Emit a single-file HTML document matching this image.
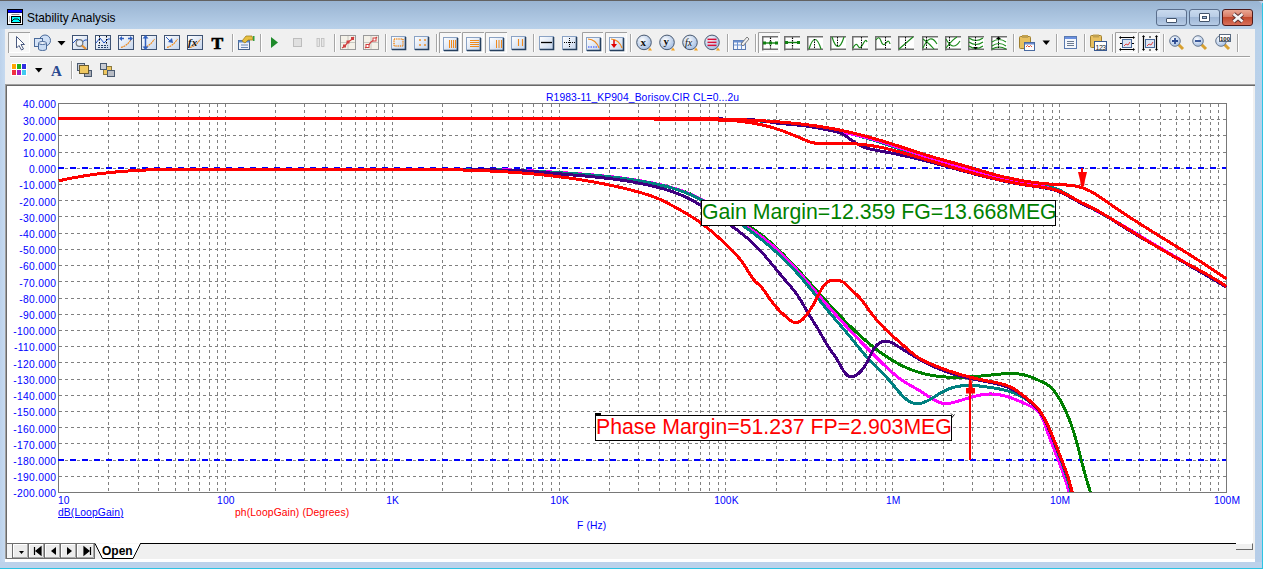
<!DOCTYPE html>
<html><head><meta charset="utf-8"><style>
*{margin:0;padding:0;box-sizing:border-box}
html,body{width:1263px;height:569px;overflow:hidden;background:#bcd2eb;font-family:"Liberation Sans", sans-serif}
.abs{position:absolute}
.g{stroke:#808080;stroke-width:1;stroke-dasharray:3 3}
.yl{position:absolute;right:1206.7px;font-size:10.3px;letter-spacing:0.3px;color:#0000ff;line-height:12px;white-space:nowrap}
.xl{position:absolute;font-size:10.3px;letter-spacing:0.12px;color:#0000ff;line-height:12px;white-space:nowrap}
.xc{width:60px;text-align:center}
.ann{position:absolute;background:#fff;border:1px solid #000;font-size:21.27px;line-height:22px;white-space:nowrap;padding-left:0px}
.wb{position:absolute;top:9px;height:17px;border-radius:3px;border:1px solid #5a6e8c}
</style></head><body>
<div class="abs" style="left:0;top:0;width:1263px;height:1px;background:#626262"></div>
<div class="abs" style="left:0;top:1px;width:1262px;height:28px;background:linear-gradient(#99b4d2,#b9d1ea);border-top-right-radius:5px"></div>
<div class="abs" style="left:0;top:29px;width:5px;height:533px;background:linear-gradient(90deg,#bcd2eb,#c6daf0)"></div>
<div class="abs" style="left:1255px;top:29px;width:7px;height:539px;background:linear-gradient(#b9d1ea,#b6cde8)"></div>
<div class="abs" style="left:1262px;top:3px;width:1px;height:566px;background:#2ec4e4"></div>
<div class="abs" style="left:0;top:562px;width:1262px;height:6px;background:#bcd2eb"></div>
<div class="abs" style="left:0;top:568px;width:1263px;height:1px;background:#2ec4e4"></div>
<!-- title icon -->
<svg class="abs" style="left:7px;top:9px" width="16" height="16"><rect x="0" y="0" width="16" height="16" fill="#000"/><rect x="1" y="1" width="14" height="2.5" fill="#0000ff"/><rect x="1" y="4" width="14" height="11" fill="#fff"/><rect x="4.5" y="5" width="8" height="1" fill="#909090"/><rect x="2" y="7.5" width="1" height="1" fill="#888"/><rect x="2" y="9.5" width="1" height="1" fill="#888"/><rect x="2" y="11.5" width="1" height="1" fill="#888"/><rect x="4" y="7" width="10" height="7" fill="#000"/><rect x="5" y="8" width="8" height="5" fill="#00ffff"/><path d="M5,12 L7,10 H11 L13,12" stroke="#000" stroke-width="0.9" fill="none"/></svg>
<div class="abs" style="left:27px;top:11px;font-size:11.9px;color:#000;line-height:15px">Stability Analysis</div>
<!-- window buttons -->
<div class="wb" style="left:1156px;width:31px;background:linear-gradient(#c9daee 0%,#b9cde6 45%,#9fb7d6 50%,#b6cbe5 100%)"><div class="abs" style="left:9px;top:8px;width:11px;height:5px;background:#fff;border:1px solid #42536b;border-radius:1px"></div></div>
<div class="wb" style="left:1189px;width:31px;background:linear-gradient(#c9daee 0%,#b9cde6 45%,#9fb7d6 50%,#b6cbe5 100%)"><div class="abs" style="left:9px;top:3px;width:11px;height:9px;background:#fff;border:1px solid #42536b;border-radius:1px"><div class="abs" style="left:2px;top:2px;width:5px;height:3px;background:#a8c0dc;border:1px solid #42536b"></div></div></div>
<div class="wb" style="left:1222px;width:31px;border-color:#4e1a1a;background:linear-gradient(#eaa894 0%,#d97a64 45%,#c24a2e 50%,#d8705a 100%)"><svg class="abs" style="left:0;top:0" width="31" height="17"><path d="M10.5,4 L19.5,11.5 M19.5,4 L10.5,11.5" stroke="#5a3030" stroke-width="4.4"/><path d="M10.5,4 L19.5,11.5 M19.5,4 L10.5,11.5" stroke="#f4f4f4" stroke-width="2.6"/></svg></div>
<!-- toolbar -->
<div class="abs" style="left:5px;top:29px;width:1250px;height:55px;background:#f0f0f0"></div>
<div class="abs" style="left:10px;top:56px;width:1240px;height:1px;background:#a0a0a0"></div>
<div class="abs" style="left:10px;top:57px;width:1240px;height:1px;background:#ffffff"></div>
<!-- chart panel -->
<div class="abs" style="left:5px;top:84px;width:1250px;height:475px;background:#fff;border-top:1px solid #a0a0a0;border-left:1px solid #a0a0a0"></div>
<div class="abs" style="left:6px;top:85px;width:1249px;height:474px;border-top:1px solid #696969;border-left:1px solid #696969;background:#fff"></div>
<div class="abs" style="left:1253px;top:86px;width:2px;height:473px;background:#f0f0f0"></div>
<!-- tab bar -->
<div class="abs" style="left:7px;top:543px;width:1246px;height:16px;background:#f0f0f0"></div>
<div class="abs" style="left:140px;top:543px;width:1096px;height:1px;background:#000"></div>
<div class="abs" style="left:1236px;top:543px;width:17px;height:7px;background:#f0f0f0;border-right:1px solid #696969;border-bottom:1px solid #696969;border-top:1px solid #fff"></div>
<div class="abs" style="left:5px;top:559px;width:1250px;height:3px;background:#fff"></div>
<svg class="abs" style="left:0;top:0" width="1263" height="569">
<defs><linearGradient id="gb" x1="0" y1="0" x2="1" y2="1"><stop offset="0" stop-color="#ffffff"/><stop offset="1" stop-color="#c4d4ec"/></linearGradient><radialGradient id="cb" cx="0.4" cy="0.35" r="0.7"><stop offset="0" stop-color="#ffffff"/><stop offset="1" stop-color="#9cb8e0"/></radialGradient><clipPath id="pc"><rect x="58" y="103" width="1169" height="390"/></clipPath></defs>
<line x1="108.5" y1="104" x2="108.5" y2="492" class="g"/>
<line x1="138.5" y1="104" x2="138.5" y2="492" class="g"/>
<line x1="158.5" y1="104" x2="158.5" y2="492" class="g"/>
<line x1="175.5" y1="104" x2="175.5" y2="492" class="g"/>
<line x1="188.5" y1="104" x2="188.5" y2="492" class="g"/>
<line x1="199.5" y1="104" x2="199.5" y2="492" class="g"/>
<line x1="209.5" y1="104" x2="209.5" y2="492" class="g"/>
<line x1="217.5" y1="104" x2="217.5" y2="492" class="g"/>
<line x1="225.5" y1="104" x2="225.5" y2="492" class="g"/>
<line x1="275.5" y1="104" x2="275.5" y2="492" class="g"/>
<line x1="304.5" y1="104" x2="304.5" y2="492" class="g"/>
<line x1="325.5" y1="104" x2="325.5" y2="492" class="g"/>
<line x1="341.5" y1="104" x2="341.5" y2="492" class="g"/>
<line x1="355.5" y1="104" x2="355.5" y2="492" class="g"/>
<line x1="366.5" y1="104" x2="366.5" y2="492" class="g"/>
<line x1="376.5" y1="104" x2="376.5" y2="492" class="g"/>
<line x1="384.5" y1="104" x2="384.5" y2="492" class="g"/>
<line x1="392.5" y1="104" x2="392.5" y2="492" class="g"/>
<line x1="442.5" y1="104" x2="442.5" y2="492" class="g"/>
<line x1="471.5" y1="104" x2="471.5" y2="492" class="g"/>
<line x1="492.5" y1="104" x2="492.5" y2="492" class="g"/>
<line x1="508.5" y1="104" x2="508.5" y2="492" class="g"/>
<line x1="522.5" y1="104" x2="522.5" y2="492" class="g"/>
<line x1="533.5" y1="104" x2="533.5" y2="492" class="g"/>
<line x1="542.5" y1="104" x2="542.5" y2="492" class="g"/>
<line x1="551.5" y1="104" x2="551.5" y2="492" class="g"/>
<line x1="559.5" y1="104" x2="559.5" y2="492" class="g"/>
<line x1="609.5" y1="104" x2="609.5" y2="492" class="g"/>
<line x1="638.5" y1="104" x2="638.5" y2="492" class="g"/>
<line x1="659.5" y1="104" x2="659.5" y2="492" class="g"/>
<line x1="675.5" y1="104" x2="675.5" y2="492" class="g"/>
<line x1="688.5" y1="104" x2="688.5" y2="492" class="g"/>
<line x1="700.5" y1="104" x2="700.5" y2="492" class="g"/>
<line x1="709.5" y1="104" x2="709.5" y2="492" class="g"/>
<line x1="718.5" y1="104" x2="718.5" y2="492" class="g"/>
<line x1="725.5" y1="104" x2="725.5" y2="492" class="g"/>
<line x1="776.5" y1="104" x2="776.5" y2="492" class="g"/>
<line x1="805.5" y1="104" x2="805.5" y2="492" class="g"/>
<line x1="826.5" y1="104" x2="826.5" y2="492" class="g"/>
<line x1="842.5" y1="104" x2="842.5" y2="492" class="g"/>
<line x1="855.5" y1="104" x2="855.5" y2="492" class="g"/>
<line x1="866.5" y1="104" x2="866.5" y2="492" class="g"/>
<line x1="876.5" y1="104" x2="876.5" y2="492" class="g"/>
<line x1="885.5" y1="104" x2="885.5" y2="492" class="g"/>
<line x1="892.5" y1="104" x2="892.5" y2="492" class="g"/>
<line x1="943.5" y1="104" x2="943.5" y2="492" class="g"/>
<line x1="972.5" y1="104" x2="972.5" y2="492" class="g"/>
<line x1="993.5" y1="104" x2="993.5" y2="492" class="g"/>
<line x1="1009.5" y1="104" x2="1009.5" y2="492" class="g"/>
<line x1="1022.5" y1="104" x2="1022.5" y2="492" class="g"/>
<line x1="1033.5" y1="104" x2="1033.5" y2="492" class="g"/>
<line x1="1043.5" y1="104" x2="1043.5" y2="492" class="g"/>
<line x1="1052.5" y1="104" x2="1052.5" y2="492" class="g"/>
<line x1="1059.5" y1="104" x2="1059.5" y2="492" class="g"/>
<line x1="1109.5" y1="104" x2="1109.5" y2="492" class="g"/>
<line x1="1139.5" y1="104" x2="1139.5" y2="492" class="g"/>
<line x1="1160.5" y1="104" x2="1160.5" y2="492" class="g"/>
<line x1="1176.5" y1="104" x2="1176.5" y2="492" class="g"/>
<line x1="1189.5" y1="104" x2="1189.5" y2="492" class="g"/>
<line x1="1200.5" y1="104" x2="1200.5" y2="492" class="g"/>
<line x1="1210.5" y1="104" x2="1210.5" y2="492" class="g"/>
<line x1="1218.5" y1="104" x2="1218.5" y2="492" class="g"/>
<line x1="59" y1="119.5" x2="1226" y2="119.5" class="g"/>
<line x1="59" y1="135.5" x2="1226" y2="135.5" class="g"/>
<line x1="59" y1="152.5" x2="1226" y2="152.5" class="g"/>
<line x1="59" y1="168.5" x2="1226" y2="168.5" class="g"/>
<line x1="59" y1="184.5" x2="1226" y2="184.5" class="g"/>
<line x1="59" y1="200.5" x2="1226" y2="200.5" class="g"/>
<line x1="59" y1="216.5" x2="1226" y2="216.5" class="g"/>
<line x1="59" y1="233.5" x2="1226" y2="233.5" class="g"/>
<line x1="59" y1="249.5" x2="1226" y2="249.5" class="g"/>
<line x1="59" y1="265.5" x2="1226" y2="265.5" class="g"/>
<line x1="59" y1="281.5" x2="1226" y2="281.5" class="g"/>
<line x1="59" y1="298.5" x2="1226" y2="298.5" class="g"/>
<line x1="59" y1="314.5" x2="1226" y2="314.5" class="g"/>
<line x1="59" y1="330.5" x2="1226" y2="330.5" class="g"/>
<line x1="59" y1="346.5" x2="1226" y2="346.5" class="g"/>
<line x1="59" y1="362.5" x2="1226" y2="362.5" class="g"/>
<line x1="59" y1="379.5" x2="1226" y2="379.5" class="g"/>
<line x1="59" y1="395.5" x2="1226" y2="395.5" class="g"/>
<line x1="59" y1="411.5" x2="1226" y2="411.5" class="g"/>
<line x1="59" y1="427.5" x2="1226" y2="427.5" class="g"/>
<line x1="59" y1="443.5" x2="1226" y2="443.5" class="g"/>
<line x1="59" y1="460.5" x2="1226" y2="460.5" class="g"/>
<line x1="59" y1="476.5" x2="1226" y2="476.5" class="g"/>
<rect x="58.5" y="103.5" width="1168" height="389" fill="none" stroke="#787878" stroke-width="1"/>
<line x1="58" y1="168" x2="1226" y2="168" stroke="#0000ff" stroke-width="2" stroke-dasharray="6 6"/>
<line x1="58" y1="460" x2="1226" y2="460" stroke="#0000ff" stroke-width="2" stroke-dasharray="6 6"/>
<path d="M58.5,118.23 L59.5,118.23 L60.5,118.23 L61.5,118.24 L62.5,118.24 L63.5,118.24 L64.5,118.25 L65.5,118.25 L66.5,118.25 L67.5,118.25 L68.5,118.26 L69.5,118.26 L70.5,118.26 L71.5,118.27 L72.5,118.27 L73.5,118.27 L74.5,118.27 L75.5,118.28 L76.5,118.28 L77.5,118.28 L78.5,118.28 L79.5,118.29 L80.5,118.29 L81.5,118.29 L82.5,118.29 L83.5,118.30 L84.5,118.30 L85.5,118.30 L86.5,118.30 L87.5,118.30 L88.5,118.31 L89.5,118.31 L90.5,118.31 L91.5,118.31 L92.5,118.32 L93.5,118.32 L94.5,118.32 L95.5,118.32 L96.5,118.32 L97.5,118.33 L98.5,118.33 L99.5,118.33 L100.5,118.33 L101.5,118.33 L102.5,118.33 L103.5,118.34 L104.5,118.34 L105.5,118.34 L106.5,118.34 L107.5,118.34 L108.5,118.34 L109.5,118.34 L110.5,118.35 L111.5,118.35 L112.5,118.35 L113.5,118.35 L114.5,118.35 L115.5,118.35 L116.5,118.35 L117.5,118.36 L118.5,118.36 L119.5,118.36 L120.5,118.36 L121.5,118.36 L122.5,118.36 L123.5,118.36 L124.5,118.36 L125.5,118.36 L126.5,118.37 L127.5,118.37 L128.5,118.37 L129.5,118.37 L130.5,118.37 L131.5,118.37 L132.5,118.37 L133.5,118.37 L134.5,118.37 L135.5,118.37 L136.5,118.37 L137.5,118.37 L138.5,118.38 L139.5,118.38 L140.5,118.38 L141.5,118.38 L142.5,118.38 L143.5,118.38 L144.5,118.38 L145.5,118.38 L146.5,118.38 L147.5,118.38 L148.5,118.38 L149.5,118.38 L150.5,118.38 L151.5,118.38 L152.5,118.38 L153.5,118.38 L154.5,118.38 L155.5,118.38 L156.5,118.38 L157.5,118.38 L158.5,118.38 L159.5,118.38 L160.5,118.38 L161.5,118.38 L162.5,118.38 L163.5,118.38 L164.5,118.39 L165.5,118.39 L166.5,118.39 L167.5,118.39 L168.5,118.39 L169.5,118.39 L170.5,118.39 L171.5,118.39 L172.5,118.39 L173.5,118.39 L174.5,118.39 L175.5,118.39 L176.5,118.39 L177.5,118.39 L178.5,118.38 L179.5,118.38 L180.5,118.38 L181.5,118.38 L182.5,118.38 L183.5,118.38 L184.5,118.38 L185.5,118.38 L186.5,118.38 L187.5,118.38 L188.5,118.38 L189.5,118.38 L190.5,118.38 L191.5,118.38 L192.5,118.38 L193.5,118.38 L194.5,118.38 L195.5,118.38 L196.5,118.38 L197.5,118.38 L198.5,118.38 L199.5,118.38 L200.5,118.38 L201.5,118.38 L202.5,118.38 L203.5,118.38 L204.5,118.38 L205.5,118.38 L206.5,118.38 L207.5,118.38 L208.5,118.38 L209.5,118.37 L210.5,118.37 L211.5,118.37 L212.5,118.37 L213.5,118.37 L214.5,118.37 L215.5,118.37 L216.5,118.37 L217.5,118.37 L218.5,118.37 L219.5,118.37 L220.5,118.37 L221.5,118.37 L222.5,118.37 L223.5,118.37 L224.5,118.37 L225.5,118.37 L226.5,118.36 L227.5,118.36 L228.5,118.36 L229.5,118.36 L230.5,118.36 L231.5,118.36 L232.5,118.36 L233.5,118.36 L234.5,118.36 L235.5,118.36 L236.5,118.36 L237.5,118.36 L238.5,118.36 L239.5,118.36 L240.5,118.36 L241.5,118.36 L242.5,118.35 L243.5,118.35 L244.5,118.35 L245.5,118.35 L246.5,118.35 L247.5,118.35 L248.5,118.35 L249.5,118.35 L250.5,118.35 L251.5,118.35 L252.5,118.35 L253.5,118.35 L254.5,118.35 L255.5,118.35 L256.5,118.34 L257.5,118.34 L258.5,118.34 L259.5,118.34 L260.5,118.34 L261.5,118.34 L262.5,118.34 L263.5,118.34 L264.5,118.34 L265.5,118.34 L266.5,118.34 L267.5,118.34 L268.5,118.34 L269.5,118.34 L270.5,118.34 L271.5,118.33 L272.5,118.33 L273.5,118.33 L274.5,118.33 L275.5,118.33 L276.5,118.33 L277.5,118.33 L278.5,118.33 L279.5,118.33 L280.5,118.33 L281.5,118.33 L282.5,118.33 L283.5,118.33 L284.5,118.33 L285.5,118.33 L286.5,118.33 L287.5,118.32 L288.5,118.32 L289.5,118.32 L290.5,118.32 L291.5,118.32 L292.5,118.32 L293.5,118.32 L294.5,118.32 L295.5,118.32 L296.5,118.32 L297.5,118.32 L298.5,118.32 L299.5,118.32 L300.5,118.32 L301.5,118.32 L302.5,118.32 L303.5,118.32 L304.5,118.32 L305.5,118.32 L306.5,118.32 L307.5,118.32 L308.5,118.31 L309.5,118.31 L310.5,118.31 L311.5,118.31 L312.5,118.31 L313.5,118.31 L314.5,118.31 L315.5,118.31 L316.5,118.31 L317.5,118.31 L318.5,118.31 L319.5,118.31 L320.5,118.31 L321.5,118.31 L322.5,118.31 L323.5,118.31 L324.5,118.31 L325.5,118.31 L326.5,118.31 L327.5,118.31 L328.5,118.31 L329.5,118.31 L330.5,118.31 L331.5,118.31 L332.5,118.31 L333.5,118.31 L334.5,118.31 L335.5,118.31 L336.5,118.31 L337.5,118.31 L338.5,118.31 L339.5,118.31 L340.5,118.31 L341.5,118.31 L342.5,118.31 L343.5,118.31 L344.5,118.31 L345.5,118.31 L346.5,118.31 L347.5,118.31 L348.5,118.31 L349.5,118.31 L350.5,118.31 L351.5,118.31 L352.5,118.31 L353.5,118.31 L354.5,118.31 L355.5,118.32 L356.5,118.32 L357.5,118.32 L358.5,118.32 L359.5,118.32 L360.5,118.32 L361.5,118.32 L362.5,118.32 L363.5,118.32 L364.5,118.32 L365.5,118.32 L366.5,118.32 L367.5,118.32 L368.5,118.32 L369.5,118.32 L370.5,118.32 L371.5,118.33 L372.5,118.33 L373.5,118.33 L374.5,118.33 L375.5,118.33 L376.5,118.33 L377.5,118.33 L378.5,118.33 L379.5,118.33 L380.5,118.33 L381.5,118.34 L382.5,118.34 L383.5,118.34 L384.5,118.34 L385.5,118.34 L386.5,118.34 L387.5,118.34 L388.5,118.34 L389.5,118.34 L390.5,118.35 L391.5,118.35 L392.5,118.35 L393.5,118.35 L394.5,118.35 L395.5,118.35 L396.5,118.35 L397.5,118.36 L398.5,118.36 L399.5,118.36 L400.5,118.36 L401.5,118.36 L402.5,118.36 L403.5,118.37 L404.5,118.37 L405.5,118.37 L406.5,118.37 L407.5,118.37 L408.5,118.38 L409.5,118.38 L410.5,118.38 L411.5,118.38 L412.5,118.38 L413.5,118.39 L414.5,118.39 L415.5,118.39 L416.5,118.39 L417.5,118.39 L418.5,118.40 L419.5,118.40 L420.5,118.40 L421.5,118.40 L422.5,118.41 L423.5,118.41 L424.5,118.41 L425.5,118.41 L426.5,118.41 L427.5,118.42 L428.5,118.42 L429.5,118.42 L430.5,118.42 L431.5,118.43 L432.5,118.43 L433.5,118.43 L434.5,118.43 L435.5,118.44 L436.5,118.44 L437.5,118.44 L438.5,118.44 L439.5,118.45 L440.5,118.45 L441.5,118.45 L442.5,118.45 L443.5,118.46 L444.5,118.46 L445.5,118.46 L446.5,118.46 L447.5,118.47 L448.5,118.47 L449.5,118.47 L450.5,118.48 L451.5,118.48 L452.5,118.48 L453.5,118.48 L454.5,118.49 L455.5,118.49 L456.5,118.49 L457.5,118.49 L458.5,118.50 L459.5,118.50 L460.5,118.50 L461.5,118.50 L462.5,118.51 L463.5,118.51 L464.5,118.51 L465.5,118.51 L466.5,118.52 L467.5,118.52 L468.5,118.52 L469.5,118.52 L470.5,118.53 L471.5,118.53 L472.5,118.53 L473.5,118.53 L474.5,118.53 L475.5,118.54 L476.5,118.54 L477.5,118.54 L478.5,118.54 L479.5,118.55 L480.5,118.55 L481.5,118.55 L482.5,118.55 L483.5,118.55 L484.5,118.56 L485.5,118.56 L486.5,118.56 L487.5,118.56 L488.5,118.56 L489.5,118.57 L490.5,118.57 L491.5,118.57 L492.5,118.57 L493.5,118.57 L494.5,118.57 L495.5,118.58 L496.5,118.58 L497.5,118.58 L498.5,118.58 L499.5,118.58 L500.5,118.58 L501.5,118.59 L502.5,118.59 L503.5,118.59 L504.5,118.59 L505.5,118.59 L506.5,118.59 L507.5,118.59 L508.5,118.59 L509.5,118.60 L510.5,118.60 L511.5,118.60 L512.5,118.60 L513.5,118.60 L514.5,118.60 L515.5,118.60 L516.5,118.60 L517.5,118.60 L518.5,118.60 L519.5,118.60 L520.5,118.60 L521.5,118.60 L522.5,118.60 L523.5,118.60 L524.5,118.60 L525.5,118.60 L526.5,118.60 L527.5,118.60 L528.5,118.60 L529.5,118.60 L530.5,118.60 L531.5,118.60 L532.5,118.60 L533.5,118.60 L534.5,118.60 L535.5,118.60 L536.5,118.60 L537.5,118.60 L538.5,118.60 L539.5,118.60 L540.5,118.60 L541.5,118.60 L542.5,118.59 L543.5,118.59 L544.5,118.59 L545.5,118.59 L546.5,118.59 L547.5,118.59 L548.5,118.59 L549.5,118.58 L550.5,118.58 L551.5,118.58 L552.5,118.58 L553.5,118.58 L554.5,118.57 L555.5,118.57 L556.5,118.57 L557.5,118.57 L558.5,118.57 L559.5,118.56 L560.5,118.56 L561.5,118.56 L562.5,118.55 L563.5,118.55 L564.5,118.55 L565.5,118.54 L566.5,118.54 L567.5,118.54 L568.5,118.53 L569.5,118.53 L570.5,118.53 L571.5,118.52 L572.5,118.52 L573.5,118.52 L574.5,118.51 L575.5,118.51 L576.5,118.50 L577.5,118.50 L578.5,118.49 L579.5,118.49 L580.5,118.48 L581.5,118.48 L582.5,118.48 L583.5,118.47 L584.5,118.46 L585.5,118.46 L586.5,118.45 L587.5,118.45 L588.5,118.44 L589.5,118.44 L590.5,118.43 L591.5,118.43 L592.5,118.42 L593.5,118.41 L594.5,118.41 L595.5,118.40 L596.5,118.40 L597.5,118.39 L598.5,118.38 L599.5,118.38 L600.5,118.37 L601.5,118.36 L602.5,118.36 L603.5,118.35 L604.5,118.35 L605.5,118.34 L606.5,118.33 L607.5,118.33 L608.5,118.32 L609.5,118.31 L610.5,118.31 L611.5,118.30 L612.5,118.30 L613.5,118.29 L614.5,118.28 L615.5,118.28 L616.5,118.27 L617.5,118.27 L618.5,118.26 L619.5,118.26 L620.5,118.25 L621.5,118.24 L622.5,118.24 L623.5,118.23 L624.5,118.23 L625.5,118.22 L626.5,118.22 L627.5,118.21 L628.5,118.21 L629.5,118.20 L630.5,118.20 L631.5,118.20 L632.5,118.19 L633.5,118.19 L634.5,118.18 L635.5,118.18 L636.5,118.18 L637.5,118.17 L638.5,118.17 L639.5,118.17 L640.5,118.17 L641.5,118.16 L642.5,118.16 L643.5,118.16 L644.5,118.16 L645.5,118.16 L646.5,118.16 L647.5,118.15 L648.5,118.15 L649.5,118.15 L650.5,118.15 L651.5,118.15 L652.5,118.15 L653.5,118.15 L654.5,118.15 L655.5,118.16 L656.5,118.16 L657.5,118.16 L658.5,118.16 L659.5,118.16 L660.5,118.17 L661.5,118.17 L662.5,118.17 L663.5,118.18 L664.5,118.18 L665.5,118.18 L666.5,118.19 L667.5,118.19 L668.5,118.20 L669.5,118.20 L670.5,118.21 L671.5,118.22 L672.5,118.22 L673.5,118.23 L674.5,118.24 L675.5,118.25 L676.5,118.26 L677.5,118.26 L678.5,118.27 L679.5,118.28 L680.5,118.29 L681.5,118.30 L682.5,118.31 L683.5,118.33 L684.5,118.34 L685.5,118.35 L686.5,118.36 L687.5,118.38 L688.5,118.39 L689.5,118.40 L690.5,118.42 L691.5,118.43 L692.5,118.45 L693.5,118.47 L694.5,118.48 L695.5,118.50 L696.5,118.52 L697.5,118.53 L698.5,118.55 L699.5,118.57 L700.5,118.59 L701.5,118.61 L702.5,118.63 L703.5,118.66 L704.5,118.68 L705.5,118.70 L706.5,118.72 L707.5,118.75 L708.5,118.77 L709.5,118.80 L710.5,118.82 L711.5,118.85 L712.5,118.87 L713.5,118.90 L714.5,118.93 L715.5,118.96 L716.5,118.99 L717.5,119.02 L718.5,119.05 L719.5,119.08 L720.5,119.11 L721.5,119.14 L722.5,119.18 L723.5,119.21 L724.5,119.24 L725.5,119.28 L726.5,119.31 L727.5,119.35 L728.5,119.39 L729.5,119.43 L730.5,119.46 L731.5,119.50 L732.5,119.54 L733.5,119.58 L734.5,119.63 L735.5,119.67 L736.5,119.71 L737.5,119.75 L738.5,119.80 L739.5,119.84 L740.5,119.89 L741.5,119.94 L742.5,119.99 L743.5,120.04 L744.5,120.09 L745.5,120.14 L746.5,120.19 L747.5,120.24 L748.5,120.29 L749.5,120.35 L750.5,120.41 L751.5,120.46 L752.5,120.52 L753.5,120.58 L754.5,120.64 L755.5,120.70 L756.5,120.76 L757.5,120.83 L758.5,120.89 L759.5,120.96 L760.5,121.02 L761.5,121.09 L762.5,121.16 L763.5,121.23 L764.5,121.30 L765.5,121.37 L766.5,121.45 L767.5,121.52 L768.5,121.60 L769.5,121.68 L770.5,121.76 L771.5,121.84 L772.5,121.92 L773.5,122.00 L774.5,122.09 L775.5,122.17 L776.5,122.26 L777.5,122.35 L778.5,122.44 L779.5,122.53 L780.5,122.63 L781.5,122.72 L782.5,122.82 L783.5,122.91 L784.5,123.01 L785.5,123.11 L786.5,123.22 L787.5,123.32 L788.5,123.43 L789.5,123.53 L790.5,123.64 L791.5,123.75 L792.5,123.86 L793.5,123.98 L794.5,124.09 L795.5,124.21 L796.5,124.33 L797.5,124.45 L798.5,124.57 L799.5,124.70 L800.5,124.82 L801.5,124.95 L802.5,125.08 L803.5,125.21 L804.5,125.35 L805.5,125.48 L806.5,125.62 L807.5,125.76 L808.5,125.90 L809.5,126.04 L810.5,126.18 L811.5,126.33 L812.5,126.48 L813.5,126.63 L814.5,126.78 L815.5,126.94 L816.5,127.09 L817.5,127.25 L818.5,127.41 L819.5,127.58 L820.5,127.74 L821.5,127.91 L822.5,128.08 L823.5,128.25 L824.5,128.43 L825.5,128.60 L826.5,128.78 L827.5,128.96 L828.5,129.15 L829.5,129.33 L830.5,129.52 L831.5,129.71 L832.5,129.91 L833.5,130.10 L834.5,130.30 L835.5,130.50 L836.5,130.70 L837.5,130.91 L838.5,131.12 L839.5,131.33 L840.5,131.54 L841.5,131.76 L842.5,131.98 L843.5,132.20 L844.5,132.42 L845.5,132.65 L846.5,132.88 L847.5,133.11 L848.5,133.35 L849.5,133.59 L850.5,133.83 L851.5,134.07 L852.5,134.32 L853.5,134.57 L854.5,134.82 L855.5,135.08 L856.5,135.33 L857.5,135.59 L858.5,135.86 L859.5,136.13 L860.5,136.40 L861.5,136.67 L862.5,136.95 L863.5,137.23 L864.5,137.51 L865.5,137.80 L866.5,138.08 L867.5,138.38 L868.5,138.67 L869.5,138.97 L870.5,139.27 L871.5,139.58 L872.5,139.88 L873.5,140.19 L874.5,140.50 L875.5,140.82 L876.5,141.13 L877.5,141.45 L878.5,141.77 L879.5,142.10 L880.5,142.42 L881.5,142.75 L882.5,143.08 L883.5,143.41 L884.5,143.74 L885.5,144.07 L886.5,144.41 L887.5,144.74 L888.5,145.08 L889.5,145.42 L890.5,145.76 L891.5,146.10 L892.5,146.44 L893.5,146.78 L894.5,147.12 L895.5,147.47 L896.5,147.81 L897.5,148.15 L898.5,148.50 L899.5,148.84 L900.5,149.19 L901.5,149.53 L902.5,149.87 L903.5,150.22 L904.5,150.56 L905.5,150.90 L906.5,151.25 L907.5,151.59 L908.5,151.93 L909.5,152.27 L910.5,152.61 L911.5,152.95 L912.5,153.29 L913.5,153.63 L914.5,153.96 L915.5,154.29 L916.5,154.63 L917.5,154.96 L918.5,155.29 L919.5,155.62 L920.5,155.94 L921.5,156.27 L922.5,156.59 L923.5,156.91 L924.5,157.23 L925.5,157.55 L926.5,157.86 L927.5,158.18 L928.5,158.49 L929.5,158.80 L930.5,159.11 L931.5,159.42 L932.5,159.73 L933.5,160.03 L934.5,160.34 L935.5,160.64 L936.5,160.94 L937.5,161.24 L938.5,161.54 L939.5,161.84 L940.5,162.13 L941.5,162.43 L942.5,162.72 L943.5,163.01 L944.5,163.31 L945.5,163.60 L946.5,163.88 L947.5,164.17 L948.5,164.46 L949.5,164.75 L950.5,165.03 L951.5,165.31 L952.5,165.60 L953.5,165.88 L954.5,166.16 L955.5,166.44 L956.5,166.72 L957.5,166.99 L958.5,167.27 L959.5,167.55 L960.5,167.82 L961.5,168.10 L962.5,168.37 L963.5,168.64 L964.5,168.92 L965.5,169.19 L966.5,169.46 L967.5,169.73 L968.5,170.00 L969.5,170.27 L970.5,170.53 L971.5,170.80 L972.5,171.07 L973.5,171.34 L974.5,171.60 L975.5,171.87 L976.5,172.13 L977.5,172.40 L978.5,172.66 L979.5,172.92 L980.5,173.19 L981.5,173.45 L982.5,173.71 L983.5,173.97 L984.5,174.22 L985.5,174.48 L986.5,174.74 L987.5,174.99 L988.5,175.24 L989.5,175.49 L990.5,175.74 L991.5,175.99 L992.5,176.24 L993.5,176.48 L994.5,176.73 L995.5,176.97 L996.5,177.21 L997.5,177.45 L998.5,177.68 L999.5,177.92 L1000.5,178.15 L1001.5,178.38 L1002.5,178.61 L1003.5,178.83 L1004.5,179.06 L1005.5,179.28 L1006.5,179.49 L1007.5,179.71 L1008.5,179.92 L1009.5,180.14 L1010.5,180.34 L1011.5,180.55 L1012.5,180.75 L1013.5,180.95 L1014.5,181.15 L1015.5,181.34 L1016.5,181.53 L1017.5,181.72 L1018.5,181.91 L1019.5,182.09 L1020.5,182.27 L1021.5,182.44 L1022.5,182.61 L1023.5,182.78 L1024.5,182.95 L1025.5,183.11 L1026.5,183.27 L1027.5,183.42 L1028.5,183.57 L1029.5,183.72 L1030.5,183.86 L1031.5,184.00 L1032.5,184.13 L1033.5,184.27 L1034.5,184.39 L1035.5,184.52 L1036.5,184.64 L1037.5,184.77 L1038.5,184.90 L1039.5,185.03 L1040.5,185.16 L1041.5,185.30 L1042.5,185.45 L1043.5,185.60 L1044.5,185.76 L1045.5,185.94 L1046.5,186.12 L1047.5,186.32 L1048.5,186.54 L1049.5,186.76 L1050.5,187.01 L1051.5,187.27 L1052.5,187.56 L1053.5,187.86 L1054.5,188.19 L1055.5,188.53 L1056.5,188.91 L1057.5,189.31 L1058.5,189.73 L1059.5,190.18 L1060.5,190.67 L1061.5,191.17 L1062.5,191.70 L1063.5,192.25 L1064.5,192.82 L1065.5,193.39 L1066.5,193.98 L1067.5,194.58 L1068.5,195.17 L1069.5,195.77 L1070.5,196.37 L1071.5,196.96 L1072.5,197.55 L1073.5,198.14 L1074.5,198.72 L1075.5,199.30 L1076.5,199.87 L1077.5,200.45 L1078.5,201.02 L1079.5,201.58 L1080.5,202.15 L1081.5,202.71 L1082.5,203.27 L1083.5,203.83 L1084.5,204.38 L1085.5,204.94 L1086.5,205.49 L1087.5,206.04 L1088.5,206.59 L1089.5,207.13 L1090.5,207.68 L1091.5,208.22 L1092.5,208.77 L1093.5,209.31 L1094.5,209.85 L1095.5,210.39 L1096.5,210.94 L1097.5,211.48 L1098.5,212.02 L1099.5,212.56 L1100.5,213.10 L1101.5,213.64 L1102.5,214.18 L1103.5,214.73 L1104.5,215.27 L1105.5,215.81 L1106.5,216.36 L1107.5,216.90 L1108.5,217.45 L1109.5,218.00 L1110.5,218.55 L1111.5,219.11 L1112.5,219.66 L1113.5,220.22 L1114.5,220.77 L1115.5,221.34 L1116.5,221.90 L1117.5,222.47 L1118.5,223.03 L1119.5,223.61 L1120.5,224.18 L1121.5,224.76 L1122.5,225.34 L1123.5,225.92 L1124.5,226.50 L1125.5,227.09 L1126.5,227.67 L1127.5,228.26 L1128.5,228.86 L1129.5,229.45 L1130.5,230.04 L1131.5,230.64 L1132.5,231.24 L1133.5,231.84 L1134.5,232.44 L1135.5,233.04 L1136.5,233.64 L1137.5,234.24 L1138.5,234.85 L1139.5,235.45 L1140.5,236.06 L1141.5,236.66 L1142.5,237.27 L1143.5,237.87 L1144.5,238.48 L1145.5,239.08 L1146.5,239.69 L1147.5,240.29 L1148.5,240.90 L1149.5,241.50 L1150.5,242.11 L1151.5,242.71 L1152.5,243.31 L1153.5,243.91 L1154.5,244.52 L1155.5,245.11 L1156.5,245.71 L1157.5,246.31 L1158.5,246.91 L1159.5,247.50 L1160.5,248.10 L1161.5,248.69 L1162.5,249.28 L1163.5,249.88 L1164.5,250.47 L1165.5,251.06 L1166.5,251.65 L1167.5,252.24 L1168.5,252.83 L1169.5,253.42 L1170.5,254.00 L1171.5,254.59 L1172.5,255.18 L1173.5,255.76 L1174.5,256.35 L1175.5,256.93 L1176.5,257.52 L1177.5,258.10 L1178.5,258.69 L1179.5,259.27 L1180.5,259.85 L1181.5,260.44 L1182.5,261.02 L1183.5,261.60 L1184.5,262.19 L1185.5,262.77 L1186.5,263.35 L1187.5,263.93 L1188.5,264.52 L1189.5,265.10 L1190.5,265.68 L1191.5,266.26 L1192.5,266.85 L1193.5,267.43 L1194.5,268.01 L1195.5,268.60 L1196.5,269.18 L1197.5,269.76 L1198.5,270.35 L1199.5,270.93 L1200.5,271.52 L1201.5,272.10 L1202.5,272.69 L1203.5,273.27 L1204.5,273.86 L1205.5,274.45 L1206.5,275.04 L1207.5,275.62 L1208.5,276.21 L1209.5,276.80 L1210.5,277.39 L1211.5,277.98 L1212.5,278.58 L1213.5,279.17 L1214.5,279.76 L1215.5,280.36 L1216.5,280.95 L1217.5,281.55 L1218.5,282.14 L1219.5,282.74 L1220.5,283.34 L1221.5,283.94 L1222.5,284.54 L1223.5,285.14 L1224.5,285.75 L1225.5,286.35 L1226.3,286.84" fill="none" stroke="#008080" stroke-width="3" stroke-linejoin="round" shape-rendering="crispEdges" clip-path="url(#pc)"/>
<path d="M58.5,118.27 L59.5,118.28 L60.5,118.28 L61.5,118.28 L62.5,118.28 L63.5,118.28 L64.5,118.28 L65.5,118.28 L66.5,118.28 L67.5,118.29 L68.5,118.29 L69.5,118.29 L70.5,118.29 L71.5,118.29 L72.5,118.29 L73.5,118.29 L74.5,118.29 L75.5,118.30 L76.5,118.30 L77.5,118.30 L78.5,118.30 L79.5,118.30 L80.5,118.30 L81.5,118.30 L82.5,118.30 L83.5,118.30 L84.5,118.31 L85.5,118.31 L86.5,118.31 L87.5,118.31 L88.5,118.31 L89.5,118.31 L90.5,118.31 L91.5,118.31 L92.5,118.31 L93.5,118.31 L94.5,118.32 L95.5,118.32 L96.5,118.32 L97.5,118.32 L98.5,118.32 L99.5,118.32 L100.5,118.32 L101.5,118.32 L102.5,118.32 L103.5,118.32 L104.5,118.32 L105.5,118.32 L106.5,118.33 L107.5,118.33 L108.5,118.33 L109.5,118.33 L110.5,118.33 L111.5,118.33 L112.5,118.33 L113.5,118.33 L114.5,118.33 L115.5,118.33 L116.5,118.33 L117.5,118.33 L118.5,118.33 L119.5,118.33 L120.5,118.33 L121.5,118.34 L122.5,118.34 L123.5,118.34 L124.5,118.34 L125.5,118.34 L126.5,118.34 L127.5,118.34 L128.5,118.34 L129.5,118.34 L130.5,118.34 L131.5,118.34 L132.5,118.34 L133.5,118.34 L134.5,118.34 L135.5,118.34 L136.5,118.34 L137.5,118.34 L138.5,118.34 L139.5,118.34 L140.5,118.34 L141.5,118.34 L142.5,118.35 L143.5,118.35 L144.5,118.35 L145.5,118.35 L146.5,118.35 L147.5,118.35 L148.5,118.35 L149.5,118.35 L150.5,118.35 L151.5,118.35 L152.5,118.35 L153.5,118.35 L154.5,118.35 L155.5,118.35 L156.5,118.35 L157.5,118.35 L158.5,118.35 L159.5,118.35 L160.5,118.35 L161.5,118.35 L162.5,118.35 L163.5,118.35 L164.5,118.35 L165.5,118.35 L166.5,118.35 L167.5,118.35 L168.5,118.35 L169.5,118.35 L170.5,118.35 L171.5,118.35 L172.5,118.35 L173.5,118.35 L174.5,118.35 L175.5,118.35 L176.5,118.35 L177.5,118.35 L178.5,118.35 L179.5,118.35 L180.5,118.35 L181.5,118.35 L182.5,118.35 L183.5,118.35 L184.5,118.35 L185.5,118.35 L186.5,118.35 L187.5,118.35 L188.5,118.35 L189.5,118.35 L190.5,118.35 L191.5,118.35 L192.5,118.35 L193.5,118.35 L194.5,118.35 L195.5,118.35 L196.5,118.35 L197.5,118.35 L198.5,118.35 L199.5,118.35 L200.5,118.35 L201.5,118.35 L202.5,118.35 L203.5,118.35 L204.5,118.35 L205.5,118.35 L206.5,118.35 L207.5,118.35 L208.5,118.35 L209.5,118.35 L210.5,118.35 L211.5,118.35 L212.5,118.35 L213.5,118.35 L214.5,118.35 L215.5,118.35 L216.5,118.35 L217.5,118.35 L218.5,118.35 L219.5,118.35 L220.5,118.35 L221.5,118.35 L222.5,118.35 L223.5,118.35 L224.5,118.35 L225.5,118.35 L226.5,118.35 L227.5,118.35 L228.5,118.35 L229.5,118.35 L230.5,118.35 L231.5,118.35 L232.5,118.35 L233.5,118.35 L234.5,118.35 L235.5,118.35 L236.5,118.35 L237.5,118.35 L238.5,118.35 L239.5,118.35 L240.5,118.35 L241.5,118.35 L242.5,118.35 L243.5,118.35 L244.5,118.35 L245.5,118.35 L246.5,118.35 L247.5,118.35 L248.5,118.35 L249.5,118.35 L250.5,118.35 L251.5,118.35 L252.5,118.35 L253.5,118.35 L254.5,118.35 L255.5,118.35 L256.5,118.35 L257.5,118.35 L258.5,118.35 L259.5,118.35 L260.5,118.35 L261.5,118.35 L262.5,118.35 L263.5,118.35 L264.5,118.35 L265.5,118.35 L266.5,118.35 L267.5,118.35 L268.5,118.35 L269.5,118.35 L270.5,118.35 L271.5,118.35 L272.5,118.35 L273.5,118.35 L274.5,118.35 L275.5,118.35 L276.5,118.35 L277.5,118.35 L278.5,118.35 L279.5,118.35 L280.5,118.35 L281.5,118.35 L282.5,118.35 L283.5,118.35 L284.5,118.35 L285.5,118.35 L286.5,118.35 L287.5,118.35 L288.5,118.35 L289.5,118.35 L290.5,118.35 L291.5,118.35 L292.5,118.35 L293.5,118.35 L294.5,118.35 L295.5,118.35 L296.5,118.35 L297.5,118.35 L298.5,118.35 L299.5,118.35 L300.5,118.35 L301.5,118.35 L302.5,118.35 L303.5,118.35 L304.5,118.35 L305.5,118.35 L306.5,118.35 L307.5,118.35 L308.5,118.35 L309.5,118.35 L310.5,118.35 L311.5,118.35 L312.5,118.35 L313.5,118.35 L314.5,118.35 L315.5,118.35 L316.5,118.35 L317.5,118.35 L318.5,118.35 L319.5,118.35 L320.5,118.35 L321.5,118.35 L322.5,118.35 L323.5,118.35 L324.5,118.36 L325.5,118.36 L326.5,118.36 L327.5,118.36 L328.5,118.36 L329.5,118.36 L330.5,118.36 L331.5,118.36 L332.5,118.36 L333.5,118.36 L334.5,118.36 L335.5,118.36 L336.5,118.36 L337.5,118.36 L338.5,118.36 L339.5,118.36 L340.5,118.36 L341.5,118.36 L342.5,118.36 L343.5,118.36 L344.5,118.36 L345.5,118.36 L346.5,118.36 L347.5,118.36 L348.5,118.36 L349.5,118.36 L350.5,118.36 L351.5,118.36 L352.5,118.36 L353.5,118.36 L354.5,118.37 L355.5,118.37 L356.5,118.37 L357.5,118.37 L358.5,118.37 L359.5,118.37 L360.5,118.37 L361.5,118.37 L362.5,118.37 L363.5,118.37 L364.5,118.37 L365.5,118.37 L366.5,118.37 L367.5,118.37 L368.5,118.37 L369.5,118.37 L370.5,118.37 L371.5,118.38 L372.5,118.38 L373.5,118.38 L374.5,118.38 L375.5,118.38 L376.5,118.38 L377.5,118.38 L378.5,118.38 L379.5,118.38 L380.5,118.38 L381.5,118.38 L382.5,118.38 L383.5,118.38 L384.5,118.38 L385.5,118.39 L386.5,118.39 L387.5,118.39 L388.5,118.39 L389.5,118.39 L390.5,118.39 L391.5,118.39 L392.5,118.39 L393.5,118.39 L394.5,118.39 L395.5,118.39 L396.5,118.40 L397.5,118.40 L398.5,118.40 L399.5,118.40 L400.5,118.40 L401.5,118.40 L402.5,118.40 L403.5,118.40 L404.5,118.40 L405.5,118.40 L406.5,118.41 L407.5,118.41 L408.5,118.41 L409.5,118.41 L410.5,118.41 L411.5,118.41 L412.5,118.41 L413.5,118.41 L414.5,118.41 L415.5,118.42 L416.5,118.42 L417.5,118.42 L418.5,118.42 L419.5,118.42 L420.5,118.42 L421.5,118.42 L422.5,118.42 L423.5,118.42 L424.5,118.43 L425.5,118.43 L426.5,118.43 L427.5,118.43 L428.5,118.43 L429.5,118.43 L430.5,118.43 L431.5,118.43 L432.5,118.43 L433.5,118.44 L434.5,118.44 L435.5,118.44 L436.5,118.44 L437.5,118.44 L438.5,118.44 L439.5,118.44 L440.5,118.44 L441.5,118.44 L442.5,118.45 L443.5,118.45 L444.5,118.45 L445.5,118.45 L446.5,118.45 L447.5,118.45 L448.5,118.45 L449.5,118.45 L450.5,118.45 L451.5,118.46 L452.5,118.46 L453.5,118.46 L454.5,118.46 L455.5,118.46 L456.5,118.46 L457.5,118.46 L458.5,118.46 L459.5,118.46 L460.5,118.46 L461.5,118.47 L462.5,118.47 L463.5,118.47 L464.5,118.47 L465.5,118.47 L466.5,118.47 L467.5,118.47 L468.5,118.47 L469.5,118.47 L470.5,118.47 L471.5,118.48 L472.5,118.48 L473.5,118.48 L474.5,118.48 L475.5,118.48 L476.5,118.48 L477.5,118.48 L478.5,118.48 L479.5,118.48 L480.5,118.48 L481.5,118.48 L482.5,118.48 L483.5,118.48 L484.5,118.49 L485.5,118.49 L486.5,118.49 L487.5,118.49 L488.5,118.49 L489.5,118.49 L490.5,118.49 L491.5,118.49 L492.5,118.49 L493.5,118.49 L494.5,118.49 L495.5,118.49 L496.5,118.49 L497.5,118.49 L498.5,118.49 L499.5,118.49 L500.5,118.49 L501.5,118.49 L502.5,118.49 L503.5,118.50 L504.5,118.50 L505.5,118.50 L506.5,118.50 L507.5,118.50 L508.5,118.50 L509.5,118.50 L510.5,118.50 L511.5,118.50 L512.5,118.50 L513.5,118.50 L514.5,118.50 L515.5,118.50 L516.5,118.50 L517.5,118.50 L518.5,118.50 L519.5,118.50 L520.5,118.50 L521.5,118.50 L522.5,118.50 L523.5,118.50 L524.5,118.50 L525.5,118.50 L526.5,118.50 L527.5,118.50 L528.5,118.50 L529.5,118.49 L530.5,118.49 L531.5,118.49 L532.5,118.49 L533.5,118.49 L534.5,118.49 L535.5,118.49 L536.5,118.49 L537.5,118.49 L538.5,118.49 L539.5,118.49 L540.5,118.49 L541.5,118.49 L542.5,118.49 L543.5,118.49 L544.5,118.49 L545.5,118.48 L546.5,118.48 L547.5,118.48 L548.5,118.48 L549.5,118.48 L550.5,118.48 L551.5,118.48 L552.5,118.48 L553.5,118.48 L554.5,118.48 L555.5,118.47 L556.5,118.47 L557.5,118.47 L558.5,118.47 L559.5,118.47 L560.5,118.47 L561.5,118.47 L562.5,118.46 L563.5,118.46 L564.5,118.46 L565.5,118.46 L566.5,118.46 L567.5,118.46 L568.5,118.45 L569.5,118.45 L570.5,118.45 L571.5,118.45 L572.5,118.45 L573.5,118.44 L574.5,118.44 L575.5,118.44 L576.5,118.44 L577.5,118.44 L578.5,118.43 L579.5,118.43 L580.5,118.43 L581.5,118.43 L582.5,118.43 L583.5,118.42 L584.5,118.42 L585.5,118.42 L586.5,118.42 L587.5,118.42 L588.5,118.41 L589.5,118.41 L590.5,118.41 L591.5,118.41 L592.5,118.41 L593.5,118.40 L594.5,118.40 L595.5,118.40 L596.5,118.40 L597.5,118.40 L598.5,118.39 L599.5,118.39 L600.5,118.39 L601.5,118.39 L602.5,118.39 L603.5,118.39 L604.5,118.38 L605.5,118.38 L606.5,118.38 L607.5,118.38 L608.5,118.38 L609.5,118.38 L610.5,118.38 L611.5,118.37 L612.5,118.37 L613.5,118.37 L614.5,118.37 L615.5,118.37 L616.5,118.37 L617.5,118.37 L618.5,118.37 L619.5,118.36 L620.5,118.36 L621.5,118.36 L622.5,118.36 L623.5,118.36 L624.5,118.36 L625.5,118.36 L626.5,118.36 L627.5,118.36 L628.5,118.36 L629.5,118.36 L630.5,118.36 L631.5,118.36 L632.5,118.36 L633.5,118.36 L634.5,118.36 L635.5,118.36 L636.5,118.36 L637.5,118.36 L638.5,118.36 L639.5,118.36 L640.5,118.37 L641.5,118.37 L642.5,118.37 L643.5,118.37 L644.5,118.37 L645.5,118.37 L646.5,118.37 L647.5,118.38 L648.5,118.38 L649.5,118.38 L650.5,118.38 L651.5,118.38 L652.5,118.39 L653.5,118.39 L654.5,118.39 L655.5,118.39 L656.5,118.40 L657.5,118.40 L658.5,118.40 L659.5,118.41 L660.5,118.41 L661.5,118.41 L662.5,118.42 L663.5,118.42 L664.5,118.43 L665.5,118.43 L666.5,118.43 L667.5,118.44 L668.5,118.44 L669.5,118.45 L670.5,118.45 L671.5,118.46 L672.5,118.47 L673.5,118.47 L674.5,118.48 L675.5,118.48 L676.5,118.49 L677.5,118.50 L678.5,118.50 L679.5,118.51 L680.5,118.52 L681.5,118.52 L682.5,118.53 L683.5,118.54 L684.5,118.54 L685.5,118.55 L686.5,118.56 L687.5,118.57 L688.5,118.58 L689.5,118.59 L690.5,118.60 L691.5,118.60 L692.5,118.61 L693.5,118.62 L694.5,118.63 L695.5,118.64 L696.5,118.65 L697.5,118.66 L698.5,118.67 L699.5,118.68 L700.5,118.70 L701.5,118.71 L702.5,118.72 L703.5,118.73 L704.5,118.74 L705.5,118.75 L706.5,118.77 L707.5,118.78 L708.5,118.79 L709.5,118.81 L710.5,118.82 L711.5,118.83 L712.5,118.85 L713.5,118.86 L714.5,118.88 L715.5,118.89 L716.5,118.91 L717.5,118.92 L718.5,118.94 L719.5,118.95 L720.5,118.97 L721.5,118.99 L722.5,119.00 L723.5,119.02 L724.5,119.04 L725.5,119.06 L726.5,119.08 L727.5,119.10 L728.5,119.13 L729.5,119.15 L730.5,119.17 L731.5,119.20 L732.5,119.23 L733.5,119.25 L734.5,119.28 L735.5,119.31 L736.5,119.34 L737.5,119.38 L738.5,119.41 L739.5,119.45 L740.5,119.48 L741.5,119.52 L742.5,119.56 L743.5,119.61 L744.5,119.65 L745.5,119.69 L746.5,119.74 L747.5,119.79 L748.5,119.84 L749.5,119.89 L750.5,119.95 L751.5,120.01 L752.5,120.07 L753.5,120.13 L754.5,120.19 L755.5,120.26 L756.5,120.33 L757.5,120.40 L758.5,120.47 L759.5,120.55 L760.5,120.62 L761.5,120.70 L762.5,120.79 L763.5,120.87 L764.5,120.96 L765.5,121.05 L766.5,121.14 L767.5,121.24 L768.5,121.34 L769.5,121.43 L770.5,121.53 L771.5,121.64 L772.5,121.74 L773.5,121.85 L774.5,121.96 L775.5,122.07 L776.5,122.18 L777.5,122.29 L778.5,122.41 L779.5,122.52 L780.5,122.64 L781.5,122.76 L782.5,122.88 L783.5,123.00 L784.5,123.12 L785.5,123.24 L786.5,123.37 L787.5,123.49 L788.5,123.62 L789.5,123.75 L790.5,123.87 L791.5,124.00 L792.5,124.13 L793.5,124.26 L794.5,124.39 L795.5,124.53 L796.5,124.66 L797.5,124.79 L798.5,124.93 L799.5,125.06 L800.5,125.20 L801.5,125.34 L802.5,125.48 L803.5,125.62 L804.5,125.76 L805.5,125.90 L806.5,126.04 L807.5,126.18 L808.5,126.33 L809.5,126.48 L810.5,126.62 L811.5,126.77 L812.5,126.92 L813.5,127.07 L814.5,127.23 L815.5,127.38 L816.5,127.54 L817.5,127.69 L818.5,127.85 L819.5,128.01 L820.5,128.17 L821.5,128.34 L822.5,128.50 L823.5,128.67 L824.5,128.83 L825.5,129.00 L826.5,129.17 L827.5,129.35 L828.5,129.52 L829.5,129.70 L830.5,129.87 L831.5,130.05 L832.5,130.23 L833.5,130.42 L834.5,130.60 L835.5,130.79 L836.5,130.98 L837.5,131.17 L838.5,131.36 L839.5,131.55 L840.5,131.75 L841.5,131.95 L842.5,132.15 L843.5,132.35 L844.5,132.55 L845.5,132.76 L846.5,132.97 L847.5,133.18 L848.5,133.39 L849.5,133.60 L850.5,133.82 L851.5,134.04 L852.5,134.26 L853.5,134.48 L854.5,134.71 L855.5,134.94 L856.5,135.17 L857.5,135.40 L858.5,135.64 L859.5,135.88 L860.5,136.12 L861.5,136.36 L862.5,136.61 L863.5,136.85 L864.5,137.10 L865.5,137.36 L866.5,137.61 L867.5,137.87 L868.5,138.13 L869.5,138.40 L870.5,138.67 L871.5,138.93 L872.5,139.21 L873.5,139.48 L874.5,139.76 L875.5,140.04 L876.5,140.33 L877.5,140.61 L878.5,140.90 L879.5,141.20 L880.5,141.49 L881.5,141.79 L882.5,142.10 L883.5,142.40 L884.5,142.71 L885.5,143.02 L886.5,143.34 L887.5,143.66 L888.5,143.98 L889.5,144.30 L890.5,144.63 L891.5,144.96 L892.5,145.29 L893.5,145.62 L894.5,145.95 L895.5,146.29 L896.5,146.63 L897.5,146.97 L898.5,147.31 L899.5,147.65 L900.5,147.99 L901.5,148.33 L902.5,148.67 L903.5,149.02 L904.5,149.36 L905.5,149.70 L906.5,150.05 L907.5,150.39 L908.5,150.73 L909.5,151.08 L910.5,151.42 L911.5,151.76 L912.5,152.10 L913.5,152.44 L914.5,152.77 L915.5,153.11 L916.5,153.44 L917.5,153.78 L918.5,154.11 L919.5,154.43 L920.5,154.76 L921.5,155.09 L922.5,155.41 L923.5,155.73 L924.5,156.05 L925.5,156.37 L926.5,156.69 L927.5,157.00 L928.5,157.32 L929.5,157.63 L930.5,157.94 L931.5,158.25 L932.5,158.56 L933.5,158.87 L934.5,159.18 L935.5,159.48 L936.5,159.79 L937.5,160.09 L938.5,160.39 L939.5,160.70 L940.5,161.00 L941.5,161.30 L942.5,161.59 L943.5,161.89 L944.5,162.19 L945.5,162.49 L946.5,162.78 L947.5,163.08 L948.5,163.37 L949.5,163.66 L950.5,163.96 L951.5,164.25 L952.5,164.54 L953.5,164.84 L954.5,165.13 L955.5,165.42 L956.5,165.71 L957.5,166.00 L958.5,166.29 L959.5,166.58 L960.5,166.87 L961.5,167.16 L962.5,167.45 L963.5,167.74 L964.5,168.03 L965.5,168.32 L966.5,168.61 L967.5,168.90 L968.5,169.19 L969.5,169.48 L970.5,169.77 L971.5,170.06 L972.5,170.35 L973.5,170.64 L974.5,170.94 L975.5,171.23 L976.5,171.52 L977.5,171.81 L978.5,172.10 L979.5,172.39 L980.5,172.68 L981.5,172.97 L982.5,173.26 L983.5,173.55 L984.5,173.83 L985.5,174.11 L986.5,174.39 L987.5,174.67 L988.5,174.95 L989.5,175.22 L990.5,175.49 L991.5,175.76 L992.5,176.02 L993.5,176.28 L994.5,176.54 L995.5,176.79 L996.5,177.04 L997.5,177.28 L998.5,177.52 L999.5,177.76 L1000.5,177.99 L1001.5,178.21 L1002.5,178.43 L1003.5,178.65 L1004.5,178.86 L1005.5,179.07 L1006.5,179.27 L1007.5,179.48 L1008.5,179.67 L1009.5,179.87 L1010.5,180.06 L1011.5,180.25 L1012.5,180.44 L1013.5,180.63 L1014.5,180.81 L1015.5,181.00 L1016.5,181.18 L1017.5,181.36 L1018.5,181.54 L1019.5,181.72 L1020.5,181.90 L1021.5,182.08 L1022.5,182.26 L1023.5,182.44 L1024.5,182.63 L1025.5,182.81 L1026.5,183.00 L1027.5,183.18 L1028.5,183.37 L1029.5,183.56 L1030.5,183.76 L1031.5,183.95 L1032.5,184.15 L1033.5,184.35 L1034.5,184.56 L1035.5,184.77 L1036.5,184.99 L1037.5,185.21 L1038.5,185.43 L1039.5,185.66 L1040.5,185.90 L1041.5,186.14 L1042.5,186.39 L1043.5,186.64 L1044.5,186.90 L1045.5,187.17 L1046.5,187.45 L1047.5,187.73 L1048.5,188.02 L1049.5,188.33 L1050.5,188.64 L1051.5,188.95 L1052.5,189.28 L1053.5,189.62 L1054.5,189.97 L1055.5,190.33 L1056.5,190.70 L1057.5,191.08 L1058.5,191.47 L1059.5,191.88 L1060.5,192.29 L1061.5,192.72 L1062.5,193.16 L1063.5,193.60 L1064.5,194.06 L1065.5,194.53 L1066.5,195.00 L1067.5,195.49 L1068.5,195.98 L1069.5,196.47 L1070.5,196.97 L1071.5,197.48 L1072.5,198.00 L1073.5,198.51 L1074.5,199.03 L1075.5,199.56 L1076.5,200.09 L1077.5,200.62 L1078.5,201.15 L1079.5,201.68 L1080.5,202.21 L1081.5,202.75 L1082.5,203.28 L1083.5,203.82 L1084.5,204.36 L1085.5,204.89 L1086.5,205.43 L1087.5,205.97 L1088.5,206.50 L1089.5,207.04 L1090.5,207.58 L1091.5,208.12 L1092.5,208.66 L1093.5,209.20 L1094.5,209.75 L1095.5,210.29 L1096.5,210.83 L1097.5,211.38 L1098.5,211.93 L1099.5,212.47 L1100.5,213.02 L1101.5,213.57 L1102.5,214.12 L1103.5,214.67 L1104.5,215.23 L1105.5,215.78 L1106.5,216.34 L1107.5,216.89 L1108.5,217.45 L1109.5,218.01 L1110.5,218.57 L1111.5,219.14 L1112.5,219.70 L1113.5,220.27 L1114.5,220.83 L1115.5,221.40 L1116.5,221.97 L1117.5,222.55 L1118.5,223.12 L1119.5,223.70 L1120.5,224.28 L1121.5,224.86 L1122.5,225.44 L1123.5,226.02 L1124.5,226.60 L1125.5,227.19 L1126.5,227.78 L1127.5,228.37 L1128.5,228.96 L1129.5,229.55 L1130.5,230.14 L1131.5,230.73 L1132.5,231.32 L1133.5,231.92 L1134.5,232.51 L1135.5,233.11 L1136.5,233.71 L1137.5,234.30 L1138.5,234.90 L1139.5,235.50 L1140.5,236.10 L1141.5,236.70 L1142.5,237.30 L1143.5,237.89 L1144.5,238.49 L1145.5,239.09 L1146.5,239.69 L1147.5,240.29 L1148.5,240.89 L1149.5,241.49 L1150.5,242.09 L1151.5,242.69 L1152.5,243.28 L1153.5,243.88 L1154.5,244.48 L1155.5,245.07 L1156.5,245.67 L1157.5,246.26 L1158.5,246.86 L1159.5,247.45 L1160.5,248.04 L1161.5,248.64 L1162.5,249.23 L1163.5,249.82 L1164.5,250.41 L1165.5,251.00 L1166.5,251.59 L1167.5,252.18 L1168.5,252.77 L1169.5,253.36 L1170.5,253.95 L1171.5,254.54 L1172.5,255.13 L1173.5,255.72 L1174.5,256.30 L1175.5,256.89 L1176.5,257.48 L1177.5,258.07 L1178.5,258.65 L1179.5,259.24 L1180.5,259.83 L1181.5,260.41 L1182.5,261.00 L1183.5,261.58 L1184.5,262.17 L1185.5,262.76 L1186.5,263.34 L1187.5,263.93 L1188.5,264.51 L1189.5,265.10 L1190.5,265.68 L1191.5,266.27 L1192.5,266.86 L1193.5,267.44 L1194.5,268.03 L1195.5,268.61 L1196.5,269.20 L1197.5,269.79 L1198.5,270.37 L1199.5,270.96 L1200.5,271.55 L1201.5,272.14 L1202.5,272.72 L1203.5,273.31 L1204.5,273.90 L1205.5,274.49 L1206.5,275.08 L1207.5,275.66 L1208.5,276.25 L1209.5,276.84 L1210.5,277.43 L1211.5,278.02 L1212.5,278.61 L1213.5,279.20 L1214.5,279.80 L1215.5,280.39 L1216.5,280.98 L1217.5,281.57 L1218.5,282.17 L1219.5,282.76 L1220.5,283.36 L1221.5,283.95 L1222.5,284.55 L1223.5,285.14 L1224.5,285.74 L1225.5,286.34 L1226.3,286.82" fill="none" stroke="#ff00ff" stroke-width="3" stroke-linejoin="round" shape-rendering="crispEdges" clip-path="url(#pc)"/>
<path d="M58.5,118.36 L59.5,118.36 L60.5,118.36 L61.5,118.35 L62.5,118.35 L63.5,118.35 L64.5,118.35 L65.5,118.35 L66.5,118.34 L67.5,118.34 L68.5,118.34 L69.5,118.34 L70.5,118.34 L71.5,118.34 L72.5,118.33 L73.5,118.33 L74.5,118.33 L75.5,118.33 L76.5,118.33 L77.5,118.33 L78.5,118.33 L79.5,118.32 L80.5,118.32 L81.5,118.32 L82.5,118.32 L83.5,118.32 L84.5,118.32 L85.5,118.32 L86.5,118.32 L87.5,118.31 L88.5,118.31 L89.5,118.31 L90.5,118.31 L91.5,118.31 L92.5,118.31 L93.5,118.31 L94.5,118.31 L95.5,118.31 L96.5,118.31 L97.5,118.30 L98.5,118.30 L99.5,118.30 L100.5,118.30 L101.5,118.30 L102.5,118.30 L103.5,118.30 L104.5,118.30 L105.5,118.30 L106.5,118.30 L107.5,118.30 L108.5,118.30 L109.5,118.30 L110.5,118.29 L111.5,118.29 L112.5,118.29 L113.5,118.29 L114.5,118.29 L115.5,118.29 L116.5,118.29 L117.5,118.29 L118.5,118.29 L119.5,118.29 L120.5,118.29 L121.5,118.29 L122.5,118.29 L123.5,118.29 L124.5,118.29 L125.5,118.29 L126.5,118.29 L127.5,118.29 L128.5,118.29 L129.5,118.29 L130.5,118.29 L131.5,118.29 L132.5,118.29 L133.5,118.29 L134.5,118.29 L135.5,118.29 L136.5,118.29 L137.5,118.29 L138.5,118.29 L139.5,118.29 L140.5,118.29 L141.5,118.29 L142.5,118.29 L143.5,118.29 L144.5,118.29 L145.5,118.29 L146.5,118.29 L147.5,118.29 L148.5,118.29 L149.5,118.29 L150.5,118.29 L151.5,118.29 L152.5,118.29 L153.5,118.29 L154.5,118.29 L155.5,118.29 L156.5,118.29 L157.5,118.29 L158.5,118.29 L159.5,118.29 L160.5,118.29 L161.5,118.29 L162.5,118.29 L163.5,118.29 L164.5,118.29 L165.5,118.29 L166.5,118.29 L167.5,118.29 L168.5,118.29 L169.5,118.29 L170.5,118.29 L171.5,118.29 L172.5,118.29 L173.5,118.29 L174.5,118.29 L175.5,118.30 L176.5,118.30 L177.5,118.30 L178.5,118.30 L179.5,118.30 L180.5,118.30 L181.5,118.30 L182.5,118.30 L183.5,118.30 L184.5,118.30 L185.5,118.30 L186.5,118.30 L187.5,118.30 L188.5,118.30 L189.5,118.30 L190.5,118.30 L191.5,118.30 L192.5,118.31 L193.5,118.31 L194.5,118.31 L195.5,118.31 L196.5,118.31 L197.5,118.31 L198.5,118.31 L199.5,118.31 L200.5,118.31 L201.5,118.31 L202.5,118.31 L203.5,118.31 L204.5,118.31 L205.5,118.32 L206.5,118.32 L207.5,118.32 L208.5,118.32 L209.5,118.32 L210.5,118.32 L211.5,118.32 L212.5,118.32 L213.5,118.32 L214.5,118.32 L215.5,118.32 L216.5,118.33 L217.5,118.33 L218.5,118.33 L219.5,118.33 L220.5,118.33 L221.5,118.33 L222.5,118.33 L223.5,118.33 L224.5,118.33 L225.5,118.33 L226.5,118.33 L227.5,118.34 L228.5,118.34 L229.5,118.34 L230.5,118.34 L231.5,118.34 L232.5,118.34 L233.5,118.34 L234.5,118.34 L235.5,118.34 L236.5,118.34 L237.5,118.35 L238.5,118.35 L239.5,118.35 L240.5,118.35 L241.5,118.35 L242.5,118.35 L243.5,118.35 L244.5,118.35 L245.5,118.35 L246.5,118.35 L247.5,118.36 L248.5,118.36 L249.5,118.36 L250.5,118.36 L251.5,118.36 L252.5,118.36 L253.5,118.36 L254.5,118.36 L255.5,118.36 L256.5,118.37 L257.5,118.37 L258.5,118.37 L259.5,118.37 L260.5,118.37 L261.5,118.37 L262.5,118.37 L263.5,118.37 L264.5,118.37 L265.5,118.38 L266.5,118.38 L267.5,118.38 L268.5,118.38 L269.5,118.38 L270.5,118.38 L271.5,118.38 L272.5,118.38 L273.5,118.38 L274.5,118.38 L275.5,118.39 L276.5,118.39 L277.5,118.39 L278.5,118.39 L279.5,118.39 L280.5,118.39 L281.5,118.39 L282.5,118.39 L283.5,118.39 L284.5,118.40 L285.5,118.40 L286.5,118.40 L287.5,118.40 L288.5,118.40 L289.5,118.40 L290.5,118.40 L291.5,118.40 L292.5,118.40 L293.5,118.40 L294.5,118.41 L295.5,118.41 L296.5,118.41 L297.5,118.41 L298.5,118.41 L299.5,118.41 L300.5,118.41 L301.5,118.41 L302.5,118.41 L303.5,118.41 L304.5,118.42 L305.5,118.42 L306.5,118.42 L307.5,118.42 L308.5,118.42 L309.5,118.42 L310.5,118.42 L311.5,118.42 L312.5,118.42 L313.5,118.42 L314.5,118.42 L315.5,118.43 L316.5,118.43 L317.5,118.43 L318.5,118.43 L319.5,118.43 L320.5,118.43 L321.5,118.43 L322.5,118.43 L323.5,118.43 L324.5,118.43 L325.5,118.43 L326.5,118.43 L327.5,118.44 L328.5,118.44 L329.5,118.44 L330.5,118.44 L331.5,118.44 L332.5,118.44 L333.5,118.44 L334.5,118.44 L335.5,118.44 L336.5,118.44 L337.5,118.44 L338.5,118.44 L339.5,118.44 L340.5,118.45 L341.5,118.45 L342.5,118.45 L343.5,118.45 L344.5,118.45 L345.5,118.45 L346.5,118.45 L347.5,118.45 L348.5,118.45 L349.5,118.45 L350.5,118.45 L351.5,118.45 L352.5,118.45 L353.5,118.45 L354.5,118.45 L355.5,118.45 L356.5,118.45 L357.5,118.45 L358.5,118.46 L359.5,118.46 L360.5,118.46 L361.5,118.46 L362.5,118.46 L363.5,118.46 L364.5,118.46 L365.5,118.46 L366.5,118.46 L367.5,118.46 L368.5,118.46 L369.5,118.46 L370.5,118.46 L371.5,118.46 L372.5,118.46 L373.5,118.46 L374.5,118.46 L375.5,118.46 L376.5,118.46 L377.5,118.46 L378.5,118.46 L379.5,118.46 L380.5,118.46 L381.5,118.46 L382.5,118.46 L383.5,118.46 L384.5,118.46 L385.5,118.46 L386.5,118.46 L387.5,118.46 L388.5,118.46 L389.5,118.46 L390.5,118.46 L391.5,118.46 L392.5,118.46 L393.5,118.46 L394.5,118.46 L395.5,118.46 L396.5,118.46 L397.5,118.46 L398.5,118.46 L399.5,118.46 L400.5,118.46 L401.5,118.46 L402.5,118.46 L403.5,118.46 L404.5,118.46 L405.5,118.46 L406.5,118.46 L407.5,118.46 L408.5,118.46 L409.5,118.46 L410.5,118.46 L411.5,118.46 L412.5,118.46 L413.5,118.46 L414.5,118.45 L415.5,118.45 L416.5,118.45 L417.5,118.45 L418.5,118.45 L419.5,118.45 L420.5,118.45 L421.5,118.45 L422.5,118.45 L423.5,118.45 L424.5,118.45 L425.5,118.45 L426.5,118.45 L427.5,118.45 L428.5,118.45 L429.5,118.45 L430.5,118.44 L431.5,118.44 L432.5,118.44 L433.5,118.44 L434.5,118.44 L435.5,118.44 L436.5,118.44 L437.5,118.44 L438.5,118.44 L439.5,118.44 L440.5,118.44 L441.5,118.44 L442.5,118.43 L443.5,118.43 L444.5,118.43 L445.5,118.43 L446.5,118.43 L447.5,118.43 L448.5,118.43 L449.5,118.43 L450.5,118.43 L451.5,118.43 L452.5,118.42 L453.5,118.42 L454.5,118.42 L455.5,118.42 L456.5,118.42 L457.5,118.42 L458.5,118.42 L459.5,118.42 L460.5,118.42 L461.5,118.42 L462.5,118.41 L463.5,118.41 L464.5,118.41 L465.5,118.41 L466.5,118.41 L467.5,118.41 L468.5,118.41 L469.5,118.41 L470.5,118.41 L471.5,118.41 L472.5,118.40 L473.5,118.40 L474.5,118.40 L475.5,118.40 L476.5,118.40 L477.5,118.40 L478.5,118.40 L479.5,118.40 L480.5,118.40 L481.5,118.40 L482.5,118.39 L483.5,118.39 L484.5,118.39 L485.5,118.39 L486.5,118.39 L487.5,118.39 L488.5,118.39 L489.5,118.39 L490.5,118.39 L491.5,118.39 L492.5,118.38 L493.5,118.38 L494.5,118.38 L495.5,118.38 L496.5,118.38 L497.5,118.38 L498.5,118.38 L499.5,118.38 L500.5,118.38 L501.5,118.38 L502.5,118.37 L503.5,118.37 L504.5,118.37 L505.5,118.37 L506.5,118.37 L507.5,118.37 L508.5,118.37 L509.5,118.37 L510.5,118.37 L511.5,118.37 L512.5,118.37 L513.5,118.37 L514.5,118.37 L515.5,118.36 L516.5,118.36 L517.5,118.36 L518.5,118.36 L519.5,118.36 L520.5,118.36 L521.5,118.36 L522.5,118.36 L523.5,118.36 L524.5,118.36 L525.5,118.36 L526.5,118.36 L527.5,118.36 L528.5,118.36 L529.5,118.36 L530.5,118.36 L531.5,118.35 L532.5,118.35 L533.5,118.35 L534.5,118.35 L535.5,118.35 L536.5,118.35 L537.5,118.35 L538.5,118.35 L539.5,118.35 L540.5,118.35 L541.5,118.35 L542.5,118.35 L543.5,118.35 L544.5,118.35 L545.5,118.35 L546.5,118.35 L547.5,118.35 L548.5,118.35 L549.5,118.35 L550.5,118.35 L551.5,118.35 L552.5,118.35 L553.5,118.35 L554.5,118.35 L555.5,118.35 L556.5,118.35 L557.5,118.35 L558.5,118.35 L559.5,118.35 L560.5,118.35 L561.5,118.35 L562.5,118.35 L563.5,118.35 L564.5,118.35 L565.5,118.35 L566.5,118.35 L567.5,118.35 L568.5,118.35 L569.5,118.35 L570.5,118.36 L571.5,118.36 L572.5,118.36 L573.5,118.36 L574.5,118.36 L575.5,118.36 L576.5,118.36 L577.5,118.36 L578.5,118.36 L579.5,118.36 L580.5,118.36 L581.5,118.36 L582.5,118.36 L583.5,118.37 L584.5,118.37 L585.5,118.37 L586.5,118.37 L587.5,118.37 L588.5,118.37 L589.5,118.37 L590.5,118.37 L591.5,118.37 L592.5,118.38 L593.5,118.38 L594.5,118.38 L595.5,118.38 L596.5,118.38 L597.5,118.38 L598.5,118.38 L599.5,118.39 L600.5,118.39 L601.5,118.39 L602.5,118.39 L603.5,118.39 L604.5,118.40 L605.5,118.40 L606.5,118.40 L607.5,118.40 L608.5,118.40 L609.5,118.40 L610.5,118.41 L611.5,118.41 L612.5,118.41 L613.5,118.41 L614.5,118.42 L615.5,118.42 L616.5,118.42 L617.5,118.42 L618.5,118.43 L619.5,118.43 L620.5,118.43 L621.5,118.43 L622.5,118.44 L623.5,118.44 L624.5,118.44 L625.5,118.44 L626.5,118.45 L627.5,118.45 L628.5,118.45 L629.5,118.46 L630.5,118.46 L631.5,118.46 L632.5,118.46 L633.5,118.47 L634.5,118.47 L635.5,118.47 L636.5,118.48 L637.5,118.48 L638.5,118.48 L639.5,118.49 L640.5,118.49 L641.5,118.50 L642.5,118.50 L643.5,118.50 L644.5,118.51 L645.5,118.51 L646.5,118.51 L647.5,118.52 L648.5,118.52 L649.5,118.53 L650.5,118.53 L651.5,118.53 L652.5,118.54 L653.5,118.54 L654.5,118.55 L655.5,118.55 L656.5,118.56 L657.5,118.56 L658.5,118.57 L659.5,118.57 L660.5,118.58 L661.5,118.58 L662.5,118.59 L663.5,118.59 L664.5,118.60 L665.5,118.60 L666.5,118.61 L667.5,118.61 L668.5,118.62 L669.5,118.62 L670.5,118.63 L671.5,118.63 L672.5,118.64 L673.5,118.64 L674.5,118.65 L675.5,118.65 L676.5,118.66 L677.5,118.67 L678.5,118.67 L679.5,118.68 L680.5,118.68 L681.5,118.69 L682.5,118.70 L683.5,118.70 L684.5,118.71 L685.5,118.71 L686.5,118.72 L687.5,118.73 L688.5,118.73 L689.5,118.74 L690.5,118.75 L691.5,118.75 L692.5,118.76 L693.5,118.77 L694.5,118.78 L695.5,118.78 L696.5,118.79 L697.5,118.80 L698.5,118.80 L699.5,118.81 L700.5,118.82 L701.5,118.83 L702.5,118.83 L703.5,118.84 L704.5,118.85 L705.5,118.86 L706.5,118.87 L707.5,118.87 L708.5,118.88 L709.5,118.89 L710.5,118.90 L711.5,118.91 L712.5,118.91 L713.5,118.92 L714.5,118.93 L715.5,118.94 L716.5,118.95 L717.5,118.96 L718.5,118.97 L719.5,118.98 L720.5,118.98 L721.5,118.99 L722.5,119.00 L723.5,119.01 L724.5,119.02 L725.5,119.03 L726.5,119.04 L727.5,119.05 L728.5,119.06 L729.5,119.07 L730.5,119.08 L731.5,119.09 L732.5,119.10 L733.5,119.11 L734.5,119.12 L735.5,119.14 L736.5,119.15 L737.5,119.17 L738.5,119.19 L739.5,119.21 L740.5,119.23 L741.5,119.26 L742.5,119.29 L743.5,119.32 L744.5,119.35 L745.5,119.39 L746.5,119.44 L747.5,119.49 L748.5,119.54 L749.5,119.60 L750.5,119.66 L751.5,119.73 L752.5,119.80 L753.5,119.88 L754.5,119.96 L755.5,120.06 L756.5,120.15 L757.5,120.26 L758.5,120.37 L759.5,120.49 L760.5,120.62 L761.5,120.75 L762.5,120.89 L763.5,121.04 L764.5,121.19 L765.5,121.34 L766.5,121.50 L767.5,121.66 L768.5,121.82 L769.5,121.98 L770.5,122.14 L771.5,122.29 L772.5,122.45 L773.5,122.60 L774.5,122.74 L775.5,122.88 L776.5,123.01 L777.5,123.14 L778.5,123.26 L779.5,123.38 L780.5,123.49 L781.5,123.59 L782.5,123.70 L783.5,123.80 L784.5,123.89 L785.5,123.99 L786.5,124.08 L787.5,124.17 L788.5,124.26 L789.5,124.35 L790.5,124.44 L791.5,124.52 L792.5,124.61 L793.5,124.70 L794.5,124.79 L795.5,124.88 L796.5,124.97 L797.5,125.07 L798.5,125.17 L799.5,125.27 L800.5,125.37 L801.5,125.48 L802.5,125.60 L803.5,125.72 L804.5,125.84 L805.5,125.97 L806.5,126.11 L807.5,126.25 L808.5,126.39 L809.5,126.55 L810.5,126.70 L811.5,126.87 L812.5,127.03 L813.5,127.20 L814.5,127.38 L815.5,127.56 L816.5,127.74 L817.5,127.93 L818.5,128.11 L819.5,128.31 L820.5,128.50 L821.5,128.70 L822.5,128.90 L823.5,129.10 L824.5,129.30 L825.5,129.50 L826.5,129.71 L827.5,129.91 L828.5,130.12 L829.5,130.32 L830.5,130.53 L831.5,130.74 L832.5,130.94 L833.5,131.16 L834.5,131.38 L835.5,131.62 L836.5,131.88 L837.5,132.17 L838.5,132.48 L839.5,132.84 L840.5,133.23 L841.5,133.67 L842.5,134.15 L843.5,134.70 L844.5,135.29 L845.5,135.92 L846.5,136.58 L847.5,137.27 L848.5,137.98 L849.5,138.71 L850.5,139.43 L851.5,140.16 L852.5,140.88 L853.5,141.58 L854.5,142.26 L855.5,142.91 L856.5,143.53 L857.5,144.10 L858.5,144.65 L859.5,145.16 L860.5,145.64 L861.5,146.09 L862.5,146.51 L863.5,146.91 L864.5,147.28 L865.5,147.63 L866.5,147.95 L867.5,148.26 L868.5,148.55 L869.5,148.82 L870.5,149.07 L871.5,149.31 L872.5,149.54 L873.5,149.76 L874.5,149.96 L875.5,150.16 L876.5,150.36 L877.5,150.55 L878.5,150.73 L879.5,150.91 L880.5,151.10 L881.5,151.28 L882.5,151.46 L883.5,151.65 L884.5,151.84 L885.5,152.02 L886.5,152.21 L887.5,152.40 L888.5,152.59 L889.5,152.78 L890.5,152.97 L891.5,153.17 L892.5,153.36 L893.5,153.56 L894.5,153.75 L895.5,153.95 L896.5,154.16 L897.5,154.36 L898.5,154.56 L899.5,154.77 L900.5,154.98 L901.5,155.19 L902.5,155.40 L903.5,155.61 L904.5,155.83 L905.5,156.05 L906.5,156.27 L907.5,156.49 L908.5,156.71 L909.5,156.94 L910.5,157.17 L911.5,157.40 L912.5,157.63 L913.5,157.87 L914.5,158.11 L915.5,158.34 L916.5,158.59 L917.5,158.83 L918.5,159.07 L919.5,159.32 L920.5,159.57 L921.5,159.81 L922.5,160.07 L923.5,160.32 L924.5,160.57 L925.5,160.83 L926.5,161.08 L927.5,161.34 L928.5,161.60 L929.5,161.86 L930.5,162.12 L931.5,162.38 L932.5,162.64 L933.5,162.91 L934.5,163.17 L935.5,163.44 L936.5,163.71 L937.5,163.97 L938.5,164.24 L939.5,164.51 L940.5,164.78 L941.5,165.05 L942.5,165.32 L943.5,165.59 L944.5,165.86 L945.5,166.14 L946.5,166.41 L947.5,166.68 L948.5,166.96 L949.5,167.23 L950.5,167.50 L951.5,167.78 L952.5,168.05 L953.5,168.32 L954.5,168.60 L955.5,168.87 L956.5,169.14 L957.5,169.42 L958.5,169.69 L959.5,169.96 L960.5,170.23 L961.5,170.50 L962.5,170.78 L963.5,171.05 L964.5,171.32 L965.5,171.59 L966.5,171.86 L967.5,172.12 L968.5,172.39 L969.5,172.66 L970.5,172.93 L971.5,173.19 L972.5,173.46 L973.5,173.72 L974.5,173.98 L975.5,174.24 L976.5,174.50 L977.5,174.76 L978.5,175.02 L979.5,175.28 L980.5,175.53 L981.5,175.79 L982.5,176.04 L983.5,176.29 L984.5,176.55 L985.5,176.79 L986.5,177.04 L987.5,177.29 L988.5,177.53 L989.5,177.77 L990.5,178.02 L991.5,178.26 L992.5,178.49 L993.5,178.73 L994.5,178.96 L995.5,179.19 L996.5,179.42 L997.5,179.65 L998.5,179.88 L999.5,180.10 L1000.5,180.32 L1001.5,180.54 L1002.5,180.76 L1003.5,180.98 L1004.5,181.19 L1005.5,181.40 L1006.5,181.61 L1007.5,181.81 L1008.5,182.02 L1009.5,182.22 L1010.5,182.42 L1011.5,182.61 L1012.5,182.80 L1013.5,182.99 L1014.5,183.18 L1015.5,183.37 L1016.5,183.55 L1017.5,183.73 L1018.5,183.90 L1019.5,184.08 L1020.5,184.25 L1021.5,184.41 L1022.5,184.58 L1023.5,184.74 L1024.5,184.89 L1025.5,185.05 L1026.5,185.20 L1027.5,185.35 L1028.5,185.49 L1029.5,185.63 L1030.5,185.77 L1031.5,185.90 L1032.5,186.04 L1033.5,186.17 L1034.5,186.31 L1035.5,186.44 L1036.5,186.58 L1037.5,186.71 L1038.5,186.86 L1039.5,187.00 L1040.5,187.15 L1041.5,187.31 L1042.5,187.47 L1043.5,187.64 L1044.5,187.82 L1045.5,188.01 L1046.5,188.20 L1047.5,188.41 L1048.5,188.63 L1049.5,188.86 L1050.5,189.10 L1051.5,189.36 L1052.5,189.63 L1053.5,189.91 L1054.5,190.21 L1055.5,190.53 L1056.5,190.87 L1057.5,191.22 L1058.5,191.60 L1059.5,191.99 L1060.5,192.40 L1061.5,192.84 L1062.5,193.29 L1063.5,193.75 L1064.5,194.23 L1065.5,194.73 L1066.5,195.24 L1067.5,195.76 L1068.5,196.29 L1069.5,196.83 L1070.5,197.38 L1071.5,197.93 L1072.5,198.49 L1073.5,199.05 L1074.5,199.62 L1075.5,200.18 L1076.5,200.74 L1077.5,201.29 L1078.5,201.84 L1079.5,202.39 L1080.5,202.92 L1081.5,203.44 L1082.5,203.95 L1083.5,204.45 L1084.5,204.95 L1085.5,205.44 L1086.5,205.92 L1087.5,206.40 L1088.5,206.87 L1089.5,207.35 L1090.5,207.82 L1091.5,208.29 L1092.5,208.77 L1093.5,209.25 L1094.5,209.73 L1095.5,210.22 L1096.5,210.72 L1097.5,211.23 L1098.5,211.74 L1099.5,212.27 L1100.5,212.80 L1101.5,213.35 L1102.5,213.91 L1103.5,214.48 L1104.5,215.06 L1105.5,215.65 L1106.5,216.25 L1107.5,216.85 L1108.5,217.47 L1109.5,218.08 L1110.5,218.71 L1111.5,219.33 L1112.5,219.96 L1113.5,220.60 L1114.5,221.23 L1115.5,221.87 L1116.5,222.51 L1117.5,223.14 L1118.5,223.78 L1119.5,224.41 L1120.5,225.04 L1121.5,225.67 L1122.5,226.29 L1123.5,226.92 L1124.5,227.54 L1125.5,228.16 L1126.5,228.77 L1127.5,229.38 L1128.5,229.99 L1129.5,230.60 L1130.5,231.21 L1131.5,231.81 L1132.5,232.42 L1133.5,233.02 L1134.5,233.62 L1135.5,234.21 L1136.5,234.81 L1137.5,235.40 L1138.5,236.00 L1139.5,236.59 L1140.5,237.18 L1141.5,237.77 L1142.5,238.35 L1143.5,238.94 L1144.5,239.53 L1145.5,240.11 L1146.5,240.69 L1147.5,241.28 L1148.5,241.86 L1149.5,242.44 L1150.5,243.02 L1151.5,243.60 L1152.5,244.18 L1153.5,244.76 L1154.5,245.34 L1155.5,245.92 L1156.5,246.50 L1157.5,247.08 L1158.5,247.66 L1159.5,248.24 L1160.5,248.82 L1161.5,249.40 L1162.5,249.98 L1163.5,250.56 L1164.5,251.14 L1165.5,251.72 L1166.5,252.30 L1167.5,252.88 L1168.5,253.46 L1169.5,254.04 L1170.5,254.62 L1171.5,255.20 L1172.5,255.78 L1173.5,256.36 L1174.5,256.94 L1175.5,257.52 L1176.5,258.10 L1177.5,258.68 L1178.5,259.26 L1179.5,259.84 L1180.5,260.42 L1181.5,261.00 L1182.5,261.58 L1183.5,262.16 L1184.5,262.74 L1185.5,263.32 L1186.5,263.90 L1187.5,264.48 L1188.5,265.06 L1189.5,265.64 L1190.5,266.22 L1191.5,266.80 L1192.5,267.38 L1193.5,267.96 L1194.5,268.54 L1195.5,269.12 L1196.5,269.70 L1197.5,270.28 L1198.5,270.86 L1199.5,271.44 L1200.5,272.02 L1201.5,272.60 L1202.5,273.18 L1203.5,273.76 L1204.5,274.34 L1205.5,274.92 L1206.5,275.50 L1207.5,276.08 L1208.5,276.66 L1209.5,277.24 L1210.5,277.83 L1211.5,278.41 L1212.5,278.99 L1213.5,279.57 L1214.5,280.15 L1215.5,280.73 L1216.5,281.31 L1217.5,281.89 L1218.5,282.47 L1219.5,283.05 L1220.5,283.63 L1221.5,284.21 L1222.5,284.79 L1223.5,285.38 L1224.5,285.96 L1225.5,286.54 L1226.3,287.00" fill="none" stroke="#400080" stroke-width="3" stroke-linejoin="round" shape-rendering="crispEdges" clip-path="url(#pc)"/>
<path d="M442.0,169.52 L443.0,169.49 L444.0,169.47 L445.0,169.45 L446.0,169.42 L447.0,169.40 L448.0,169.38 L449.0,169.36 L450.0,169.35 L451.0,169.33 L452.0,169.31 L453.0,169.30 L454.0,169.28 L455.0,169.27 L456.0,169.26 L457.0,169.25 L458.0,169.24 L459.0,169.23 L460.0,169.22 L461.0,169.22 L462.0,169.21 L463.0,169.20 L464.0,169.20 L465.0,169.20 L466.0,169.20 L467.0,169.20 L468.0,169.20 L469.0,169.20 L470.0,169.20 L471.0,169.20 L472.0,169.21 L473.0,169.21 L474.0,169.22 L475.0,169.22 L476.0,169.23 L477.0,169.24 L478.0,169.25 L479.0,169.26 L480.0,169.27 L481.0,169.28 L482.0,169.29 L483.0,169.31 L484.0,169.32 L485.0,169.34 L486.0,169.35 L487.0,169.37 L488.0,169.39 L489.0,169.41 L490.0,169.43 L491.0,169.45 L492.0,169.47 L493.0,169.49 L494.0,169.51 L495.0,169.54 L496.0,169.56 L497.0,169.59 L498.0,169.61 L499.0,169.64 L500.0,169.67 L501.0,169.70 L502.0,169.73 L503.0,169.76 L504.0,169.79 L505.0,169.82 L506.0,169.85 L507.0,169.88 L508.0,169.92 L509.0,169.95 L510.0,169.98 L511.0,170.02 L512.0,170.06 L513.0,170.09 L514.0,170.13 L515.0,170.17 L516.0,170.21 L517.0,170.25 L518.0,170.29 L519.0,170.33 L520.0,170.37 L521.0,170.41 L522.0,170.46 L523.0,170.50 L524.0,170.54 L525.0,170.59 L526.0,170.63 L527.0,170.68 L528.0,170.73 L529.0,170.77 L530.0,170.82 L531.0,170.87 L532.0,170.92 L533.0,170.97 L534.0,171.02 L535.0,171.07 L536.0,171.12 L537.0,171.17 L538.0,171.22 L539.0,171.28 L540.0,171.33 L541.0,171.38 L542.0,171.44 L543.0,171.49 L544.0,171.55 L545.0,171.60 L546.0,171.66 L547.0,171.72 L548.0,171.77 L549.0,171.83 L550.0,171.89 L551.0,171.95 L552.0,172.01 L553.0,172.07 L554.0,172.13 L555.0,172.19 L556.0,172.25 L557.0,172.31 L558.0,172.37 L559.0,172.43 L560.0,172.50 L561.0,172.56 L562.0,172.62 L563.0,172.69 L564.0,172.75 L565.0,172.82 L566.0,172.88 L567.0,172.95 L568.0,173.01 L569.0,173.08 L570.0,173.15 L571.0,173.22 L572.0,173.29 L573.0,173.36 L574.0,173.43 L575.0,173.50 L576.0,173.57 L577.0,173.64 L578.0,173.72 L579.0,173.79 L580.0,173.87 L581.0,173.94 L582.0,174.02 L583.0,174.10 L584.0,174.18 L585.0,174.26 L586.0,174.34 L587.0,174.42 L588.0,174.50 L589.0,174.58 L590.0,174.67 L591.0,174.75 L592.0,174.84 L593.0,174.93 L594.0,175.02 L595.0,175.11 L596.0,175.20 L597.0,175.29 L598.0,175.39 L599.0,175.48 L600.0,175.58 L601.0,175.68 L602.0,175.78 L603.0,175.88 L604.0,175.98 L605.0,176.08 L606.0,176.19 L607.0,176.29 L608.0,176.40 L609.0,176.51 L610.0,176.62 L611.0,176.73 L612.0,176.85 L613.0,176.96 L614.0,177.08 L615.0,177.20 L616.0,177.32 L617.0,177.44 L618.0,177.57 L619.0,177.69 L620.0,177.82 L621.0,177.95 L622.0,178.08 L623.0,178.21 L624.0,178.34 L625.0,178.48 L626.0,178.62 L627.0,178.76 L628.0,178.90 L629.0,179.04 L630.0,179.19 L631.0,179.34 L632.0,179.49 L633.0,179.64 L634.0,179.79 L635.0,179.95 L636.0,180.11 L637.0,180.27 L638.0,180.43 L639.0,180.59 L640.0,180.76 L641.0,180.93 L642.0,181.10 L643.0,181.27 L644.0,181.45 L645.0,181.62 L646.0,181.80 L647.0,181.99 L648.0,182.17 L649.0,182.36 L650.0,182.55 L651.0,182.74 L652.0,182.93 L653.0,183.13 L654.0,183.33 L655.0,183.54 L656.0,183.74 L657.0,183.95 L658.0,184.17 L659.0,184.39 L660.0,184.61 L661.0,184.84 L662.0,185.07 L663.0,185.30 L664.0,185.54 L665.0,185.79 L666.0,186.03 L667.0,186.29 L668.0,186.55 L669.0,186.81 L670.0,187.08 L671.0,187.36 L672.0,187.64 L673.0,187.93 L674.0,188.23 L675.0,188.53 L676.0,188.83 L677.0,189.15 L678.0,189.47 L679.0,189.79 L680.0,190.13 L681.0,190.47 L682.0,190.82 L683.0,191.18 L684.0,191.54 L685.0,191.91 L686.0,192.29 L687.0,192.68 L688.0,193.08 L689.0,193.48 L690.0,193.90 L691.0,194.32 L692.0,194.75 L693.0,195.19 L694.0,195.64 L695.0,196.10 L696.0,196.57 L697.0,197.05 L698.0,197.54 L699.0,198.04 L700.0,198.55 L701.0,199.07 L702.0,199.60 L703.0,200.14 L704.0,200.68 L705.0,201.24 L706.0,201.80 L707.0,202.37 L708.0,202.95 L709.0,203.53 L710.0,204.12 L711.0,204.71 L712.0,205.31 L713.0,205.91 L714.0,206.51 L715.0,207.11 L716.0,207.72 L717.0,208.33 L718.0,208.94 L719.0,209.55 L720.0,210.16 L721.0,210.76 L722.0,211.37 L723.0,211.97 L724.0,212.58 L725.0,213.17 L726.0,213.77 L727.0,214.36 L728.0,214.94 L729.0,215.52 L730.0,216.09 L731.0,216.66 L732.0,217.22 L733.0,217.77 L734.0,218.32 L735.0,218.85 L736.0,219.38 L737.0,219.91 L738.0,220.43 L739.0,220.95 L740.0,221.47 L741.0,221.99 L742.0,222.51 L743.0,223.04 L744.0,223.57 L745.0,224.11 L746.0,224.66 L747.0,225.22 L748.0,225.79 L749.0,226.37 L750.0,226.97 L751.0,227.58 L752.0,228.21 L753.0,228.86 L754.0,229.51 L755.0,230.19 L756.0,230.88 L757.0,231.58 L758.0,232.30 L759.0,233.03 L760.0,233.77 L761.0,234.53 L762.0,235.30 L763.0,236.09 L764.0,236.88 L765.0,237.69 L766.0,238.51 L767.0,239.35 L768.0,240.19 L769.0,241.05 L770.0,241.92 L771.0,242.80 L772.0,243.68 L773.0,244.58 L774.0,245.49 L775.0,246.41 L776.0,247.34 L777.0,248.28 L778.0,249.23 L779.0,250.19 L780.0,251.16 L781.0,252.13 L782.0,253.12 L783.0,254.11 L784.0,255.11 L785.0,256.11 L786.0,257.13 L787.0,258.15 L788.0,259.18 L789.0,260.21 L790.0,261.25 L791.0,262.30 L792.0,263.35 L793.0,264.41 L794.0,265.47 L795.0,266.54 L796.0,267.62 L797.0,268.69 L798.0,269.78 L799.0,270.86 L800.0,271.96 L801.0,273.05 L802.0,274.15 L803.0,275.25 L804.0,276.35 L805.0,277.46 L806.0,278.57 L807.0,279.68 L808.0,280.79 L809.0,281.91 L810.0,283.03 L811.0,284.14 L812.0,285.26 L813.0,286.38 L814.0,287.50 L815.0,288.62 L816.0,289.74 L817.0,290.86 L818.0,291.98 L819.0,293.10 L820.0,294.22 L821.0,295.33 L822.0,296.45 L823.0,297.56 L824.0,298.67 L825.0,299.78 L826.0,300.89 L827.0,301.99 L828.0,303.10 L829.0,304.19 L830.0,305.29 L831.0,306.38 L832.0,307.47 L833.0,308.55 L834.0,309.63 L835.0,310.70 L836.0,311.77 L837.0,312.83 L838.0,313.89 L839.0,314.95 L840.0,315.99 L841.0,317.04 L842.0,318.07 L843.0,319.10 L844.0,320.12 L845.0,321.14 L846.0,322.15 L847.0,323.16 L848.0,324.16 L849.0,325.15 L850.0,326.13 L851.0,327.11 L852.0,328.08 L853.0,329.05 L854.0,330.01 L855.0,330.96 L856.0,331.90 L857.0,332.83 L858.0,333.76 L859.0,334.68 L860.0,335.59 L861.0,336.50 L862.0,337.40 L863.0,338.29 L864.0,339.17 L865.0,340.04 L866.0,340.90 L867.0,341.76 L868.0,342.61 L869.0,343.45 L870.0,344.28 L871.0,345.10 L872.0,345.91 L873.0,346.71 L874.0,347.51 L875.0,348.29 L876.0,349.07 L877.0,349.83 L878.0,350.59 L879.0,351.34 L880.0,352.07 L881.0,352.80 L882.0,353.52 L883.0,354.23 L884.0,354.92 L885.0,355.61 L886.0,356.29 L887.0,356.95 L888.0,357.61 L889.0,358.26 L890.0,358.89 L891.0,359.51 L892.0,360.13 L893.0,360.73 L894.0,361.32 L895.0,361.90 L896.0,362.47 L897.0,363.03 L898.0,363.57 L899.0,364.11 L900.0,364.63 L901.0,365.14 L902.0,365.64 L903.0,366.12 L904.0,366.60 L905.0,367.06 L906.0,367.51 L907.0,367.95 L908.0,368.38 L909.0,368.79 L910.0,369.20 L911.0,369.59 L912.0,369.97 L913.0,370.34 L914.0,370.69 L915.0,371.04 L916.0,371.38 L917.0,371.70 L918.0,372.02 L919.0,372.32 L920.0,372.61 L921.0,372.90 L922.0,373.17 L923.0,373.43 L924.0,373.69 L925.0,373.93 L926.0,374.16 L927.0,374.39 L928.0,374.60 L929.0,374.81 L930.0,375.01 L931.0,375.19 L932.0,375.37 L933.0,375.54 L934.0,375.70 L935.0,375.86 L936.0,376.00 L937.0,376.14 L938.0,376.27 L939.0,376.39 L940.0,376.50 L941.0,376.61 L942.0,376.71 L943.0,376.80 L944.0,376.88 L945.0,376.96 L946.0,377.02 L947.0,377.09 L948.0,377.14 L949.0,377.19 L950.0,377.23 L951.0,377.27 L952.0,377.30 L953.0,377.32 L954.0,377.34 L955.0,377.35 L956.0,377.36 L957.0,377.36 L958.0,377.36 L959.0,377.35 L960.0,377.33 L961.0,377.31 L962.0,377.28 L963.0,377.25 L964.0,377.22 L965.0,377.18 L966.0,377.14 L967.0,377.09 L968.0,377.04 L969.0,376.98 L970.0,376.92 L971.0,376.86 L972.0,376.79 L973.0,376.72 L974.0,376.65 L975.0,376.57 L976.0,376.49 L977.0,376.41 L978.0,376.32 L979.0,376.23 L980.0,376.14 L981.0,376.04 L982.0,375.95 L983.0,375.85 L984.0,375.75 L985.0,375.65 L986.0,375.54 L987.0,375.44 L988.0,375.33 L989.0,375.22 L990.0,375.11 L991.0,375.00 L992.0,374.89 L993.0,374.78 L994.0,374.67 L995.0,374.56 L996.0,374.45 L997.0,374.35 L998.0,374.24 L999.0,374.15 L1000.0,374.06 L1001.0,373.97 L1002.0,373.89 L1003.0,373.81 L1004.0,373.75 L1005.0,373.69 L1006.0,373.64 L1007.0,373.60 L1008.0,373.56 L1009.0,373.54 L1010.0,373.53 L1011.0,373.53 L1012.0,373.55 L1013.0,373.58 L1014.0,373.62 L1015.0,373.67 L1016.0,373.74 L1017.0,373.83 L1018.0,373.93 L1019.0,374.05 L1020.0,374.19 L1021.0,374.35 L1022.0,374.52 L1023.0,374.71 L1024.0,374.93 L1025.0,375.16 L1026.0,375.42 L1027.0,375.70 L1028.0,376.00 L1029.0,376.33 L1030.0,376.67 L1031.0,377.05 L1032.0,377.44 L1033.0,377.85 L1034.0,378.27 L1035.0,378.71 L1036.0,379.15 L1037.0,379.60 L1038.0,380.06 L1039.0,380.51 L1040.0,380.96 L1041.0,381.41 L1042.0,381.86 L1043.0,382.33 L1044.0,382.81 L1045.0,383.33 L1046.0,383.89 L1047.0,384.49 L1048.0,385.16 L1049.0,385.89 L1050.0,386.69 L1051.0,387.58 L1052.0,388.57 L1053.0,389.66 L1054.0,390.85 L1055.0,392.13 L1056.0,393.51 L1057.0,394.97 L1058.0,396.52 L1059.0,398.14 L1060.0,399.84 L1061.0,401.60 L1062.0,403.44 L1063.0,405.35 L1064.0,407.35 L1065.0,409.43 L1066.0,411.61 L1067.0,413.88 L1068.0,416.27 L1069.0,418.76 L1070.0,421.37 L1071.0,424.09 L1072.0,426.95 L1073.0,429.93 L1074.0,433.06 L1075.0,436.32 L1076.0,439.74 L1077.0,443.31 L1078.0,447.03 L1079.0,450.87 L1080.0,454.80 L1081.0,458.76 L1082.0,462.73 L1083.0,466.65 L1084.0,470.49 L1085.0,474.21 L1086.0,477.76 L1087.0,481.14 L1088.0,484.41 L1089.0,487.67 L1090.0,491.01 L1090.3,492.04" fill="none" stroke="#008000" stroke-width="3" stroke-linejoin="round" shape-rendering="crispEdges" clip-path="url(#pc)"/>
<path d="M442.0,169.53 L443.0,169.50 L444.0,169.47 L445.0,169.45 L446.0,169.43 L447.0,169.40 L448.0,169.38 L449.0,169.36 L450.0,169.34 L451.0,169.33 L452.0,169.31 L453.0,169.29 L454.0,169.28 L455.0,169.27 L456.0,169.25 L457.0,169.24 L458.0,169.23 L459.0,169.22 L460.0,169.22 L461.0,169.21 L462.0,169.20 L463.0,169.20 L464.0,169.19 L465.0,169.19 L466.0,169.19 L467.0,169.19 L468.0,169.19 L469.0,169.19 L470.0,169.19 L471.0,169.19 L472.0,169.20 L473.0,169.20 L474.0,169.21 L475.0,169.21 L476.0,169.22 L477.0,169.23 L478.0,169.24 L479.0,169.25 L480.0,169.26 L481.0,169.27 L482.0,169.29 L483.0,169.30 L484.0,169.31 L485.0,169.33 L486.0,169.35 L487.0,169.36 L488.0,169.38 L489.0,169.40 L490.0,169.42 L491.0,169.44 L492.0,169.46 L493.0,169.49 L494.0,169.51 L495.0,169.53 L496.0,169.56 L497.0,169.58 L498.0,169.61 L499.0,169.64 L500.0,169.66 L501.0,169.69 L502.0,169.72 L503.0,169.75 L504.0,169.78 L505.0,169.82 L506.0,169.85 L507.0,169.88 L508.0,169.92 L509.0,169.95 L510.0,169.98 L511.0,170.02 L512.0,170.06 L513.0,170.09 L514.0,170.13 L515.0,170.17 L516.0,170.21 L517.0,170.25 L518.0,170.29 L519.0,170.33 L520.0,170.38 L521.0,170.42 L522.0,170.46 L523.0,170.50 L524.0,170.55 L525.0,170.59 L526.0,170.64 L527.0,170.69 L528.0,170.73 L529.0,170.78 L530.0,170.83 L531.0,170.88 L532.0,170.93 L533.0,170.98 L534.0,171.03 L535.0,171.08 L536.0,171.13 L537.0,171.18 L538.0,171.23 L539.0,171.29 L540.0,171.34 L541.0,171.39 L542.0,171.45 L543.0,171.50 L544.0,171.56 L545.0,171.61 L546.0,171.67 L547.0,171.73 L548.0,171.79 L549.0,171.84 L550.0,171.90 L551.0,171.96 L552.0,172.02 L553.0,172.08 L554.0,172.14 L555.0,172.20 L556.0,172.26 L557.0,172.32 L558.0,172.38 L559.0,172.44 L560.0,172.51 L561.0,172.57 L562.0,172.63 L563.0,172.70 L564.0,172.76 L565.0,172.82 L566.0,172.89 L567.0,172.96 L568.0,173.02 L569.0,173.09 L570.0,173.16 L571.0,173.22 L572.0,173.29 L573.0,173.36 L574.0,173.43 L575.0,173.50 L576.0,173.57 L577.0,173.65 L578.0,173.72 L579.0,173.79 L580.0,173.87 L581.0,173.94 L582.0,174.02 L583.0,174.09 L584.0,174.17 L585.0,174.25 L586.0,174.33 L587.0,174.41 L588.0,174.50 L589.0,174.58 L590.0,174.66 L591.0,174.75 L592.0,174.83 L593.0,174.92 L594.0,175.01 L595.0,175.10 L596.0,175.19 L597.0,175.28 L598.0,175.38 L599.0,175.47 L600.0,175.57 L601.0,175.66 L602.0,175.76 L603.0,175.86 L604.0,175.97 L605.0,176.07 L606.0,176.17 L607.0,176.28 L608.0,176.39 L609.0,176.49 L610.0,176.60 L611.0,176.72 L612.0,176.83 L613.0,176.95 L614.0,177.06 L615.0,177.18 L616.0,177.30 L617.0,177.42 L618.0,177.55 L619.0,177.67 L620.0,177.80 L621.0,177.93 L622.0,178.06 L623.0,178.19 L624.0,178.32 L625.0,178.46 L626.0,178.60 L627.0,178.74 L628.0,178.88 L629.0,179.02 L630.0,179.17 L631.0,179.32 L632.0,179.47 L633.0,179.62 L634.0,179.77 L635.0,179.93 L636.0,180.09 L637.0,180.25 L638.0,180.41 L639.0,180.58 L640.0,180.74 L641.0,180.91 L642.0,181.09 L643.0,181.26 L644.0,181.44 L645.0,181.61 L646.0,181.80 L647.0,181.98 L648.0,182.17 L649.0,182.35 L650.0,182.54 L651.0,182.74 L652.0,182.93 L653.0,183.13 L654.0,183.34 L655.0,183.54 L656.0,183.75 L657.0,183.96 L658.0,184.18 L659.0,184.40 L660.0,184.62 L661.0,184.85 L662.0,185.08 L663.0,185.32 L664.0,185.56 L665.0,185.81 L666.0,186.06 L667.0,186.32 L668.0,186.58 L669.0,186.84 L670.0,187.12 L671.0,187.40 L672.0,187.68 L673.0,187.97 L674.0,188.27 L675.0,188.57 L676.0,188.88 L677.0,189.19 L678.0,189.51 L679.0,189.84 L680.0,190.18 L681.0,190.52 L682.0,190.87 L683.0,191.23 L684.0,191.60 L685.0,191.97 L686.0,192.35 L687.0,192.74 L688.0,193.14 L689.0,193.55 L690.0,193.96 L691.0,194.39 L692.0,194.82 L693.0,195.26 L694.0,195.72 L695.0,196.18 L696.0,196.65 L697.0,197.13 L698.0,197.62 L699.0,198.11 L700.0,198.62 L701.0,199.14 L702.0,199.67 L703.0,200.21 L704.0,200.76 L705.0,201.32 L706.0,201.88 L707.0,202.45 L708.0,203.03 L709.0,203.62 L710.0,204.21 L711.0,204.81 L712.0,205.41 L713.0,206.02 L714.0,206.63 L715.0,207.25 L716.0,207.87 L717.0,208.49 L718.0,209.12 L719.0,209.75 L720.0,210.38 L721.0,211.01 L722.0,211.64 L723.0,212.27 L724.0,212.90 L725.0,213.54 L726.0,214.17 L727.0,214.80 L728.0,215.42 L729.0,216.05 L730.0,216.67 L731.0,217.29 L732.0,217.91 L733.0,218.52 L734.0,219.13 L735.0,219.73 L736.0,220.33 L737.0,220.94 L738.0,221.54 L739.0,222.14 L740.0,222.74 L741.0,223.34 L742.0,223.94 L743.0,224.55 L744.0,225.16 L745.0,225.77 L746.0,226.39 L747.0,227.01 L748.0,227.64 L749.0,228.27 L750.0,228.91 L751.0,229.56 L752.0,230.22 L753.0,230.88 L754.0,231.55 L755.0,232.22 L756.0,232.91 L757.0,233.60 L758.0,234.30 L759.0,235.01 L760.0,235.73 L761.0,236.46 L762.0,237.20 L763.0,237.95 L764.0,238.71 L765.0,239.48 L766.0,240.25 L767.0,241.04 L768.0,241.84 L769.0,242.66 L770.0,243.48 L771.0,244.32 L772.0,245.16 L773.0,246.02 L774.0,246.89 L775.0,247.78 L776.0,248.68 L777.0,249.59 L778.0,250.51 L779.0,251.45 L780.0,252.40 L781.0,253.37 L782.0,254.34 L783.0,255.33 L784.0,256.33 L785.0,257.34 L786.0,258.36 L787.0,259.39 L788.0,260.43 L789.0,261.48 L790.0,262.54 L791.0,263.60 L792.0,264.68 L793.0,265.76 L794.0,266.86 L795.0,267.95 L796.0,269.06 L797.0,270.17 L798.0,271.29 L799.0,272.42 L800.0,273.55 L801.0,274.68 L802.0,275.82 L803.0,276.97 L804.0,278.12 L805.0,279.27 L806.0,280.43 L807.0,281.58 L808.0,282.75 L809.0,283.91 L810.0,285.07 L811.0,286.24 L812.0,287.41 L813.0,288.58 L814.0,289.75 L815.0,290.92 L816.0,292.08 L817.0,293.25 L818.0,294.42 L819.0,295.58 L820.0,296.75 L821.0,297.91 L822.0,299.07 L823.0,300.23 L824.0,301.38 L825.0,302.53 L826.0,303.68 L827.0,304.82 L828.0,305.97 L829.0,307.11 L830.0,308.24 L831.0,309.38 L832.0,310.51 L833.0,311.64 L834.0,312.76 L835.0,313.88 L836.0,315.00 L837.0,316.12 L838.0,317.23 L839.0,318.34 L840.0,319.45 L841.0,320.55 L842.0,321.65 L843.0,322.75 L844.0,323.84 L845.0,324.93 L846.0,326.02 L847.0,327.11 L848.0,328.19 L849.0,329.26 L850.0,330.33 L851.0,331.40 L852.0,332.47 L853.0,333.53 L854.0,334.59 L855.0,335.65 L856.0,336.70 L857.0,337.75 L858.0,338.79 L859.0,339.84 L860.0,340.87 L861.0,341.91 L862.0,342.94 L863.0,343.97 L864.0,345.00 L865.0,346.02 L866.0,347.04 L867.0,348.06 L868.0,349.07 L869.0,350.08 L870.0,351.09 L871.0,352.09 L872.0,353.09 L873.0,354.09 L874.0,355.09 L875.0,356.08 L876.0,357.07 L877.0,358.06 L878.0,359.04 L879.0,360.03 L880.0,361.01 L881.0,361.98 L882.0,362.96 L883.0,363.93 L884.0,364.89 L885.0,365.85 L886.0,366.80 L887.0,367.75 L888.0,368.68 L889.0,369.61 L890.0,370.52 L891.0,371.43 L892.0,372.31 L893.0,373.19 L894.0,374.04 L895.0,374.89 L896.0,375.71 L897.0,376.51 L898.0,377.29 L899.0,378.06 L900.0,378.80 L901.0,379.51 L902.0,380.21 L903.0,380.88 L904.0,381.54 L905.0,382.18 L906.0,382.80 L907.0,383.41 L908.0,384.01 L909.0,384.60 L910.0,385.19 L911.0,385.76 L912.0,386.33 L913.0,386.90 L914.0,387.47 L915.0,388.03 L916.0,388.60 L917.0,389.18 L918.0,389.75 L919.0,390.34 L920.0,390.93 L921.0,391.54 L922.0,392.16 L923.0,392.79 L924.0,393.43 L925.0,394.09 L926.0,394.75 L927.0,395.42 L928.0,396.08 L929.0,396.74 L930.0,397.38 L931.0,398.02 L932.0,398.64 L933.0,399.24 L934.0,399.81 L935.0,400.36 L936.0,400.88 L937.0,401.36 L938.0,401.81 L939.0,402.21 L940.0,402.56 L941.0,402.87 L942.0,403.12 L943.0,403.31 L944.0,403.44 L945.0,403.51 L946.0,403.53 L947.0,403.50 L948.0,403.42 L949.0,403.30 L950.0,403.14 L951.0,402.96 L952.0,402.74 L953.0,402.51 L954.0,402.25 L955.0,401.99 L956.0,401.72 L957.0,401.43 L958.0,401.15 L959.0,400.86 L960.0,400.56 L961.0,400.26 L962.0,399.96 L963.0,399.66 L964.0,399.35 L965.0,399.05 L966.0,398.74 L967.0,398.44 L968.0,398.14 L969.0,397.85 L970.0,397.56 L971.0,397.27 L972.0,396.99 L973.0,396.72 L974.0,396.46 L975.0,396.20 L976.0,395.95 L977.0,395.72 L978.0,395.49 L979.0,395.28 L980.0,395.08 L981.0,394.89 L982.0,394.72 L983.0,394.57 L984.0,394.43 L985.0,394.30 L986.0,394.20 L987.0,394.12 L988.0,394.05 L989.0,394.01 L990.0,393.98 L991.0,393.98 L992.0,394.01 L993.0,394.05 L994.0,394.11 L995.0,394.20 L996.0,394.30 L997.0,394.42 L998.0,394.57 L999.0,394.73 L1000.0,394.91 L1001.0,395.10 L1002.0,395.31 L1003.0,395.54 L1004.0,395.79 L1005.0,396.04 L1006.0,396.32 L1007.0,396.60 L1008.0,396.91 L1009.0,397.22 L1010.0,397.55 L1011.0,397.88 L1012.0,398.23 L1013.0,398.59 L1014.0,398.96 L1015.0,399.35 L1016.0,399.74 L1017.0,400.13 L1018.0,400.54 L1019.0,400.96 L1020.0,401.38 L1021.0,401.80 L1022.0,402.24 L1023.0,402.68 L1024.0,403.12 L1025.0,403.58 L1026.0,404.04 L1027.0,404.50 L1028.0,404.98 L1029.0,405.47 L1030.0,405.96 L1031.0,406.47 L1032.0,406.99 L1033.0,407.52 L1034.0,408.07 L1035.0,408.65 L1036.0,409.31 L1037.0,410.08 L1038.0,411.02 L1039.0,412.14 L1040.0,413.51 L1041.0,415.16 L1042.0,417.12 L1043.0,419.45 L1044.0,422.13 L1045.0,425.02 L1046.0,427.92 L1047.0,430.72 L1048.0,433.45 L1049.0,436.12 L1050.0,438.74 L1051.0,441.33 L1052.0,443.90 L1053.0,446.46 L1054.0,449.03 L1055.0,451.60 L1056.0,454.18 L1057.0,456.78 L1058.0,459.40 L1059.0,462.05 L1060.0,464.72 L1061.0,467.43 L1062.0,470.18 L1063.0,472.97 L1064.0,475.81 L1065.0,478.72 L1066.0,481.79 L1067.0,485.19 L1068.0,489.10 L1068.7,492.21" fill="none" stroke="#ff00ff" stroke-width="3" stroke-linejoin="round" shape-rendering="crispEdges" clip-path="url(#pc)"/>
<path d="M442.0,169.83 L443.0,169.81 L444.0,169.78 L445.0,169.75 L446.0,169.73 L447.0,169.71 L448.0,169.68 L449.0,169.66 L450.0,169.64 L451.0,169.63 L452.0,169.61 L453.0,169.59 L454.0,169.58 L455.0,169.56 L456.0,169.55 L457.0,169.54 L458.0,169.53 L459.0,169.52 L460.0,169.51 L461.0,169.50 L462.0,169.49 L463.0,169.49 L464.0,169.48 L465.0,169.48 L466.0,169.48 L467.0,169.48 L468.0,169.48 L469.0,169.48 L470.0,169.48 L471.0,169.48 L472.0,169.49 L473.0,169.49 L474.0,169.50 L475.0,169.50 L476.0,169.51 L477.0,169.52 L478.0,169.53 L479.0,169.54 L480.0,169.55 L481.0,169.56 L482.0,169.58 L483.0,169.59 L484.0,169.61 L485.0,169.62 L486.0,169.64 L487.0,169.66 L488.0,169.67 L489.0,169.69 L490.0,169.71 L491.0,169.73 L492.0,169.76 L493.0,169.78 L494.0,169.80 L495.0,169.83 L496.0,169.85 L497.0,169.88 L498.0,169.91 L499.0,169.93 L500.0,169.96 L501.0,169.99 L502.0,170.02 L503.0,170.05 L504.0,170.08 L505.0,170.11 L506.0,170.15 L507.0,170.18 L508.0,170.22 L509.0,170.25 L510.0,170.29 L511.0,170.32 L512.0,170.36 L513.0,170.40 L514.0,170.44 L515.0,170.48 L516.0,170.52 L517.0,170.56 L518.0,170.60 L519.0,170.64 L520.0,170.68 L521.0,170.72 L522.0,170.77 L523.0,170.81 L524.0,170.86 L525.0,170.90 L526.0,170.95 L527.0,171.00 L528.0,171.04 L529.0,171.09 L530.0,171.14 L531.0,171.19 L532.0,171.24 L533.0,171.29 L534.0,171.34 L535.0,171.39 L536.0,171.44 L537.0,171.49 L538.0,171.55 L539.0,171.60 L540.0,171.65 L541.0,171.71 L542.0,171.76 L543.0,171.82 L544.0,171.87 L545.0,171.93 L546.0,171.99 L547.0,172.04 L548.0,172.10 L549.0,172.16 L550.0,172.22 L551.0,172.27 L552.0,172.33 L553.0,172.39 L554.0,172.45 L555.0,172.51 L556.0,172.57 L557.0,172.63 L558.0,172.70 L559.0,172.76 L560.0,172.82 L561.0,172.88 L562.0,172.94 L563.0,173.01 L564.0,173.07 L565.0,173.13 L566.0,173.20 L567.0,173.26 L568.0,173.33 L569.0,173.40 L570.0,173.46 L571.0,173.53 L572.0,173.60 L573.0,173.67 L574.0,173.73 L575.0,173.80 L576.0,173.87 L577.0,173.95 L578.0,174.02 L579.0,174.09 L580.0,174.16 L581.0,174.24 L582.0,174.31 L583.0,174.39 L584.0,174.47 L585.0,174.55 L586.0,174.63 L587.0,174.71 L588.0,174.79 L589.0,174.87 L590.0,174.95 L591.0,175.04 L592.0,175.12 L593.0,175.21 L594.0,175.30 L595.0,175.39 L596.0,175.48 L597.0,175.57 L598.0,175.66 L599.0,175.75 L600.0,175.85 L601.0,175.95 L602.0,176.04 L603.0,176.14 L604.0,176.24 L605.0,176.35 L606.0,176.45 L607.0,176.56 L608.0,176.66 L609.0,176.77 L610.0,176.88 L611.0,176.99 L612.0,177.10 L613.0,177.22 L614.0,177.34 L615.0,177.45 L616.0,177.57 L617.0,177.69 L618.0,177.82 L619.0,177.94 L620.0,178.07 L621.0,178.20 L622.0,178.33 L623.0,178.46 L624.0,178.60 L625.0,178.73 L626.0,178.87 L627.0,179.01 L628.0,179.15 L629.0,179.30 L630.0,179.44 L631.0,179.59 L632.0,179.74 L633.0,179.90 L634.0,180.05 L635.0,180.21 L636.0,180.37 L637.0,180.53 L638.0,180.69 L639.0,180.86 L640.0,181.03 L641.0,181.20 L642.0,181.37 L643.0,181.54 L644.0,181.72 L645.0,181.90 L646.0,182.09 L647.0,182.27 L648.0,182.46 L649.0,182.65 L650.0,182.84 L651.0,183.04 L652.0,183.24 L653.0,183.44 L654.0,183.64 L655.0,183.85 L656.0,184.06 L657.0,184.28 L658.0,184.49 L659.0,184.72 L660.0,184.94 L661.0,185.18 L662.0,185.41 L663.0,185.65 L664.0,185.90 L665.0,186.15 L666.0,186.40 L667.0,186.66 L668.0,186.93 L669.0,187.20 L670.0,187.48 L671.0,187.76 L672.0,188.05 L673.0,188.34 L674.0,188.64 L675.0,188.95 L676.0,189.26 L677.0,189.59 L678.0,189.91 L679.0,190.25 L680.0,190.59 L681.0,190.94 L682.0,191.30 L683.0,191.66 L684.0,192.04 L685.0,192.42 L686.0,192.80 L687.0,193.20 L688.0,193.61 L689.0,194.02 L690.0,194.45 L691.0,194.88 L692.0,195.32 L693.0,195.77 L694.0,196.22 L695.0,196.69 L696.0,197.16 L697.0,197.64 L698.0,198.13 L699.0,198.62 L700.0,199.12 L701.0,199.63 L702.0,200.15 L703.0,200.67 L704.0,201.20 L705.0,201.74 L706.0,202.28 L707.0,202.83 L708.0,203.38 L709.0,203.95 L710.0,204.51 L711.0,205.09 L712.0,205.66 L713.0,206.25 L714.0,206.84 L715.0,207.43 L716.0,208.03 L717.0,208.64 L718.0,209.24 L719.0,209.86 L720.0,210.48 L721.0,211.10 L722.0,211.73 L723.0,212.36 L724.0,212.99 L725.0,213.63 L726.0,214.27 L727.0,214.92 L728.0,215.57 L729.0,216.22 L730.0,216.88 L731.0,217.54 L732.0,218.20 L733.0,218.86 L734.0,219.53 L735.0,220.20 L736.0,220.87 L737.0,221.55 L738.0,222.23 L739.0,222.92 L740.0,223.61 L741.0,224.30 L742.0,224.99 L743.0,225.69 L744.0,226.40 L745.0,227.11 L746.0,227.82 L747.0,228.54 L748.0,229.26 L749.0,229.99 L750.0,230.72 L751.0,231.46 L752.0,232.20 L753.0,232.95 L754.0,233.70 L755.0,234.46 L756.0,235.23 L757.0,236.00 L758.0,236.78 L759.0,237.56 L760.0,238.35 L761.0,239.14 L762.0,239.94 L763.0,240.75 L764.0,241.57 L765.0,242.39 L766.0,243.21 L767.0,244.05 L768.0,244.89 L769.0,245.74 L770.0,246.60 L771.0,247.46 L772.0,248.33 L773.0,249.21 L774.0,250.10 L775.0,251.00 L776.0,251.90 L777.0,252.81 L778.0,253.73 L779.0,254.66 L780.0,255.60 L781.0,256.54 L782.0,257.50 L783.0,258.46 L784.0,259.43 L785.0,260.41 L786.0,261.40 L787.0,262.40 L788.0,263.41 L789.0,264.43 L790.0,265.46 L791.0,266.50 L792.0,267.55 L793.0,268.61 L794.0,269.68 L795.0,270.76 L796.0,271.85 L797.0,272.95 L798.0,274.06 L799.0,275.18 L800.0,276.31 L801.0,277.46 L802.0,278.61 L803.0,279.78 L804.0,280.95 L805.0,282.14 L806.0,283.34 L807.0,284.55 L808.0,285.77 L809.0,287.00 L810.0,288.23 L811.0,289.47 L812.0,290.72 L813.0,291.97 L814.0,293.23 L815.0,294.48 L816.0,295.75 L817.0,297.01 L818.0,298.27 L819.0,299.53 L820.0,300.80 L821.0,302.06 L822.0,303.32 L823.0,304.57 L824.0,305.82 L825.0,307.07 L826.0,308.31 L827.0,309.54 L828.0,310.77 L829.0,311.98 L830.0,313.19 L831.0,314.39 L832.0,315.58 L833.0,316.75 L834.0,317.92 L835.0,319.08 L836.0,320.24 L837.0,321.39 L838.0,322.54 L839.0,323.69 L840.0,324.84 L841.0,325.99 L842.0,327.14 L843.0,328.31 L844.0,329.48 L845.0,330.66 L846.0,331.85 L847.0,333.05 L848.0,334.26 L849.0,335.47 L850.0,336.69 L851.0,337.92 L852.0,339.15 L853.0,340.38 L854.0,341.62 L855.0,342.86 L856.0,344.09 L857.0,345.32 L858.0,346.55 L859.0,347.78 L860.0,349.00 L861.0,350.21 L862.0,351.42 L863.0,352.61 L864.0,353.80 L865.0,354.97 L866.0,356.14 L867.0,357.28 L868.0,358.42 L869.0,359.54 L870.0,360.64 L871.0,361.72 L872.0,362.78 L873.0,363.82 L874.0,364.85 L875.0,365.86 L876.0,366.85 L877.0,367.84 L878.0,368.82 L879.0,369.79 L880.0,370.77 L881.0,371.75 L882.0,372.73 L883.0,373.73 L884.0,374.74 L885.0,375.76 L886.0,376.80 L887.0,377.86 L888.0,378.95 L889.0,380.06 L890.0,381.21 L891.0,382.38 L892.0,383.57 L893.0,384.77 L894.0,385.98 L895.0,387.20 L896.0,388.40 L897.0,389.60 L898.0,390.79 L899.0,391.95 L900.0,393.08 L901.0,394.18 L902.0,395.25 L903.0,396.26 L904.0,397.23 L905.0,398.14 L906.0,398.99 L907.0,399.77 L908.0,400.49 L909.0,401.14 L910.0,401.72 L911.0,402.22 L912.0,402.66 L913.0,403.01 L914.0,403.29 L915.0,403.49 L916.0,403.61 L917.0,403.66 L918.0,403.64 L919.0,403.56 L920.0,403.42 L921.0,403.22 L922.0,402.96 L923.0,402.66 L924.0,402.31 L925.0,401.91 L926.0,401.48 L927.0,401.01 L928.0,400.51 L929.0,399.98 L930.0,399.43 L931.0,398.85 L932.0,398.26 L933.0,397.65 L934.0,397.03 L935.0,396.41 L936.0,395.78 L937.0,395.16 L938.0,394.53 L939.0,393.92 L940.0,393.32 L941.0,392.73 L942.0,392.16 L943.0,391.61 L944.0,391.09 L945.0,390.60 L946.0,390.13 L947.0,389.69 L948.0,389.27 L949.0,388.88 L950.0,388.52 L951.0,388.17 L952.0,387.85 L953.0,387.56 L954.0,387.28 L955.0,387.03 L956.0,386.80 L957.0,386.59 L958.0,386.39 L959.0,386.22 L960.0,386.07 L961.0,385.93 L962.0,385.81 L963.0,385.71 L964.0,385.63 L965.0,385.56 L966.0,385.51 L967.0,385.47 L968.0,385.44 L969.0,385.43 L970.0,385.44 L971.0,385.45 L972.0,385.48 L973.0,385.52 L974.0,385.57 L975.0,385.63 L976.0,385.70 L977.0,385.78 L978.0,385.87 L979.0,385.96 L980.0,386.07 L981.0,386.18 L982.0,386.30 L983.0,386.42 L984.0,386.55 L985.0,386.68 L986.0,386.82 L987.0,386.96 L988.0,387.11 L989.0,387.25 L990.0,387.40 L991.0,387.55 L992.0,387.71 L993.0,387.86 L994.0,388.02 L995.0,388.19 L996.0,388.35 L997.0,388.53 L998.0,388.71 L999.0,388.90 L1000.0,389.09 L1001.0,389.30 L1002.0,389.51 L1003.0,389.74 L1004.0,389.97 L1005.0,390.22 L1006.0,390.47 L1007.0,390.74 L1008.0,391.03 L1009.0,391.33 L1010.0,391.64 L1011.0,391.97 L1012.0,392.31 L1013.0,392.68 L1014.0,393.06 L1015.0,393.46 L1016.0,393.87 L1017.0,394.31 L1018.0,394.77 L1019.0,395.25 L1020.0,395.75 L1021.0,396.27 L1022.0,396.82 L1023.0,397.39 L1024.0,397.99 L1025.0,398.61 L1026.0,399.26 L1027.0,399.94 L1028.0,400.64 L1029.0,401.37 L1030.0,402.13 L1031.0,402.92 L1032.0,403.74 L1033.0,404.59 L1034.0,405.48 L1035.0,406.40 L1036.0,407.37 L1037.0,408.40 L1038.0,409.50 L1039.0,410.67 L1040.0,411.92 L1041.0,413.27 L1042.0,414.72 L1043.0,416.28 L1044.0,417.96 L1045.0,419.77 L1046.0,421.72 L1047.0,423.82 L1048.0,426.07 L1049.0,428.48 L1050.0,431.05 L1051.0,433.74 L1052.0,436.50 L1053.0,439.30 L1054.0,442.09 L1055.0,444.83 L1056.0,447.50 L1057.0,450.13 L1058.0,452.73 L1059.0,455.32 L1060.0,457.91 L1061.0,460.51 L1062.0,463.15 L1063.0,465.85 L1064.0,468.60 L1065.0,471.45 L1066.0,474.39 L1067.0,477.45 L1068.0,480.64 L1069.0,484.00 L1070.0,487.56 L1071.0,491.35 L1071.2,492.14" fill="none" stroke="#008080" stroke-width="3" stroke-linejoin="round" shape-rendering="crispEdges" clip-path="url(#pc)"/>
<path d="M442.0,169.54 L443.0,169.58 L444.0,169.62 L445.0,169.65 L446.0,169.69 L447.0,169.72 L448.0,169.75 L449.0,169.78 L450.0,169.81 L451.0,169.83 L452.0,169.85 L453.0,169.87 L454.0,169.89 L455.0,169.91 L456.0,169.92 L457.0,169.93 L458.0,169.95 L459.0,169.96 L460.0,169.97 L461.0,169.97 L462.0,169.98 L463.0,169.99 L464.0,169.99 L465.0,169.99 L466.0,170.00 L467.0,170.00 L468.0,170.00 L469.0,170.00 L470.0,170.00 L471.0,170.00 L472.0,169.99 L473.0,169.99 L474.0,169.99 L475.0,169.99 L476.0,169.98 L477.0,169.98 L478.0,169.98 L479.0,169.97 L480.0,169.97 L481.0,169.97 L482.0,169.97 L483.0,169.96 L484.0,169.96 L485.0,169.96 L486.0,169.96 L487.0,169.96 L488.0,169.96 L489.0,169.96 L490.0,169.96 L491.0,169.96 L492.0,169.96 L493.0,169.97 L494.0,169.97 L495.0,169.98 L496.0,169.99 L497.0,170.00 L498.0,170.01 L499.0,170.02 L500.0,170.03 L501.0,170.05 L502.0,170.06 L503.0,170.08 L504.0,170.10 L505.0,170.12 L506.0,170.14 L507.0,170.17 L508.0,170.20 L509.0,170.23 L510.0,170.26 L511.0,170.29 L512.0,170.33 L513.0,170.37 L514.0,170.41 L515.0,170.45 L516.0,170.50 L517.0,170.55 L518.0,170.60 L519.0,170.65 L520.0,170.71 L521.0,170.76 L522.0,170.82 L523.0,170.88 L524.0,170.94 L525.0,171.01 L526.0,171.07 L527.0,171.14 L528.0,171.21 L529.0,171.28 L530.0,171.35 L531.0,171.43 L532.0,171.50 L533.0,171.58 L534.0,171.65 L535.0,171.73 L536.0,171.81 L537.0,171.89 L538.0,171.97 L539.0,172.05 L540.0,172.14 L541.0,172.22 L542.0,172.31 L543.0,172.39 L544.0,172.48 L545.0,172.56 L546.0,172.65 L547.0,172.74 L548.0,172.83 L549.0,172.91 L550.0,173.00 L551.0,173.09 L552.0,173.18 L553.0,173.27 L554.0,173.35 L555.0,173.44 L556.0,173.53 L557.0,173.62 L558.0,173.71 L559.0,173.79 L560.0,173.88 L561.0,173.97 L562.0,174.05 L563.0,174.14 L564.0,174.23 L565.0,174.31 L566.0,174.40 L567.0,174.48 L568.0,174.57 L569.0,174.65 L570.0,174.74 L571.0,174.82 L572.0,174.91 L573.0,174.99 L574.0,175.08 L575.0,175.16 L576.0,175.25 L577.0,175.34 L578.0,175.42 L579.0,175.51 L580.0,175.60 L581.0,175.68 L582.0,175.77 L583.0,175.86 L584.0,175.95 L585.0,176.04 L586.0,176.13 L587.0,176.23 L588.0,176.32 L589.0,176.41 L590.0,176.51 L591.0,176.60 L592.0,176.70 L593.0,176.79 L594.0,176.89 L595.0,176.99 L596.0,177.09 L597.0,177.19 L598.0,177.30 L599.0,177.40 L600.0,177.51 L601.0,177.61 L602.0,177.72 L603.0,177.83 L604.0,177.94 L605.0,178.06 L606.0,178.17 L607.0,178.29 L608.0,178.41 L609.0,178.52 L610.0,178.65 L611.0,178.77 L612.0,178.89 L613.0,179.02 L614.0,179.15 L615.0,179.28 L616.0,179.41 L617.0,179.55 L618.0,179.69 L619.0,179.83 L620.0,179.97 L621.0,180.11 L622.0,180.26 L623.0,180.40 L624.0,180.56 L625.0,180.71 L626.0,180.86 L627.0,181.02 L628.0,181.18 L629.0,181.35 L630.0,181.51 L631.0,181.68 L632.0,181.85 L633.0,182.03 L634.0,182.20 L635.0,182.38 L636.0,182.57 L637.0,182.75 L638.0,182.94 L639.0,183.13 L640.0,183.33 L641.0,183.53 L642.0,183.73 L643.0,183.93 L644.0,184.14 L645.0,184.35 L646.0,184.57 L647.0,184.78 L648.0,185.00 L649.0,185.23 L650.0,185.46 L651.0,185.69 L652.0,185.93 L653.0,186.16 L654.0,186.41 L655.0,186.65 L656.0,186.90 L657.0,187.16 L658.0,187.42 L659.0,187.68 L660.0,187.95 L661.0,188.22 L662.0,188.49 L663.0,188.77 L664.0,189.06 L665.0,189.35 L666.0,189.64 L667.0,189.94 L668.0,190.25 L669.0,190.57 L670.0,190.89 L671.0,191.22 L672.0,191.55 L673.0,191.89 L674.0,192.25 L675.0,192.61 L676.0,192.97 L677.0,193.35 L678.0,193.74 L679.0,194.13 L680.0,194.54 L681.0,194.95 L682.0,195.38 L683.0,195.81 L684.0,196.26 L685.0,196.72 L686.0,197.19 L687.0,197.67 L688.0,198.16 L689.0,198.67 L690.0,199.19 L691.0,199.71 L692.0,200.26 L693.0,200.81 L694.0,201.37 L695.0,201.94 L696.0,202.52 L697.0,203.11 L698.0,203.71 L699.0,204.32 L700.0,204.93 L701.0,205.55 L702.0,206.18 L703.0,206.82 L704.0,207.46 L705.0,208.10 L706.0,208.75 L707.0,209.41 L708.0,210.06 L709.0,210.73 L710.0,211.39 L711.0,212.06 L712.0,212.73 L713.0,213.40 L714.0,214.07 L715.0,214.74 L716.0,215.41 L717.0,216.09 L718.0,216.76 L719.0,217.43 L720.0,218.10 L721.0,218.77 L722.0,219.45 L723.0,220.12 L724.0,220.80 L725.0,221.48 L726.0,222.16 L727.0,222.84 L728.0,223.53 L729.0,224.23 L730.0,224.92 L731.0,225.63 L732.0,226.33 L733.0,227.05 L734.0,227.77 L735.0,228.50 L736.0,229.23 L737.0,229.98 L738.0,230.73 L739.0,231.49 L740.0,232.26 L741.0,233.04 L742.0,233.82 L743.0,234.62 L744.0,235.43 L745.0,236.26 L746.0,237.09 L747.0,237.94 L748.0,238.80 L749.0,239.67 L750.0,240.56 L751.0,241.47 L752.0,242.39 L753.0,243.32 L754.0,244.27 L755.0,245.24 L756.0,246.23 L757.0,247.23 L758.0,248.26 L759.0,249.30 L760.0,250.36 L761.0,251.44 L762.0,252.54 L763.0,253.66 L764.0,254.79 L765.0,255.93 L766.0,257.09 L767.0,258.27 L768.0,259.45 L769.0,260.64 L770.0,261.84 L771.0,263.05 L772.0,264.26 L773.0,265.48 L774.0,266.70 L775.0,267.92 L776.0,269.14 L777.0,270.37 L778.0,271.59 L779.0,272.81 L780.0,274.02 L781.0,275.23 L782.0,276.44 L783.0,277.63 L784.0,278.82 L785.0,280.00 L786.0,281.16 L787.0,282.32 L788.0,283.46 L789.0,284.60 L790.0,285.75 L791.0,286.92 L792.0,288.10 L793.0,289.30 L794.0,290.54 L795.0,291.82 L796.0,293.15 L797.0,294.53 L798.0,295.97 L799.0,297.48 L800.0,299.06 L801.0,300.71 L802.0,302.41 L803.0,304.15 L804.0,305.92 L805.0,307.70 L806.0,309.48 L807.0,311.25 L808.0,312.98 L809.0,314.67 L810.0,316.31 L811.0,317.91 L812.0,319.48 L813.0,321.03 L814.0,322.58 L815.0,324.13 L816.0,325.70 L817.0,327.30 L818.0,328.94 L819.0,330.63 L820.0,332.37 L821.0,334.14 L822.0,335.94 L823.0,337.74 L824.0,339.53 L825.0,341.29 L826.0,343.02 L827.0,344.69 L828.0,346.29 L829.0,347.81 L830.0,349.27 L831.0,350.69 L832.0,352.09 L833.0,353.48 L834.0,354.90 L835.0,356.36 L836.0,357.88 L837.0,359.48 L838.0,361.19 L839.0,362.96 L840.0,364.76 L841.0,366.55 L842.0,368.29 L843.0,369.95 L844.0,371.49 L845.0,372.86 L846.0,374.04 L847.0,375.00 L848.0,375.74 L849.0,376.28 L850.0,376.64 L851.0,376.81 L852.0,376.81 L853.0,376.66 L854.0,376.35 L855.0,375.92 L856.0,375.35 L857.0,374.67 L858.0,373.88 L859.0,373.00 L860.0,372.04 L861.0,371.00 L862.0,369.87 L863.0,368.63 L864.0,367.27 L865.0,365.77 L866.0,364.11 L867.0,362.28 L868.0,360.27 L869.0,358.16 L870.0,356.02 L871.0,353.95 L872.0,352.03 L873.0,350.29 L874.0,348.73 L875.0,347.33 L876.0,346.10 L877.0,345.02 L878.0,344.09 L879.0,343.30 L880.0,342.64 L881.0,342.12 L882.0,341.71 L883.0,341.43 L884.0,341.25 L885.0,341.17 L886.0,341.18 L887.0,341.29 L888.0,341.47 L889.0,341.73 L890.0,342.06 L891.0,342.45 L892.0,342.90 L893.0,343.39 L894.0,343.92 L895.0,344.49 L896.0,345.08 L897.0,345.70 L898.0,346.33 L899.0,346.97 L900.0,347.61 L901.0,348.25 L902.0,348.88 L903.0,349.51 L904.0,350.14 L905.0,350.77 L906.0,351.39 L907.0,352.01 L908.0,352.62 L909.0,353.23 L910.0,353.84 L911.0,354.44 L912.0,355.04 L913.0,355.63 L914.0,356.22 L915.0,356.80 L916.0,357.38 L917.0,357.95 L918.0,358.52 L919.0,359.08 L920.0,359.64 L921.0,360.18 L922.0,360.73 L923.0,361.26 L924.0,361.79 L925.0,362.31 L926.0,362.83 L927.0,363.33 L928.0,363.83 L929.0,364.32 L930.0,364.81 L931.0,365.28 L932.0,365.75 L933.0,366.21 L934.0,366.66 L935.0,367.11 L936.0,367.54 L937.0,367.97 L938.0,368.39 L939.0,368.80 L940.0,369.20 L941.0,369.60 L942.0,369.99 L943.0,370.37 L944.0,370.75 L945.0,371.12 L946.0,371.48 L947.0,371.83 L948.0,372.18 L949.0,372.52 L950.0,372.86 L951.0,373.19 L952.0,373.51 L953.0,373.83 L954.0,374.14 L955.0,374.44 L956.0,374.74 L957.0,375.03 L958.0,375.32 L959.0,375.60 L960.0,375.88 L961.0,376.15 L962.0,376.41 L963.0,376.68 L964.0,376.93 L965.0,377.18 L966.0,377.43 L967.0,377.67 L968.0,377.91 L969.0,378.14 L970.0,378.37 L971.0,378.59 L972.0,378.81 L973.0,379.03 L974.0,379.24 L975.0,379.45 L976.0,379.65 L977.0,379.85 L978.0,380.05 L979.0,380.24 L980.0,380.43 L981.0,380.62 L982.0,380.81 L983.0,380.99 L984.0,381.17 L985.0,381.36 L986.0,381.54 L987.0,381.73 L988.0,381.91 L989.0,382.10 L990.0,382.30 L991.0,382.50 L992.0,382.70 L993.0,382.91 L994.0,383.13 L995.0,383.36 L996.0,383.59 L997.0,383.83 L998.0,384.09 L999.0,384.35 L1000.0,384.63 L1001.0,384.92 L1002.0,385.22 L1003.0,385.54 L1004.0,385.87 L1005.0,386.22 L1006.0,386.58 L1007.0,386.96 L1008.0,387.36 L1009.0,387.78 L1010.0,388.21 L1011.0,388.67 L1012.0,389.15 L1013.0,389.65 L1014.0,390.17 L1015.0,390.72 L1016.0,391.29 L1017.0,391.89 L1018.0,392.51 L1019.0,393.16 L1020.0,393.84 L1021.0,394.54 L1022.0,395.27 L1023.0,396.04 L1024.0,396.83 L1025.0,397.65 L1026.0,398.49 L1027.0,399.35 L1028.0,400.22 L1029.0,401.11 L1030.0,402.01 L1031.0,402.92 L1032.0,403.83 L1033.0,404.75 L1034.0,405.66 L1035.0,406.59 L1036.0,407.55 L1037.0,408.57 L1038.0,409.66 L1039.0,410.84 L1040.0,412.14 L1041.0,413.57 L1042.0,415.14 L1043.0,416.84 L1044.0,418.66 L1045.0,420.59 L1046.0,422.63 L1047.0,424.75 L1048.0,426.96 L1049.0,429.23 L1050.0,431.56 L1051.0,433.95 L1052.0,436.37 L1053.0,438.82 L1054.0,441.29 L1055.0,443.77 L1056.0,446.25 L1057.0,448.73 L1058.0,451.21 L1059.0,453.70 L1060.0,456.22 L1061.0,458.76 L1062.0,461.35 L1063.0,463.97 L1064.0,466.65 L1065.0,469.39 L1066.0,472.20 L1067.0,475.09 L1068.0,478.06 L1069.0,481.18 L1070.0,484.62 L1071.0,488.56 L1071.8,492.21" fill="none" stroke="#400080" stroke-width="3" stroke-linejoin="round" shape-rendering="crispEdges" clip-path="url(#pc)"/>
<path d="M58.8,180.84 L59.8,180.61 L60.8,180.38 L61.8,180.16 L62.8,179.94 L63.8,179.72 L64.8,179.51 L65.8,179.30 L66.8,179.09 L67.8,178.88 L68.8,178.68 L69.8,178.48 L70.8,178.28 L71.8,178.09 L72.8,177.90 L73.8,177.71 L74.8,177.52 L75.8,177.34 L76.8,177.16 L77.8,176.98 L78.8,176.81 L79.8,176.63 L80.8,176.46 L81.8,176.30 L82.8,176.13 L83.8,175.97 L84.8,175.81 L85.8,175.65 L86.8,175.50 L87.8,175.34 L88.8,175.19 L89.8,175.05 L90.8,174.90 L91.8,174.76 L92.8,174.62 L93.8,174.48 L94.8,174.34 L95.8,174.21 L96.8,174.08 L97.8,173.95 L98.8,173.82 L99.8,173.70 L100.8,173.57 L101.8,173.45 L102.8,173.34 L103.8,173.22 L104.8,173.11 L105.8,172.99 L106.8,172.88 L107.8,172.78 L108.8,172.67 L109.8,172.57 L110.8,172.47 L111.8,172.37 L112.8,172.27 L113.8,172.17 L114.8,172.08 L115.8,171.99 L116.8,171.90 L117.8,171.81 L118.8,171.72 L119.8,171.64 L120.8,171.56 L121.8,171.48 L122.8,171.40 L123.8,171.32 L124.8,171.24 L125.8,171.17 L126.8,171.10 L127.8,171.03 L128.8,170.96 L129.8,170.89 L130.8,170.83 L131.8,170.76 L132.8,170.70 L133.8,170.64 L134.8,170.58 L135.8,170.52 L136.8,170.47 L137.8,170.41 L138.8,170.36 L139.8,170.31 L140.8,170.26 L141.8,170.21 L142.8,170.16 L143.8,170.11 L144.8,170.07 L145.8,170.02 L146.8,169.98 L147.8,169.94 L148.8,169.90 L149.8,169.86 L150.8,169.83 L151.8,169.79 L152.8,169.75 L153.8,169.72 L154.8,169.69 L155.8,169.66 L156.8,169.63 L157.8,169.60 L158.8,169.57 L159.8,169.54 L160.8,169.52 L161.8,169.49 L162.8,169.47 L163.8,169.44 L164.8,169.42 L165.8,169.40 L166.8,169.38 L167.8,169.36 L168.8,169.34 L169.8,169.32 L170.8,169.31 L171.8,169.29 L172.8,169.28 L173.8,169.26 L174.8,169.25 L175.8,169.24 L176.8,169.22 L177.8,169.21 L178.8,169.20 L179.8,169.19 L180.8,169.18 L181.8,169.17 L182.8,169.16 L183.8,169.16 L184.8,169.15 L185.8,169.14 L186.8,169.14 L187.8,169.13 L188.8,169.13 L189.8,169.12 L190.8,169.12 L191.8,169.11 L192.8,169.11 L193.8,169.11 L194.8,169.10 L195.8,169.10 L196.8,169.10 L197.8,169.10 L198.8,169.10 L199.8,169.10 L200.8,169.10 L201.8,169.10 L202.8,169.09 L203.8,169.09 L204.8,169.09 L205.8,169.10 L206.8,169.10 L207.8,169.10 L208.8,169.10 L209.8,169.10 L210.8,169.10 L211.8,169.10 L212.8,169.10 L213.8,169.10 L214.8,169.10 L215.8,169.10 L216.8,169.10 L217.8,169.10 L218.8,169.10 L219.8,169.10 L220.8,169.11 L221.8,169.11 L222.8,169.11 L223.8,169.11 L224.8,169.11 L225.8,169.11 L226.8,169.11 L227.8,169.11 L228.8,169.11 L229.8,169.11 L230.8,169.11 L231.8,169.12 L232.8,169.12 L233.8,169.12 L234.8,169.12 L235.8,169.12 L236.8,169.12 L237.8,169.12 L238.8,169.12 L239.8,169.12 L240.8,169.12 L241.8,169.12 L242.8,169.13 L243.8,169.13 L244.8,169.13 L245.8,169.13 L246.8,169.13 L247.8,169.13 L248.8,169.13 L249.8,169.13 L250.8,169.13 L251.8,169.13 L252.8,169.13 L253.8,169.14 L254.8,169.14 L255.8,169.14 L256.8,169.14 L257.8,169.14 L258.8,169.14 L259.8,169.14 L260.8,169.14 L261.8,169.14 L262.8,169.14 L263.8,169.15 L264.8,169.15 L265.8,169.15 L266.8,169.15 L267.8,169.15 L268.8,169.15 L269.8,169.15 L270.8,169.15 L271.8,169.15 L272.8,169.15 L273.8,169.16 L274.8,169.16 L275.8,169.16 L276.8,169.16 L277.8,169.16 L278.8,169.16 L279.8,169.16 L280.8,169.16 L281.8,169.16 L282.8,169.16 L283.8,169.17 L284.8,169.17 L285.8,169.17 L286.8,169.17 L287.8,169.17 L288.8,169.17 L289.8,169.17 L290.8,169.17 L291.8,169.17 L292.8,169.17 L293.8,169.17 L294.8,169.18 L295.8,169.18 L296.8,169.18 L297.8,169.18 L298.8,169.18 L299.8,169.18 L300.8,169.18 L301.8,169.18 L302.8,169.18 L303.8,169.18 L304.8,169.19 L305.8,169.19 L306.8,169.19 L307.8,169.19 L308.8,169.19 L309.8,169.19 L310.8,169.19 L311.8,169.19 L312.8,169.19 L313.8,169.19 L314.8,169.20 L315.8,169.20 L316.8,169.20 L317.8,169.20 L318.8,169.20 L319.8,169.20 L320.8,169.20 L321.8,169.20 L322.8,169.20 L323.8,169.20 L324.8,169.20 L325.8,169.21 L326.8,169.21 L327.8,169.21 L328.8,169.21 L329.8,169.21 L330.8,169.21 L331.8,169.21 L332.8,169.21 L333.8,169.21 L334.8,169.21 L335.8,169.21 L336.8,169.22 L337.8,169.22 L338.8,169.22 L339.8,169.22 L340.8,169.22 L341.8,169.22 L342.8,169.22 L343.8,169.22 L344.8,169.22 L345.8,169.22 L346.8,169.22 L347.8,169.22 L348.8,169.23 L349.8,169.23 L350.8,169.23 L351.8,169.23 L352.8,169.23 L353.8,169.23 L354.8,169.23 L355.8,169.23 L356.8,169.23 L357.8,169.23 L358.8,169.23 L359.8,169.23 L360.8,169.23 L361.8,169.23 L362.8,169.24 L363.8,169.24 L364.8,169.24 L365.8,169.24 L366.8,169.24 L367.8,169.24 L368.8,169.24 L369.8,169.24 L370.8,169.24 L371.8,169.24 L372.8,169.24 L373.8,169.24 L374.8,169.24 L375.8,169.24 L376.8,169.24 L377.8,169.24 L378.8,169.25 L379.8,169.25 L380.8,169.25 L381.8,169.25 L382.8,169.25 L383.8,169.25 L384.8,169.25 L385.8,169.25 L386.8,169.25 L387.8,169.25 L388.8,169.25 L389.8,169.25 L390.8,169.25 L391.8,169.25 L392.8,169.25 L393.8,169.26 L394.8,169.26 L395.8,169.26 L396.8,169.26 L397.8,169.26 L398.8,169.26 L399.8,169.27 L400.8,169.27 L401.8,169.27 L402.8,169.27 L403.8,169.27 L404.8,169.28 L405.8,169.28 L406.8,169.28 L407.8,169.29 L408.8,169.29 L409.8,169.29 L410.8,169.30 L411.8,169.30 L412.8,169.31 L413.8,169.31 L414.8,169.31 L415.8,169.32 L416.8,169.33 L417.8,169.33 L418.8,169.34 L419.8,169.34 L420.8,169.35 L421.8,169.36 L422.8,169.36 L423.8,169.37 L424.8,169.38 L425.8,169.39 L426.8,169.40 L427.8,169.40 L428.8,169.41 L429.8,169.42 L430.8,169.43 L431.8,169.44 L432.8,169.45 L433.8,169.47 L434.8,169.48 L435.8,169.49 L436.8,169.50 L437.8,169.52 L438.8,169.53 L439.8,169.54 L440.8,169.56 L441.8,169.57 L442.8,169.59 L443.8,169.60 L444.8,169.62 L445.8,169.64 L446.8,169.65 L447.8,169.67 L448.8,169.69 L449.8,169.71 L450.8,169.73 L451.8,169.75 L452.8,169.77 L453.8,169.79 L454.8,169.81 L455.8,169.83 L456.8,169.85 L457.8,169.88 L458.8,169.90 L459.8,169.93 L460.8,169.95 L461.8,169.98 L462.8,170.00 L463.8,170.03 L464.8,170.06 L465.8,170.09 L466.8,170.12 L467.8,170.15 L468.8,170.18 L469.8,170.21 L470.8,170.24 L471.8,170.27 L472.8,170.30 L473.8,170.34 L474.8,170.37 L475.8,170.41 L476.8,170.44 L477.8,170.48 L478.8,170.52 L479.8,170.56 L480.8,170.60 L481.8,170.64 L482.8,170.68 L483.8,170.72 L484.8,170.76 L485.8,170.80 L486.8,170.85 L487.8,170.89 L488.8,170.94 L489.8,170.98 L490.8,171.03 L491.8,171.08 L492.8,171.13 L493.8,171.18 L494.8,171.23 L495.8,171.28 L496.8,171.33 L497.8,171.39 L498.8,171.44 L499.8,171.50 L500.8,171.55 L501.8,171.61 L502.8,171.67 L503.8,171.73 L504.8,171.79 L505.8,171.85 L506.8,171.91 L507.8,171.97 L508.8,172.04 L509.8,172.10 L510.8,172.17 L511.8,172.24 L512.8,172.31 L513.8,172.37 L514.8,172.44 L515.8,172.52 L516.8,172.59 L517.8,172.66 L518.8,172.74 L519.8,172.81 L520.8,172.89 L521.8,172.97 L522.8,173.04 L523.8,173.12 L524.8,173.21 L525.8,173.29 L526.8,173.37 L527.8,173.46 L528.8,173.54 L529.8,173.63 L530.8,173.72 L531.8,173.80 L532.8,173.90 L533.8,173.99 L534.8,174.08 L535.8,174.17 L536.8,174.27 L537.8,174.36 L538.8,174.46 L539.8,174.56 L540.8,174.66 L541.8,174.76 L542.8,174.86 L543.8,174.97 L544.8,175.07 L545.8,175.18 L546.8,175.29 L547.8,175.40 L548.8,175.51 L549.8,175.62 L550.8,175.73 L551.8,175.85 L552.8,175.96 L553.8,176.08 L554.8,176.20 L555.8,176.32 L556.8,176.44 L557.8,176.56 L558.8,176.68 L559.8,176.81 L560.8,176.94 L561.8,177.06 L562.8,177.19 L563.8,177.32 L564.8,177.46 L565.8,177.59 L566.8,177.73 L567.8,177.86 L568.8,178.00 L569.8,178.14 L570.8,178.28 L571.8,178.42 L572.8,178.57 L573.8,178.72 L574.8,178.86 L575.8,179.01 L576.8,179.16 L577.8,179.32 L578.8,179.47 L579.8,179.62 L580.8,179.78 L581.8,179.94 L582.8,180.10 L583.8,180.26 L584.8,180.43 L585.8,180.59 L586.8,180.76 L587.8,180.93 L588.8,181.10 L589.8,181.27 L590.8,181.45 L591.8,181.62 L592.8,181.80 L593.8,181.98 L594.8,182.16 L595.8,182.35 L596.8,182.53 L597.8,182.72 L598.8,182.91 L599.8,183.10 L600.8,183.29 L601.8,183.49 L602.8,183.68 L603.8,183.88 L604.8,184.08 L605.8,184.29 L606.8,184.49 L607.8,184.70 L608.8,184.91 L609.8,185.12 L610.8,185.33 L611.8,185.54 L612.8,185.76 L613.8,185.98 L614.8,186.20 L615.8,186.42 L616.8,186.65 L617.8,186.87 L618.8,187.10 L619.8,187.33 L620.8,187.57 L621.8,187.80 L622.8,188.04 L623.8,188.28 L624.8,188.52 L625.8,188.77 L626.8,189.01 L627.8,189.26 L628.8,189.51 L629.8,189.76 L630.8,190.02 L631.8,190.28 L632.8,190.54 L633.8,190.80 L634.8,191.06 L635.8,191.33 L636.8,191.60 L637.8,191.87 L638.8,192.15 L639.8,192.42 L640.8,192.70 L641.8,192.98 L642.8,193.27 L643.8,193.56 L644.8,193.86 L645.8,194.16 L646.8,194.47 L647.8,194.79 L648.8,195.11 L649.8,195.44 L650.8,195.78 L651.8,196.13 L652.8,196.49 L653.8,196.85 L654.8,197.23 L655.8,197.62 L656.8,198.02 L657.8,198.44 L658.8,198.86 L659.8,199.30 L660.8,199.76 L661.8,200.22 L662.8,200.70 L663.8,201.19 L664.8,201.68 L665.8,202.19 L666.8,202.71 L667.8,203.23 L668.8,203.76 L669.8,204.29 L670.8,204.83 L671.8,205.38 L672.8,205.92 L673.8,206.47 L674.8,207.03 L675.8,207.58 L676.8,208.13 L677.8,208.69 L678.8,209.24 L679.8,209.80 L680.8,210.36 L681.8,210.92 L682.8,211.49 L683.8,212.06 L684.8,212.64 L685.8,213.22 L686.8,213.80 L687.8,214.40 L688.8,215.00 L689.8,215.60 L690.8,216.22 L691.8,216.84 L692.8,217.47 L693.8,218.11 L694.8,218.76 L695.8,219.42 L696.8,220.09 L697.8,220.77 L698.8,221.46 L699.8,222.17 L700.8,222.89 L701.8,223.62 L702.8,224.36 L703.8,225.12 L704.8,225.88 L705.8,226.67 L706.8,227.46 L707.8,228.26 L708.8,229.07 L709.8,229.90 L710.8,230.73 L711.8,231.58 L712.8,232.44 L713.8,233.30 L714.8,234.18 L715.8,235.06 L716.8,235.95 L717.8,236.86 L718.8,237.77 L719.8,238.69 L720.8,239.61 L721.8,240.55 L722.8,241.49 L723.8,242.44 L724.8,243.39 L725.8,244.36 L726.8,245.32 L727.8,246.30 L728.8,247.28 L729.8,248.27 L730.8,249.26 L731.8,250.25 L732.8,251.26 L733.8,252.28 L734.8,253.32 L735.8,254.39 L736.8,255.49 L737.8,256.62 L738.8,257.79 L739.8,259.01 L740.8,260.27 L741.8,261.59 L742.8,262.97 L743.8,264.42 L744.8,265.93 L745.8,267.51 L746.8,269.13 L747.8,270.77 L748.8,272.41 L749.8,274.03 L750.8,275.60 L751.8,277.10 L752.8,278.50 L753.8,279.80 L754.8,280.95 L755.8,281.95 L756.8,282.84 L757.8,283.67 L758.8,284.50 L759.8,285.40 L760.8,286.42 L761.8,287.57 L762.8,288.82 L763.8,290.15 L764.8,291.56 L765.8,293.01 L766.8,294.49 L767.8,295.98 L768.8,297.47 L769.8,298.93 L770.8,300.34 L771.8,301.70 L772.8,303.01 L773.8,304.27 L774.8,305.48 L775.8,306.66 L776.8,307.79 L777.8,308.88 L778.8,309.94 L779.8,310.97 L780.8,311.96 L781.8,312.93 L782.8,313.88 L783.8,314.80 L784.8,315.70 L785.8,316.59 L786.8,317.47 L787.8,318.33 L788.8,319.16 L789.8,319.95 L790.8,320.67 L791.8,321.31 L792.8,321.85 L793.8,322.27 L794.8,322.55 L795.8,322.67 L796.8,322.62 L797.8,322.41 L798.8,322.03 L799.8,321.50 L800.8,320.83 L801.8,320.04 L802.8,319.13 L803.8,318.11 L804.8,317.00 L805.8,315.80 L806.8,314.52 L807.8,313.19 L808.8,311.79 L809.8,310.32 L810.8,308.80 L811.8,307.21 L812.8,305.55 L813.8,303.83 L814.8,302.04 L815.8,300.19 L816.8,298.26 L817.8,296.28 L818.8,294.29 L819.8,292.32 L820.8,290.42 L821.8,288.66 L822.8,287.06 L823.8,285.66 L824.8,284.47 L825.8,283.46 L826.8,282.62 L827.8,281.93 L828.8,281.37 L829.8,280.93 L830.8,280.60 L831.8,280.36 L832.8,280.21 L833.8,280.13 L834.8,280.12 L835.8,280.18 L836.8,280.29 L837.8,280.44 L838.8,280.63 L839.8,280.85 L840.8,281.11 L841.8,281.43 L842.8,281.84 L843.8,282.38 L844.8,283.08 L845.8,283.96 L846.8,284.98 L847.8,286.10 L848.8,287.25 L849.8,288.38 L850.8,289.44 L851.8,290.43 L852.8,291.36 L853.8,292.25 L854.8,293.12 L855.8,293.99 L856.8,294.88 L857.8,295.80 L858.8,296.78 L859.8,297.84 L860.8,298.98 L861.8,300.20 L862.8,301.49 L863.8,302.84 L864.8,304.23 L865.8,305.64 L866.8,307.07 L867.8,308.49 L868.8,309.89 L869.8,311.26 L870.8,312.61 L871.8,313.92 L872.8,315.20 L873.8,316.46 L874.8,317.69 L875.8,318.89 L876.8,320.07 L877.8,321.22 L878.8,322.35 L879.8,323.46 L880.8,324.54 L881.8,325.61 L882.8,326.65 L883.8,327.68 L884.8,328.69 L885.8,329.68 L886.8,330.65 L887.8,331.61 L888.8,332.55 L889.8,333.48 L890.8,334.41 L891.8,335.31 L892.8,336.22 L893.8,337.11 L894.8,337.99 L895.8,338.88 L896.8,339.75 L897.8,340.62 L898.8,341.50 L899.8,342.37 L900.8,343.24 L901.8,344.11 L902.8,344.98 L903.8,345.86 L904.8,346.74 L905.8,347.63 L906.8,348.51 L907.8,349.39 L908.8,350.27 L909.8,351.13 L910.8,351.97 L911.8,352.80 L912.8,353.61 L913.8,354.39 L914.8,355.14 L915.8,355.86 L916.8,356.55 L917.8,357.22 L918.8,357.85 L919.8,358.46 L920.8,359.05 L921.8,359.61 L922.8,360.16 L923.8,360.68 L924.8,361.19 L925.8,361.68 L926.8,362.16 L927.8,362.62 L928.8,363.07 L929.8,363.51 L930.8,363.95 L931.8,364.38 L932.8,364.80 L933.8,365.22 L934.8,365.63 L935.8,366.04 L936.8,366.44 L937.8,366.84 L938.8,367.23 L939.8,367.61 L940.8,367.99 L941.8,368.37 L942.8,368.74 L943.8,369.11 L944.8,369.47 L945.8,369.82 L946.8,370.18 L947.8,370.52 L948.8,370.86 L949.8,371.20 L950.8,371.53 L951.8,371.86 L952.8,372.18 L953.8,372.50 L954.8,372.82 L955.8,373.13 L956.8,373.43 L957.8,373.74 L958.8,374.03 L959.8,374.33 L960.8,374.62 L961.8,374.90 L962.8,375.18 L963.8,375.46 L964.8,375.73 L965.8,376.00 L966.8,376.27 L967.8,376.53 L968.8,376.79 L969.8,377.04 L970.8,377.29 L971.8,377.54 L972.8,377.78 L973.8,378.03 L974.8,378.26 L975.8,378.50 L976.8,378.73 L977.8,378.95 L978.8,379.18 L979.8,379.40 L980.8,379.62 L981.8,379.83 L982.8,380.04 L983.8,380.25 L984.8,380.45 L985.8,380.66 L986.8,380.86 L987.8,381.05 L988.8,381.25 L989.8,381.44 L990.8,381.63 L991.8,381.82 L992.8,382.01 L993.8,382.20 L994.8,382.39 L995.8,382.59 L996.8,382.79 L997.8,383.00 L998.8,383.23 L999.8,383.46 L1000.8,383.71 L1001.8,383.97 L1002.8,384.25 L1003.8,384.54 L1004.8,384.85 L1005.8,385.19 L1006.8,385.54 L1007.8,385.92 L1008.8,386.33 L1009.8,386.76 L1010.8,387.22 L1011.8,387.71 L1012.8,388.24 L1013.8,388.79 L1014.8,389.38 L1015.8,390.01 L1016.8,390.68 L1017.8,391.38 L1018.8,392.11 L1019.8,392.86 L1020.8,393.63 L1021.8,394.41 L1022.8,395.19 L1023.8,395.97 L1024.8,396.76 L1025.8,397.55 L1026.8,398.34 L1027.8,399.14 L1028.8,399.96 L1029.8,400.79 L1030.8,401.64 L1031.8,402.50 L1032.8,403.39 L1033.8,404.30 L1034.8,405.25 L1035.8,406.24 L1036.8,407.29 L1037.8,408.42 L1038.8,409.64 L1039.8,410.95 L1040.8,412.38 L1041.8,413.93 L1042.8,415.60 L1043.8,417.37 L1044.8,419.23 L1045.8,421.20 L1046.8,423.24 L1047.8,425.37 L1048.8,427.58 L1049.8,429.85 L1050.8,432.18 L1051.8,434.57 L1052.8,437.00 L1053.8,439.48 L1054.8,442.00 L1055.8,444.54 L1056.8,447.11 L1057.8,449.70 L1058.8,452.29 L1059.8,454.89 L1060.8,457.49 L1061.8,460.08 L1062.8,462.66 L1063.8,465.27 L1064.8,467.92 L1065.8,470.66 L1066.8,473.52 L1067.8,476.52 L1068.8,479.70 L1069.8,483.09 L1070.8,486.72 L1071.8,490.63 L1072.2,492.27" fill="none" stroke="#ff0000" stroke-width="3" stroke-linejoin="round" shape-rendering="crispEdges" clip-path="url(#pc)"/>
<path d="M58.5,118.47 L59.5,118.47 L60.5,118.47 L61.5,118.47 L62.5,118.47 L63.5,118.47 L64.5,118.47 L65.5,118.48 L66.5,118.48 L67.5,118.48 L68.5,118.48 L69.5,118.48 L70.5,118.48 L71.5,118.48 L72.5,118.48 L73.5,118.48 L74.5,118.48 L75.5,118.49 L76.5,118.49 L77.5,118.49 L78.5,118.49 L79.5,118.49 L80.5,118.49 L81.5,118.49 L82.5,118.49 L83.5,118.49 L84.5,118.49 L85.5,118.49 L86.5,118.50 L87.5,118.50 L88.5,118.50 L89.5,118.50 L90.5,118.50 L91.5,118.50 L92.5,118.50 L93.5,118.50 L94.5,118.50 L95.5,118.50 L96.5,118.50 L97.5,118.50 L98.5,118.50 L99.5,118.50 L100.5,118.51 L101.5,118.51 L102.5,118.51 L103.5,118.51 L104.5,118.51 L105.5,118.51 L106.5,118.51 L107.5,118.51 L108.5,118.51 L109.5,118.51 L110.5,118.51 L111.5,118.51 L112.5,118.51 L113.5,118.51 L114.5,118.51 L115.5,118.51 L116.5,118.51 L117.5,118.51 L118.5,118.51 L119.5,118.52 L120.5,118.52 L121.5,118.52 L122.5,118.52 L123.5,118.52 L124.5,118.52 L125.5,118.52 L126.5,118.52 L127.5,118.52 L128.5,118.52 L129.5,118.52 L130.5,118.52 L131.5,118.52 L132.5,118.52 L133.5,118.52 L134.5,118.52 L135.5,118.52 L136.5,118.52 L137.5,118.52 L138.5,118.52 L139.5,118.52 L140.5,118.52 L141.5,118.52 L142.5,118.52 L143.5,118.52 L144.5,118.52 L145.5,118.52 L146.5,118.52 L147.5,118.52 L148.5,118.52 L149.5,118.52 L150.5,118.52 L151.5,118.52 L152.5,118.52 L153.5,118.52 L154.5,118.52 L155.5,118.52 L156.5,118.52 L157.5,118.52 L158.5,118.52 L159.5,118.52 L160.5,118.52 L161.5,118.52 L162.5,118.52 L163.5,118.52 L164.5,118.52 L165.5,118.52 L166.5,118.52 L167.5,118.52 L168.5,118.52 L169.5,118.52 L170.5,118.52 L171.5,118.52 L172.5,118.52 L173.5,118.52 L174.5,118.52 L175.5,118.52 L176.5,118.52 L177.5,118.52 L178.5,118.52 L179.5,118.52 L180.5,118.52 L181.5,118.52 L182.5,118.52 L183.5,118.52 L184.5,118.52 L185.5,118.52 L186.5,118.52 L187.5,118.52 L188.5,118.52 L189.5,118.52 L190.5,118.52 L191.5,118.52 L192.5,118.52 L193.5,118.52 L194.5,118.52 L195.5,118.52 L196.5,118.52 L197.5,118.52 L198.5,118.52 L199.5,118.52 L200.5,118.52 L201.5,118.52 L202.5,118.52 L203.5,118.52 L204.5,118.52 L205.5,118.52 L206.5,118.52 L207.5,118.52 L208.5,118.52 L209.5,118.51 L210.5,118.51 L211.5,118.51 L212.5,118.51 L213.5,118.51 L214.5,118.51 L215.5,118.51 L216.5,118.51 L217.5,118.51 L218.5,118.51 L219.5,118.51 L220.5,118.51 L221.5,118.51 L222.5,118.51 L223.5,118.51 L224.5,118.51 L225.5,118.51 L226.5,118.51 L227.5,118.51 L228.5,118.51 L229.5,118.51 L230.5,118.51 L231.5,118.51 L232.5,118.51 L233.5,118.51 L234.5,118.51 L235.5,118.51 L236.5,118.51 L237.5,118.51 L238.5,118.50 L239.5,118.50 L240.5,118.50 L241.5,118.50 L242.5,118.50 L243.5,118.50 L244.5,118.50 L245.5,118.50 L246.5,118.50 L247.5,118.50 L248.5,118.50 L249.5,118.50 L250.5,118.50 L251.5,118.50 L252.5,118.50 L253.5,118.50 L254.5,118.50 L255.5,118.50 L256.5,118.50 L257.5,118.50 L258.5,118.50 L259.5,118.50 L260.5,118.50 L261.5,118.50 L262.5,118.50 L263.5,118.49 L264.5,118.49 L265.5,118.49 L266.5,118.49 L267.5,118.49 L268.5,118.49 L269.5,118.49 L270.5,118.49 L271.5,118.49 L272.5,118.49 L273.5,118.49 L274.5,118.49 L275.5,118.49 L276.5,118.49 L277.5,118.49 L278.5,118.49 L279.5,118.49 L280.5,118.49 L281.5,118.49 L282.5,118.49 L283.5,118.49 L284.5,118.49 L285.5,118.49 L286.5,118.49 L287.5,118.48 L288.5,118.48 L289.5,118.48 L290.5,118.48 L291.5,118.48 L292.5,118.48 L293.5,118.48 L294.5,118.48 L295.5,118.48 L296.5,118.48 L297.5,118.48 L298.5,118.48 L299.5,118.48 L300.5,118.48 L301.5,118.48 L302.5,118.48 L303.5,118.48 L304.5,118.48 L305.5,118.48 L306.5,118.48 L307.5,118.48 L308.5,118.48 L309.5,118.48 L310.5,118.48 L311.5,118.48 L312.5,118.48 L313.5,118.48 L314.5,118.48 L315.5,118.48 L316.5,118.47 L317.5,118.47 L318.5,118.47 L319.5,118.47 L320.5,118.47 L321.5,118.47 L322.5,118.47 L323.5,118.47 L324.5,118.47 L325.5,118.47 L326.5,118.47 L327.5,118.47 L328.5,118.47 L329.5,118.47 L330.5,118.47 L331.5,118.47 L332.5,118.47 L333.5,118.47 L334.5,118.47 L335.5,118.47 L336.5,118.47 L337.5,118.47 L338.5,118.47 L339.5,118.47 L340.5,118.47 L341.5,118.47 L342.5,118.47 L343.5,118.47 L344.5,118.47 L345.5,118.47 L346.5,118.47 L347.5,118.47 L348.5,118.47 L349.5,118.47 L350.5,118.47 L351.5,118.47 L352.5,118.47 L353.5,118.47 L354.5,118.47 L355.5,118.47 L356.5,118.47 L357.5,118.47 L358.5,118.47 L359.5,118.47 L360.5,118.47 L361.5,118.47 L362.5,118.47 L363.5,118.47 L364.5,118.47 L365.5,118.47 L366.5,118.47 L367.5,118.47 L368.5,118.47 L369.5,118.47 L370.5,118.47 L371.5,118.47 L372.5,118.47 L373.5,118.47 L374.5,118.47 L375.5,118.47 L376.5,118.47 L377.5,118.47 L378.5,118.47 L379.5,118.47 L380.5,118.47 L381.5,118.47 L382.5,118.47 L383.5,118.47 L384.5,118.47 L385.5,118.47 L386.5,118.47 L387.5,118.47 L388.5,118.47 L389.5,118.47 L390.5,118.47 L391.5,118.47 L392.5,118.47 L393.5,118.47 L394.5,118.47 L395.5,118.47 L396.5,118.47 L397.5,118.47 L398.5,118.47 L399.5,118.47 L400.5,118.47 L401.5,118.47 L402.5,118.47 L403.5,118.47 L404.5,118.47 L405.5,118.47 L406.5,118.47 L407.5,118.47 L408.5,118.47 L409.5,118.48 L410.5,118.48 L411.5,118.48 L412.5,118.48 L413.5,118.48 L414.5,118.48 L415.5,118.48 L416.5,118.48 L417.5,118.48 L418.5,118.48 L419.5,118.48 L420.5,118.48 L421.5,118.48 L422.5,118.48 L423.5,118.48 L424.5,118.48 L425.5,118.48 L426.5,118.48 L427.5,118.48 L428.5,118.49 L429.5,118.49 L430.5,118.49 L431.5,118.49 L432.5,118.49 L433.5,118.49 L434.5,118.49 L435.5,118.49 L436.5,118.49 L437.5,118.49 L438.5,118.49 L439.5,118.49 L440.5,118.49 L441.5,118.49 L442.5,118.50 L443.5,118.50 L444.5,118.50 L445.5,118.50 L446.5,118.50 L447.5,118.50 L448.5,118.50 L449.5,118.50 L450.5,118.50 L451.5,118.50 L452.5,118.50 L453.5,118.51 L454.5,118.51 L455.5,118.51 L456.5,118.51 L457.5,118.51 L458.5,118.51 L459.5,118.51 L460.5,118.51 L461.5,118.51 L462.5,118.51 L463.5,118.51 L464.5,118.52 L465.5,118.52 L466.5,118.52 L467.5,118.52 L468.5,118.52 L469.5,118.52 L470.5,118.52 L471.5,118.52 L472.5,118.52 L473.5,118.52 L474.5,118.53 L475.5,118.53 L476.5,118.53 L477.5,118.53 L478.5,118.53 L479.5,118.53 L480.5,118.53 L481.5,118.53 L482.5,118.53 L483.5,118.53 L484.5,118.53 L485.5,118.54 L486.5,118.54 L487.5,118.54 L488.5,118.54 L489.5,118.54 L490.5,118.54 L491.5,118.54 L492.5,118.54 L493.5,118.54 L494.5,118.54 L495.5,118.54 L496.5,118.55 L497.5,118.55 L498.5,118.55 L499.5,118.55 L500.5,118.55 L501.5,118.55 L502.5,118.55 L503.5,118.55 L504.5,118.55 L505.5,118.55 L506.5,118.55 L507.5,118.55 L508.5,118.55 L509.5,118.56 L510.5,118.56 L511.5,118.56 L512.5,118.56 L513.5,118.56 L514.5,118.56 L515.5,118.56 L516.5,118.56 L517.5,118.56 L518.5,118.56 L519.5,118.56 L520.5,118.56 L521.5,118.56 L522.5,118.56 L523.5,118.56 L524.5,118.56 L525.5,118.56 L526.5,118.56 L527.5,118.57 L528.5,118.57 L529.5,118.57 L530.5,118.57 L531.5,118.57 L532.5,118.57 L533.5,118.57 L534.5,118.57 L535.5,118.57 L536.5,118.57 L537.5,118.57 L538.5,118.57 L539.5,118.57 L540.5,118.57 L541.5,118.57 L542.5,118.57 L543.5,118.57 L544.5,118.57 L545.5,118.57 L546.5,118.57 L547.5,118.57 L548.5,118.57 L549.5,118.57 L550.5,118.57 L551.5,118.57 L552.5,118.57 L553.5,118.57 L554.5,118.57 L555.5,118.57 L556.5,118.57 L557.5,118.57 L558.5,118.57 L559.5,118.57 L560.5,118.57 L561.5,118.56 L562.5,118.56 L563.5,118.56 L564.5,118.56 L565.5,118.56 L566.5,118.56 L567.5,118.56 L568.5,118.56 L569.5,118.56 L570.5,118.56 L571.5,118.56 L572.5,118.56 L573.5,118.56 L574.5,118.56 L575.5,118.55 L576.5,118.55 L577.5,118.55 L578.5,118.55 L579.5,118.55 L580.5,118.55 L581.5,118.55 L582.5,118.55 L583.5,118.55 L584.5,118.54 L585.5,118.54 L586.5,118.54 L587.5,118.54 L588.5,118.54 L589.5,118.54 L590.5,118.54 L591.5,118.53 L592.5,118.53 L593.5,118.53 L594.5,118.53 L595.5,118.53 L596.5,118.53 L597.5,118.52 L598.5,118.52 L599.5,118.52 L600.5,118.52 L601.5,118.52 L602.5,118.51 L603.5,118.51 L604.5,118.51 L605.5,118.51 L606.5,118.51 L607.5,118.50 L608.5,118.50 L609.5,118.50 L610.5,118.50 L611.5,118.49 L612.5,118.49 L613.5,118.49 L614.5,118.49 L615.5,118.48 L616.5,118.48 L617.5,118.48 L618.5,118.48 L619.5,118.47 L620.5,118.47 L621.5,118.47 L622.5,118.46 L623.5,118.46 L624.5,118.46 L625.5,118.45 L626.5,118.45 L627.5,118.45 L628.5,118.44 L629.5,118.44 L630.5,118.44 L631.5,118.44 L632.5,118.43 L633.5,118.43 L634.5,118.43 L635.5,118.42 L636.5,118.42 L637.5,118.42 L638.5,118.41 L639.5,118.41 L640.5,118.41 L641.5,118.41 L642.5,118.40 L643.5,118.40 L644.5,118.40 L645.5,118.40 L646.5,118.39 L647.5,118.39 L648.5,118.39 L649.5,118.39 L650.5,118.39 L651.5,118.38 L652.5,118.38 L653.5,118.38 L654.5,118.38 L655.5,118.38 L656.5,118.38 L657.5,118.38 L658.5,118.38 L659.5,118.38 L660.5,118.38 L661.5,118.38 L662.5,118.38 L663.5,118.38 L664.5,118.38 L665.5,118.38 L666.5,118.38 L667.5,118.38 L668.5,118.39 L669.5,118.39 L670.5,118.39 L671.5,118.39 L672.5,118.40 L673.5,118.40 L674.5,118.41 L675.5,118.41 L676.5,118.41 L677.5,118.42 L678.5,118.42 L679.5,118.43 L680.5,118.44 L681.5,118.44 L682.5,118.45 L683.5,118.46 L684.5,118.46 L685.5,118.47 L686.5,118.48 L687.5,118.49 L688.5,118.50 L689.5,118.51 L690.5,118.52 L691.5,118.53 L692.5,118.54 L693.5,118.55 L694.5,118.56 L695.5,118.57 L696.5,118.58 L697.5,118.60 L698.5,118.61 L699.5,118.62 L700.5,118.64 L701.5,118.65 L702.5,118.67 L703.5,118.69 L704.5,118.70 L705.5,118.72 L706.5,118.74 L707.5,118.75 L708.5,118.77 L709.5,118.79 L710.5,118.81 L711.5,118.83 L712.5,118.85 L713.5,118.88 L714.5,118.90 L715.5,118.92 L716.5,118.94 L717.5,118.97 L718.5,118.99 L719.5,119.02 L720.5,119.04 L721.5,119.07 L722.5,119.10 L723.5,119.13 L724.5,119.16 L725.5,119.18 L726.5,119.21 L727.5,119.25 L728.5,119.28 L729.5,119.31 L730.5,119.34 L731.5,119.38 L732.5,119.41 L733.5,119.44 L734.5,119.48 L735.5,119.52 L736.5,119.55 L737.5,119.59 L738.5,119.63 L739.5,119.67 L740.5,119.71 L741.5,119.75 L742.5,119.79 L743.5,119.84 L744.5,119.88 L745.5,119.92 L746.5,119.97 L747.5,120.02 L748.5,120.06 L749.5,120.11 L750.5,120.16 L751.5,120.21 L752.5,120.26 L753.5,120.31 L754.5,120.36 L755.5,120.41 L756.5,120.47 L757.5,120.52 L758.5,120.58 L759.5,120.64 L760.5,120.69 L761.5,120.75 L762.5,120.81 L763.5,120.87 L764.5,120.93 L765.5,120.99 L766.5,121.06 L767.5,121.12 L768.5,121.19 L769.5,121.25 L770.5,121.32 L771.5,121.39 L772.5,121.46 L773.5,121.53 L774.5,121.60 L775.5,121.67 L776.5,121.75 L777.5,121.82 L778.5,121.90 L779.5,121.97 L780.5,122.05 L781.5,122.13 L782.5,122.21 L783.5,122.30 L784.5,122.38 L785.5,122.47 L786.5,122.55 L787.5,122.64 L788.5,122.73 L789.5,122.82 L790.5,122.92 L791.5,123.01 L792.5,123.11 L793.5,123.21 L794.5,123.31 L795.5,123.41 L796.5,123.51 L797.5,123.62 L798.5,123.72 L799.5,123.83 L800.5,123.94 L801.5,124.05 L802.5,124.17 L803.5,124.28 L804.5,124.40 L805.5,124.52 L806.5,124.65 L807.5,124.77 L808.5,124.90 L809.5,125.03 L810.5,125.16 L811.5,125.29 L812.5,125.42 L813.5,125.56 L814.5,125.70 L815.5,125.84 L816.5,125.99 L817.5,126.14 L818.5,126.28 L819.5,126.44 L820.5,126.59 L821.5,126.75 L822.5,126.91 L823.5,127.07 L824.5,127.23 L825.5,127.40 L826.5,127.57 L827.5,127.74 L828.5,127.92 L829.5,128.09 L830.5,128.27 L831.5,128.46 L832.5,128.64 L833.5,128.83 L834.5,129.02 L835.5,129.22 L836.5,129.41 L837.5,129.61 L838.5,129.82 L839.5,130.02 L840.5,130.23 L841.5,130.44 L842.5,130.65 L843.5,130.87 L844.5,131.08 L845.5,131.30 L846.5,131.53 L847.5,131.75 L848.5,131.98 L849.5,132.21 L850.5,132.44 L851.5,132.68 L852.5,132.92 L853.5,133.16 L854.5,133.40 L855.5,133.64 L856.5,133.89 L857.5,134.14 L858.5,134.39 L859.5,134.65 L860.5,134.90 L861.5,135.16 L862.5,135.42 L863.5,135.68 L864.5,135.95 L865.5,136.21 L866.5,136.48 L867.5,136.75 L868.5,137.03 L869.5,137.30 L870.5,137.58 L871.5,137.86 L872.5,138.14 L873.5,138.42 L874.5,138.71 L875.5,138.99 L876.5,139.28 L877.5,139.57 L878.5,139.87 L879.5,140.16 L880.5,140.46 L881.5,140.75 L882.5,141.05 L883.5,141.36 L884.5,141.66 L885.5,141.96 L886.5,142.27 L887.5,142.58 L888.5,142.89 L889.5,143.20 L890.5,143.51 L891.5,143.83 L892.5,144.14 L893.5,144.46 L894.5,144.78 L895.5,145.10 L896.5,145.42 L897.5,145.75 L898.5,146.07 L899.5,146.40 L900.5,146.72 L901.5,147.05 L902.5,147.37 L903.5,147.70 L904.5,148.03 L905.5,148.36 L906.5,148.69 L907.5,149.01 L908.5,149.34 L909.5,149.67 L910.5,150.00 L911.5,150.33 L912.5,150.65 L913.5,150.98 L914.5,151.31 L915.5,151.63 L916.5,151.95 L917.5,152.28 L918.5,152.60 L919.5,152.92 L920.5,153.24 L921.5,153.56 L922.5,153.87 L923.5,154.19 L924.5,154.50 L925.5,154.81 L926.5,155.12 L927.5,155.43 L928.5,155.73 L929.5,156.04 L930.5,156.34 L931.5,156.63 L932.5,156.93 L933.5,157.22 L934.5,157.51 L935.5,157.80 L936.5,158.09 L937.5,158.37 L938.5,158.65 L939.5,158.93 L940.5,159.21 L941.5,159.49 L942.5,159.77 L943.5,160.04 L944.5,160.32 L945.5,160.59 L946.5,160.87 L947.5,161.14 L948.5,161.41 L949.5,161.69 L950.5,161.96 L951.5,162.23 L952.5,162.51 L953.5,162.78 L954.5,163.06 L955.5,163.33 L956.5,163.61 L957.5,163.89 L958.5,164.17 L959.5,164.45 L960.5,164.74 L961.5,165.02 L962.5,165.31 L963.5,165.60 L964.5,165.89 L965.5,166.18 L966.5,166.47 L967.5,166.76 L968.5,167.06 L969.5,167.35 L970.5,167.64 L971.5,167.94 L972.5,168.24 L973.5,168.53 L974.5,168.83 L975.5,169.12 L976.5,169.42 L977.5,169.71 L978.5,170.01 L979.5,170.30 L980.5,170.59 L981.5,170.89 L982.5,171.18 L983.5,171.47 L984.5,171.76 L985.5,172.04 L986.5,172.33 L987.5,172.61 L988.5,172.90 L989.5,173.18 L990.5,173.46 L991.5,173.73 L992.5,174.00 L993.5,174.28 L994.5,174.54 L995.5,174.81 L996.5,175.07 L997.5,175.33 L998.5,175.59 L999.5,175.84 L1000.5,176.09 L1001.5,176.34 L1002.5,176.58 L1003.5,176.82 L1004.5,177.06 L1005.5,177.29 L1006.5,177.52 L1007.5,177.74 L1008.5,177.97 L1009.5,178.19 L1010.5,178.40 L1011.5,178.61 L1012.5,178.82 L1013.5,179.02 L1014.5,179.23 L1015.5,179.42 L1016.5,179.62 L1017.5,179.81 L1018.5,179.99 L1019.5,180.18 L1020.5,180.36 L1021.5,180.54 L1022.5,180.71 L1023.5,180.88 L1024.5,181.04 L1025.5,181.21 L1026.5,181.37 L1027.5,181.52 L1028.5,181.67 L1029.5,181.82 L1030.5,181.97 L1031.5,182.11 L1032.5,182.25 L1033.5,182.38 L1034.5,182.51 L1035.5,182.64 L1036.5,182.76 L1037.5,182.88 L1038.5,183.00 L1039.5,183.11 L1040.5,183.22 L1041.5,183.33 L1042.5,183.43 L1043.5,183.53 L1044.5,183.63 L1045.5,183.72 L1046.5,183.81 L1047.5,183.90 L1048.5,183.98 L1049.5,184.05 L1050.5,184.13 L1051.5,184.20 L1052.5,184.27 L1053.5,184.33 L1054.5,184.39 L1055.5,184.45 L1056.5,184.50 L1057.5,184.55 L1058.5,184.60 L1059.5,184.65 L1060.5,184.69 L1061.5,184.74 L1062.5,184.78 L1063.5,184.83 L1064.5,184.89 L1065.5,184.95 L1066.5,185.01 L1067.5,185.09 L1068.5,185.17 L1069.5,185.26 L1070.5,185.36 L1071.5,185.48 L1072.5,185.61 L1073.5,185.75 L1074.5,185.91 L1075.5,186.08 L1076.5,186.27 L1077.5,186.49 L1078.5,186.72 L1079.5,186.97 L1080.5,187.25 L1081.5,187.55 L1082.5,187.87 L1083.5,188.22 L1084.5,188.59 L1085.5,188.99 L1086.5,189.41 L1087.5,189.85 L1088.5,190.32 L1089.5,190.81 L1090.5,191.32 L1091.5,191.85 L1092.5,192.41 L1093.5,192.98 L1094.5,193.57 L1095.5,194.17 L1096.5,194.79 L1097.5,195.43 L1098.5,196.07 L1099.5,196.73 L1100.5,197.40 L1101.5,198.08 L1102.5,198.76 L1103.5,199.45 L1104.5,200.14 L1105.5,200.84 L1106.5,201.54 L1107.5,202.24 L1108.5,202.94 L1109.5,203.64 L1110.5,204.33 L1111.5,205.03 L1112.5,205.72 L1113.5,206.40 L1114.5,207.09 L1115.5,207.77 L1116.5,208.45 L1117.5,209.13 L1118.5,209.81 L1119.5,210.48 L1120.5,211.15 L1121.5,211.82 L1122.5,212.48 L1123.5,213.15 L1124.5,213.81 L1125.5,214.47 L1126.5,215.13 L1127.5,215.78 L1128.5,216.44 L1129.5,217.09 L1130.5,217.74 L1131.5,218.39 L1132.5,219.04 L1133.5,219.68 L1134.5,220.33 L1135.5,220.97 L1136.5,221.61 L1137.5,222.25 L1138.5,222.89 L1139.5,223.52 L1140.5,224.16 L1141.5,224.79 L1142.5,225.42 L1143.5,226.05 L1144.5,226.68 L1145.5,227.31 L1146.5,227.94 L1147.5,228.57 L1148.5,229.19 L1149.5,229.82 L1150.5,230.44 L1151.5,231.07 L1152.5,231.69 L1153.5,232.31 L1154.5,232.93 L1155.5,233.55 L1156.5,234.17 L1157.5,234.79 L1158.5,235.41 L1159.5,236.03 L1160.5,236.65 L1161.5,237.27 L1162.5,237.88 L1163.5,238.50 L1164.5,239.12 L1165.5,239.73 L1166.5,240.35 L1167.5,240.97 L1168.5,241.58 L1169.5,242.20 L1170.5,242.82 L1171.5,243.44 L1172.5,244.05 L1173.5,244.67 L1174.5,245.29 L1175.5,245.91 L1176.5,246.52 L1177.5,247.14 L1178.5,247.76 L1179.5,248.38 L1180.5,249.00 L1181.5,249.62 L1182.5,250.24 L1183.5,250.87 L1184.5,251.49 L1185.5,252.11 L1186.5,252.74 L1187.5,253.36 L1188.5,253.99 L1189.5,254.62 L1190.5,255.24 L1191.5,255.87 L1192.5,256.50 L1193.5,257.14 L1194.5,257.77 L1195.5,258.40 L1196.5,259.04 L1197.5,259.67 L1198.5,260.31 L1199.5,260.95 L1200.5,261.59 L1201.5,262.24 L1202.5,262.88 L1203.5,263.53 L1204.5,264.17 L1205.5,264.82 L1206.5,265.48 L1207.5,266.13 L1208.5,266.78 L1209.5,267.44 L1210.5,268.10 L1211.5,268.76 L1212.5,269.42 L1213.5,270.09 L1214.5,270.75 L1215.5,271.42 L1216.5,272.09 L1217.5,272.77 L1218.5,273.44 L1219.5,274.12 L1220.5,274.80 L1221.5,275.49 L1222.5,276.17 L1223.5,276.86 L1224.5,277.55 L1225.5,278.25 L1226.3,278.80" fill="none" stroke="#ff0000" stroke-width="3" stroke-linejoin="round" shape-rendering="crispEdges" clip-path="url(#pc)"/>
<path d="M58.5,118.47 L59.5,118.48 L60.5,118.48 L61.5,118.48 L62.5,118.48 L63.5,118.48 L64.5,118.49 L65.5,118.49 L66.5,118.49 L67.5,118.49 L68.5,118.49 L69.5,118.49 L70.5,118.49 L71.5,118.50 L72.5,118.50 L73.5,118.50 L74.5,118.50 L75.5,118.50 L76.5,118.50 L77.5,118.50 L78.5,118.50 L79.5,118.51 L80.5,118.51 L81.5,118.51 L82.5,118.51 L83.5,118.51 L84.5,118.51 L85.5,118.51 L86.5,118.51 L87.5,118.51 L88.5,118.51 L89.5,118.52 L90.5,118.52 L91.5,118.52 L92.5,118.52 L93.5,118.52 L94.5,118.52 L95.5,118.52 L96.5,118.52 L97.5,118.52 L98.5,118.52 L99.5,118.52 L100.5,118.52 L101.5,118.52 L102.5,118.52 L103.5,118.52 L104.5,118.52 L105.5,118.52 L106.5,118.52 L107.5,118.52 L108.5,118.52 L109.5,118.52 L110.5,118.52 L111.5,118.52 L112.5,118.52 L113.5,118.52 L114.5,118.52 L115.5,118.52 L116.5,118.52 L117.5,118.52 L118.5,118.52 L119.5,118.52 L120.5,118.52 L121.5,118.52 L122.5,118.52 L123.5,118.52 L124.5,118.52 L125.5,118.52 L126.5,118.52 L127.5,118.52 L128.5,118.52 L129.5,118.52 L130.5,118.52 L131.5,118.52 L132.5,118.52 L133.5,118.52 L134.5,118.52 L135.5,118.52 L136.5,118.52 L137.5,118.52 L138.5,118.52 L139.5,118.52 L140.5,118.52 L141.5,118.52 L142.5,118.52 L143.5,118.52 L144.5,118.52 L145.5,118.52 L146.5,118.52 L147.5,118.51 L148.5,118.51 L149.5,118.51 L150.5,118.51 L151.5,118.51 L152.5,118.51 L153.5,118.51 L154.5,118.51 L155.5,118.51 L156.5,118.51 L157.5,118.51 L158.5,118.51 L159.5,118.51 L160.5,118.51 L161.5,118.51 L162.5,118.51 L163.5,118.50 L164.5,118.50 L165.5,118.50 L166.5,118.50 L167.5,118.50 L168.5,118.50 L169.5,118.50 L170.5,118.50 L171.5,118.50 L172.5,118.50 L173.5,118.50 L174.5,118.50 L175.5,118.50 L176.5,118.50 L177.5,118.49 L178.5,118.49 L179.5,118.49 L180.5,118.49 L181.5,118.49 L182.5,118.49 L183.5,118.49 L184.5,118.49 L185.5,118.49 L186.5,118.49 L187.5,118.49 L188.5,118.49 L189.5,118.49 L190.5,118.49 L191.5,118.48 L192.5,118.48 L193.5,118.48 L194.5,118.48 L195.5,118.48 L196.5,118.48 L197.5,118.48 L198.5,118.48 L199.5,118.48 L200.5,118.48 L201.5,118.48 L202.5,118.48 L203.5,118.48 L204.5,118.48 L205.5,118.48 L206.5,118.48 L207.5,118.47 L208.5,118.47 L209.5,118.47 L210.5,118.47 L211.5,118.47 L212.5,118.47 L213.5,118.47 L214.5,118.47 L215.5,118.47 L216.5,118.47 L217.5,118.47 L218.5,118.47 L219.5,118.47 L220.5,118.47 L221.5,118.47 L222.5,118.47 L223.5,118.47 L224.5,118.47 L225.5,118.47 L226.5,118.47 L227.5,118.47 L228.5,118.47 L229.5,118.47 L230.5,118.47 L231.5,118.47 L232.5,118.47 L233.5,118.46 L234.5,118.46 L235.5,118.46 L236.5,118.46 L237.5,118.46 L238.5,118.46 L239.5,118.46 L240.5,118.46 L241.5,118.46 L242.5,118.46 L243.5,118.46 L244.5,118.46 L245.5,118.46 L246.5,118.47 L247.5,118.47 L248.5,118.47 L249.5,118.47 L250.5,118.47 L251.5,118.47 L252.5,118.47 L253.5,118.47 L254.5,118.47 L255.5,118.47 L256.5,118.47 L257.5,118.47 L258.5,118.47 L259.5,118.47 L260.5,118.47 L261.5,118.47 L262.5,118.47 L263.5,118.47 L264.5,118.47 L265.5,118.47 L266.5,118.47 L267.5,118.47 L268.5,118.47 L269.5,118.47 L270.5,118.48 L271.5,118.48 L272.5,118.48 L273.5,118.48 L274.5,118.48 L275.5,118.48 L276.5,118.48 L277.5,118.48 L278.5,118.48 L279.5,118.48 L280.5,118.48 L281.5,118.48 L282.5,118.48 L283.5,118.49 L284.5,118.49 L285.5,118.49 L286.5,118.49 L287.5,118.49 L288.5,118.49 L289.5,118.49 L290.5,118.49 L291.5,118.49 L292.5,118.49 L293.5,118.49 L294.5,118.50 L295.5,118.50 L296.5,118.50 L297.5,118.50 L298.5,118.50 L299.5,118.50 L300.5,118.50 L301.5,118.50 L302.5,118.50 L303.5,118.51 L304.5,118.51 L305.5,118.51 L306.5,118.51 L307.5,118.51 L308.5,118.51 L309.5,118.51 L310.5,118.51 L311.5,118.51 L312.5,118.52 L313.5,118.52 L314.5,118.52 L315.5,118.52 L316.5,118.52 L317.5,118.52 L318.5,118.52 L319.5,118.52 L320.5,118.52 L321.5,118.53 L322.5,118.53 L323.5,118.53 L324.5,118.53 L325.5,118.53 L326.5,118.53 L327.5,118.53 L328.5,118.53 L329.5,118.54 L330.5,118.54 L331.5,118.54 L332.5,118.54 L333.5,118.54 L334.5,118.54 L335.5,118.54 L336.5,118.54 L337.5,118.55 L338.5,118.55 L339.5,118.55 L340.5,118.55 L341.5,118.55 L342.5,118.55 L343.5,118.55 L344.5,118.55 L345.5,118.55 L346.5,118.56 L347.5,118.56 L348.5,118.56 L349.5,118.56 L350.5,118.56 L351.5,118.56 L352.5,118.56 L353.5,118.56 L354.5,118.57 L355.5,118.57 L356.5,118.57 L357.5,118.57 L358.5,118.57 L359.5,118.57 L360.5,118.57 L361.5,118.57 L362.5,118.57 L363.5,118.57 L364.5,118.58 L365.5,118.58 L366.5,118.58 L367.5,118.58 L368.5,118.58 L369.5,118.58 L370.5,118.58 L371.5,118.58 L372.5,118.58 L373.5,118.58 L374.5,118.59 L375.5,118.59 L376.5,118.59 L377.5,118.59 L378.5,118.59 L379.5,118.59 L380.5,118.59 L381.5,118.59 L382.5,118.59 L383.5,118.59 L384.5,118.59 L385.5,118.60 L386.5,118.60 L387.5,118.60 L388.5,118.60 L389.5,118.60 L390.5,118.60 L391.5,118.60 L392.5,118.60 L393.5,118.60 L394.5,118.60 L395.5,118.60 L396.5,118.60 L397.5,118.60 L398.5,118.60 L399.5,118.60 L400.5,118.60 L401.5,118.61 L402.5,118.61 L403.5,118.61 L404.5,118.61 L405.5,118.61 L406.5,118.61 L407.5,118.61 L408.5,118.61 L409.5,118.61 L410.5,118.61 L411.5,118.61 L412.5,118.61 L413.5,118.61 L414.5,118.61 L415.5,118.61 L416.5,118.61 L417.5,118.61 L418.5,118.61 L419.5,118.61 L420.5,118.61 L421.5,118.61 L422.5,118.61 L423.5,118.61 L424.5,118.61 L425.5,118.61 L426.5,118.61 L427.5,118.61 L428.5,118.61 L429.5,118.61 L430.5,118.61 L431.5,118.61 L432.5,118.61 L433.5,118.61 L434.5,118.61 L435.5,118.61 L436.5,118.61 L437.5,118.61 L438.5,118.61 L439.5,118.61 L440.5,118.61 L441.5,118.61 L442.5,118.60 L443.5,118.60 L444.5,118.60 L445.5,118.60 L446.5,118.60 L447.5,118.60 L448.5,118.60 L449.5,118.60 L450.5,118.60 L451.5,118.60 L452.5,118.60 L453.5,118.60 L454.5,118.60 L455.5,118.60 L456.5,118.60 L457.5,118.59 L458.5,118.59 L459.5,118.59 L460.5,118.59 L461.5,118.59 L462.5,118.59 L463.5,118.59 L464.5,118.59 L465.5,118.59 L466.5,118.59 L467.5,118.59 L468.5,118.58 L469.5,118.58 L470.5,118.58 L471.5,118.58 L472.5,118.58 L473.5,118.58 L474.5,118.58 L475.5,118.58 L476.5,118.58 L477.5,118.58 L478.5,118.58 L479.5,118.57 L480.5,118.57 L481.5,118.57 L482.5,118.57 L483.5,118.57 L484.5,118.57 L485.5,118.57 L486.5,118.57 L487.5,118.57 L488.5,118.57 L489.5,118.57 L490.5,118.56 L491.5,118.56 L492.5,118.56 L493.5,118.56 L494.5,118.56 L495.5,118.56 L496.5,118.56 L497.5,118.56 L498.5,118.56 L499.5,118.56 L500.5,118.56 L501.5,118.55 L502.5,118.55 L503.5,118.55 L504.5,118.55 L505.5,118.55 L506.5,118.55 L507.5,118.55 L508.5,118.55 L509.5,118.55 L510.5,118.55 L511.5,118.55 L512.5,118.55 L513.5,118.55 L514.5,118.55 L515.5,118.55 L516.5,118.55 L517.5,118.55 L518.5,118.54 L519.5,118.54 L520.5,118.54 L521.5,118.54 L522.5,118.54 L523.5,118.54 L524.5,118.54 L525.5,118.54 L526.5,118.54 L527.5,118.54 L528.5,118.54 L529.5,118.54 L530.5,118.54 L531.5,118.54 L532.5,118.54 L533.5,118.54 L534.5,118.54 L535.5,118.54 L536.5,118.54 L537.5,118.54 L538.5,118.54 L539.5,118.54 L540.5,118.54 L541.5,118.54 L542.5,118.54 L543.5,118.54 L544.5,118.54 L545.5,118.55 L546.5,118.55 L547.5,118.55 L548.5,118.55 L549.5,118.55 L550.5,118.55 L551.5,118.55 L552.5,118.55 L553.5,118.55 L554.5,118.55 L555.5,118.55 L556.5,118.55 L557.5,118.56 L558.5,118.56 L559.5,118.56 L560.5,118.56 L561.5,118.56 L562.5,118.56 L563.5,118.56 L564.5,118.56 L565.5,118.57 L566.5,118.57 L567.5,118.57 L568.5,118.57 L569.5,118.57 L570.5,118.57 L571.5,118.58 L572.5,118.58 L573.5,118.58 L574.5,118.58 L575.5,118.58 L576.5,118.59 L577.5,118.59 L578.5,118.59 L579.5,118.59 L580.5,118.60 L581.5,118.60 L582.5,118.60 L583.5,118.60 L584.5,118.61 L585.5,118.61 L586.5,118.61 L587.5,118.61 L588.5,118.62 L589.5,118.62 L590.5,118.62 L591.5,118.63 L592.5,118.63 L593.5,118.63 L594.5,118.64 L595.5,118.64 L596.5,118.64 L597.5,118.65 L598.5,118.65 L599.5,118.66 L600.5,118.66 L601.5,118.66 L602.5,118.67 L603.5,118.67 L604.5,118.68 L605.5,118.68 L606.5,118.68 L607.5,118.69 L608.5,118.69 L609.5,118.70 L610.5,118.70 L611.5,118.71 L612.5,118.71 L613.5,118.72 L614.5,118.72 L615.5,118.73 L616.5,118.73 L617.5,118.74 L618.5,118.74 L619.5,118.75 L620.5,118.76 L621.5,118.76 L622.5,118.77 L623.5,118.77 L624.5,118.78 L625.5,118.78 L626.5,118.79 L627.5,118.80 L628.5,118.80 L629.5,118.81 L630.5,118.82 L631.5,118.82 L632.5,118.83 L633.5,118.84 L634.5,118.84 L635.5,118.85 L636.5,118.86 L637.5,118.87 L638.5,118.87 L639.5,118.88 L640.5,118.89 L641.5,118.90 L642.5,118.90 L643.5,118.91 L644.5,118.92 L645.5,118.93 L646.5,118.94 L647.5,118.95 L648.5,118.96 L649.5,118.96 L650.5,118.97 L651.5,118.98 L652.5,118.99 L653.5,119.00 L654.5,119.01 L655.5,119.02 L656.5,119.03 L657.5,119.04 L658.5,119.05 L659.5,119.06 L660.5,119.07 L661.5,119.08 L662.5,119.09 L663.5,119.10 L664.5,119.11 L665.5,119.13 L666.5,119.14 L667.5,119.15 L668.5,119.16 L669.5,119.17 L670.5,119.18 L671.5,119.20 L672.5,119.21 L673.5,119.22 L674.5,119.23 L675.5,119.25 L676.5,119.26 L677.5,119.27 L678.5,119.29 L679.5,119.30 L680.5,119.31 L681.5,119.33 L682.5,119.34 L683.5,119.36 L684.5,119.37 L685.5,119.39 L686.5,119.40 L687.5,119.42 L688.5,119.43 L689.5,119.45 L690.5,119.46 L691.5,119.48 L692.5,119.49 L693.5,119.51 L694.5,119.53 L695.5,119.54 L696.5,119.56 L697.5,119.58 L698.5,119.59 L699.5,119.61 L700.5,119.63 L701.5,119.65 L702.5,119.67 L703.5,119.68 L704.5,119.70 L705.5,119.72 L706.5,119.74 L707.5,119.76 L708.5,119.78 L709.5,119.80 L710.5,119.82 L711.5,119.84 L712.5,119.86 L713.5,119.88 L714.5,119.91 L715.5,119.93 L716.5,119.96 L717.5,119.98 L718.5,120.01 L719.5,120.04 L720.5,120.08 L721.5,120.11 L722.5,120.15 L723.5,120.19 L724.5,120.23 L725.5,120.27 L726.5,120.32 L727.5,120.37 L728.5,120.43 L729.5,120.48 L730.5,120.55 L731.5,120.61 L732.5,120.68 L733.5,120.75 L734.5,120.83 L735.5,120.91 L736.5,121.00 L737.5,121.09 L738.5,121.18 L739.5,121.28 L740.5,121.39 L741.5,121.50 L742.5,121.61 L743.5,121.74 L744.5,121.86 L745.5,122.00 L746.5,122.14 L747.5,122.28 L748.5,122.43 L749.5,122.59 L750.5,122.75 L751.5,122.91 L752.5,123.08 L753.5,123.26 L754.5,123.43 L755.5,123.62 L756.5,123.80 L757.5,124.00 L758.5,124.19 L759.5,124.40 L760.5,124.60 L761.5,124.82 L762.5,125.04 L763.5,125.26 L764.5,125.50 L765.5,125.73 L766.5,125.98 L767.5,126.23 L768.5,126.49 L769.5,126.75 L770.5,127.02 L771.5,127.30 L772.5,127.59 L773.5,127.88 L774.5,128.18 L775.5,128.49 L776.5,128.81 L777.5,129.13 L778.5,129.46 L779.5,129.80 L780.5,130.15 L781.5,130.50 L782.5,130.86 L783.5,131.23 L784.5,131.60 L785.5,131.98 L786.5,132.36 L787.5,132.75 L788.5,133.14 L789.5,133.53 L790.5,133.93 L791.5,134.34 L792.5,134.74 L793.5,135.15 L794.5,135.56 L795.5,135.98 L796.5,136.40 L797.5,136.81 L798.5,137.23 L799.5,137.65 L800.5,138.07 L801.5,138.49 L802.5,138.91 L803.5,139.34 L804.5,139.76 L805.5,140.17 L806.5,140.59 L807.5,141.00 L808.5,141.39 L809.5,141.76 L810.5,142.09 L811.5,142.39 L812.5,142.64 L813.5,142.84 L814.5,143.01 L815.5,143.14 L816.5,143.23 L817.5,143.31 L818.5,143.36 L819.5,143.40 L820.5,143.44 L821.5,143.46 L822.5,143.49 L823.5,143.51 L824.5,143.53 L825.5,143.54 L826.5,143.55 L827.5,143.55 L828.5,143.56 L829.5,143.56 L830.5,143.56 L831.5,143.56 L832.5,143.56 L833.5,143.55 L834.5,143.55 L835.5,143.55 L836.5,143.54 L837.5,143.54 L838.5,143.53 L839.5,143.53 L840.5,143.53 L841.5,143.53 L842.5,143.54 L843.5,143.54 L844.5,143.55 L845.5,143.56 L846.5,143.58 L847.5,143.59 L848.5,143.62 L849.5,143.64 L850.5,143.67 L851.5,143.71 L852.5,143.75 L853.5,143.80 L854.5,143.85 L855.5,143.91 L856.5,143.97 L857.5,144.05 L858.5,144.12 L859.5,144.21 L860.5,144.30 L861.5,144.40 L862.5,144.50 L863.5,144.61 L864.5,144.72 L865.5,144.84 L866.5,144.97 L867.5,145.10 L868.5,145.24 L869.5,145.38 L870.5,145.53 L871.5,145.69 L872.5,145.85 L873.5,146.01 L874.5,146.18 L875.5,146.36 L876.5,146.54 L877.5,146.73 L878.5,146.92 L879.5,147.11 L880.5,147.31 L881.5,147.52 L882.5,147.73 L883.5,147.94 L884.5,148.16 L885.5,148.38 L886.5,148.61 L887.5,148.84 L888.5,149.07 L889.5,149.31 L890.5,149.55 L891.5,149.80 L892.5,150.05 L893.5,150.30 L894.5,150.55 L895.5,150.81 L896.5,151.07 L897.5,151.34 L898.5,151.60 L899.5,151.87 L900.5,152.14 L901.5,152.42 L902.5,152.69 L903.5,152.97 L904.5,153.25 L905.5,153.54 L906.5,153.82 L907.5,154.10 L908.5,154.39 L909.5,154.68 L910.5,154.97 L911.5,155.26 L912.5,155.55 L913.5,155.84 L914.5,156.14 L915.5,156.43 L916.5,156.73 L917.5,157.02 L918.5,157.32 L919.5,157.61 L920.5,157.91 L921.5,158.21 L922.5,158.50 L923.5,158.80 L924.5,159.10 L925.5,159.39 L926.5,159.69 L927.5,159.99 L928.5,160.28 L929.5,160.58 L930.5,160.88 L931.5,161.17 L932.5,161.47 L933.5,161.77 L934.5,162.06 L935.5,162.36 L936.5,162.66 L937.5,162.95 L938.5,163.25 L939.5,163.54 L940.5,163.84 L941.5,164.14 L942.5,164.43 L943.5,164.73 L944.5,165.02 L945.5,165.32 L946.5,165.61 L947.5,165.90 L948.5,166.20 L949.5,166.49 L950.5,166.78 L951.5,167.08 L952.5,167.37 L953.5,167.66 L954.5,167.95 L955.5,168.24 L956.5,168.53 L957.5,168.82 L958.5,169.11 L959.5,169.39 L960.5,169.68 L961.5,169.96 L962.5,170.25 L963.5,170.53 L964.5,170.82 L965.5,171.10 L966.5,171.38 L967.5,171.66 L968.5,171.94 L969.5,172.21 L970.5,172.49 L971.5,172.76 L972.5,173.04 L973.5,173.31 L974.5,173.58 L975.5,173.85 L976.5,174.12 L977.5,174.39 L978.5,174.65 L979.5,174.92 L980.5,175.18 L981.5,175.44 L982.5,175.70 L983.5,175.96 L984.5,176.21 L985.5,176.47 L986.5,176.72 L987.5,176.97 L988.5,177.22 L989.5,177.47 L990.5,177.71 L991.5,177.96 L992.5,178.20 L993.5,178.44 L994.5,178.67 L995.5,178.91 L996.5,179.14 L997.5,179.37 L998.5,179.60 L999.5,179.83 L1000.5,180.05 L1001.5,180.28 L1002.5,180.50 L1003.5,180.71 L1004.5,180.93 L1005.5,181.14 L1006.5,181.35 L1007.5,181.56 L1008.5,181.77 L1009.5,181.97 L1010.5,182.17 L1011.5,182.37 L1012.5,182.56 L1013.5,182.76 L1014.5,182.95 L1015.5,183.13 L1016.5,183.32 L1017.5,183.50 L1018.5,183.68 L1019.5,183.86 L1020.5,184.03 L1021.5,184.21 L1022.5,184.38 L1023.5,184.54 L1024.5,184.71 L1025.5,184.87 L1026.5,185.02 L1027.5,185.18 L1028.5,185.33 L1029.5,185.48 L1030.5,185.63 L1031.5,185.77 L1032.5,185.91 L1033.5,186.05 L1034.5,186.18 L1035.5,186.31 L1036.5,186.45 L1037.5,186.58 L1038.5,186.71 L1039.5,186.85 L1040.5,186.98 L1041.5,187.13 L1042.5,187.27 L1043.5,187.42 L1044.5,187.58 L1045.5,187.74 L1046.5,187.92 L1047.5,188.10 L1048.5,188.29 L1049.5,188.49 L1050.5,188.71 L1051.5,188.93 L1052.5,189.17 L1053.5,189.42 L1054.5,189.69 L1055.5,189.98 L1056.5,190.28 L1057.5,190.59 L1058.5,190.93 L1059.5,191.29 L1060.5,191.66 L1061.5,192.06 L1062.5,192.48 L1063.5,192.91 L1064.5,193.37 L1065.5,193.84 L1066.5,194.33 L1067.5,194.84 L1068.5,195.37 L1069.5,195.91 L1070.5,196.47 L1071.5,197.05 L1072.5,197.63 L1073.5,198.22 L1074.5,198.81 L1075.5,199.39 L1076.5,199.98 L1077.5,200.55 L1078.5,201.12 L1079.5,201.67 L1080.5,202.20 L1081.5,202.71 L1082.5,203.20 L1083.5,203.68 L1084.5,204.15 L1085.5,204.61 L1086.5,205.07 L1087.5,205.53 L1088.5,205.99 L1089.5,206.46 L1090.5,206.94 L1091.5,207.43 L1092.5,207.93 L1093.5,208.45 L1094.5,208.97 L1095.5,209.51 L1096.5,210.06 L1097.5,210.61 L1098.5,211.17 L1099.5,211.74 L1100.5,212.32 L1101.5,212.91 L1102.5,213.50 L1103.5,214.09 L1104.5,214.69 L1105.5,215.29 L1106.5,215.90 L1107.5,216.50 L1108.5,217.12 L1109.5,217.73 L1110.5,218.34 L1111.5,218.95 L1112.5,219.57 L1113.5,220.18 L1114.5,220.79 L1115.5,221.41 L1116.5,222.03 L1117.5,222.64 L1118.5,223.26 L1119.5,223.87 L1120.5,224.49 L1121.5,225.11 L1122.5,225.73 L1123.5,226.34 L1124.5,226.96 L1125.5,227.58 L1126.5,228.20 L1127.5,228.81 L1128.5,229.43 L1129.5,230.05 L1130.5,230.66 L1131.5,231.28 L1132.5,231.90 L1133.5,232.51 L1134.5,233.13 L1135.5,233.74 L1136.5,234.36 L1137.5,234.97 L1138.5,235.58 L1139.5,236.20 L1140.5,236.81 L1141.5,237.42 L1142.5,238.03 L1143.5,238.64 L1144.5,239.25 L1145.5,239.85 L1146.5,240.46 L1147.5,241.06 L1148.5,241.67 L1149.5,242.27 L1150.5,242.87 L1151.5,243.47 L1152.5,244.07 L1153.5,244.67 L1154.5,245.26 L1155.5,245.86 L1156.5,246.45 L1157.5,247.04 L1158.5,247.63 L1159.5,248.22 L1160.5,248.80 L1161.5,249.39 L1162.5,249.97 L1163.5,250.55 L1164.5,251.13 L1165.5,251.71 L1166.5,252.28 L1167.5,252.85 L1168.5,253.42 L1169.5,253.99 L1170.5,254.56 L1171.5,255.12 L1172.5,255.68 L1173.5,256.24 L1174.5,256.80 L1175.5,257.35 L1176.5,257.90 L1177.5,258.45 L1178.5,259.00 L1179.5,259.54 L1180.5,260.08 L1181.5,260.62 L1182.5,261.16 L1183.5,261.70 L1184.5,262.24 L1185.5,262.77 L1186.5,263.31 L1187.5,263.84 L1188.5,264.37 L1189.5,264.91 L1190.5,265.44 L1191.5,265.98 L1192.5,266.51 L1193.5,267.05 L1194.5,267.58 L1195.5,268.12 L1196.5,268.66 L1197.5,269.20 L1198.5,269.75 L1199.5,270.29 L1200.5,270.84 L1201.5,271.39 L1202.5,271.94 L1203.5,272.50 L1204.5,273.06 L1205.5,273.62 L1206.5,274.19 L1207.5,274.76 L1208.5,275.33 L1209.5,275.91 L1210.5,276.49 L1211.5,277.08 L1212.5,277.67 L1213.5,278.27 L1214.5,278.87 L1215.5,279.48 L1216.5,280.09 L1217.5,280.71 L1218.5,281.34 L1219.5,281.97 L1220.5,282.61 L1221.5,283.26 L1222.5,283.91 L1223.5,284.57 L1224.5,285.24 L1225.5,285.91 L1226.3,286.46" fill="none" stroke="#ff0000" stroke-width="3" stroke-linejoin="round" shape-rendering="crispEdges" clip-path="url(#pc)"/>
<line x1="970" y1="392" x2="970" y2="460" stroke="#ff0000" stroke-width="2"/>
<polygon points="969,379.5 971.5,379.5 972.5,388 975,388 975,393.5 966,393.5 966,388 968.5,388" fill="#ff0000"/>
<line x1="1082" y1="168" x2="1082" y2="178" stroke="#ff0000" stroke-width="2"/>
<polygon points="1078,172 1087,172 1085,180 1084,186.5 1081,186.5 1080,180" fill="#ff0000"/>
<path d="M951.5,418 l3,-3.5 M951,413.5 l1.5,1.5" stroke="#000" stroke-width="1"/>
<rect x="595" y="413" width="6" height="2.5" fill="#000"/>
<rect x="8" y="32" width="22" height="21" fill="#f7f7f7"/><path d="M8.5,53 V32.5 H30" stroke="#a0a0a0" stroke-width="1" fill="none"/><path d="M29.5,33 V52.5 H9" stroke="#ffffff" stroke-width="1" fill="none"/>
<path d="M16.5,36.5 L16.5,48 L19,45.5 L21.5,50 L23.5,49 L21,44.5 L24.5,44.5 Z" fill="#fff" stroke="#4a5a80" stroke-width="1"/>
<circle cx="45" cy="40.5" r="5.5" fill="#cfe0f6" stroke="#4a6a9a" stroke-width="1"/>
<rect x="34.5" y="38.5" width="8" height="8" fill="#d6e4f7" stroke="#4a6a9a"/>
<path d="M38.5,43 v6 a4,1.5 0 0 0 8,0 v-6" fill="#c9dcf4" stroke="#4a6a9a"/><ellipse cx="42.5" cy="43" rx="4" ry="1.5" fill="#eef4fc" stroke="#4a6a9a"/>
<polygon points="57.5,41 65.5,41 61.5,45.5" fill="#000"/>
<rect x="72.5" y="35.5" width="15" height="14" fill="url(#gb)" stroke="#3f5373" stroke-width="1"/>
<polyline points="73,43 77,39 81,43 85,40 87,40" stroke="#2050c0" fill="none" stroke-width="1"/>
<circle cx="79.5" cy="43" r="3.3" fill="#e8eef8" stroke="#707880" stroke-width="1.2"/><line x1="82" y1="45.5" x2="86" y2="49" stroke="#e89030" stroke-width="2.2"/>
<rect x="95.5" y="35.5" width="15" height="14" fill="url(#gb)" stroke="#3f5373" stroke-width="1"/>
<polyline points="96,43 100,38 104,43 108,39 110,39" stroke="#2050c0" fill="none" stroke-width="1"/>
<line x1="99.5" y1="36" x2="99.5" y2="44" stroke="#000" stroke-dasharray="1.5 1.5"/><line x1="106.5" y1="36" x2="106.5" y2="44" stroke="#000" stroke-dasharray="1.5 1.5"/>
<path d="M98,45.5 h10 M98,47.5 h10" stroke="#26406a" stroke-dasharray="2 1" stroke-width="1"/>
<rect x="118.5" y="35.5" width="15" height="14" fill="url(#gb)" stroke="#3f5373" stroke-width="1"/>
<path d="M121,47.5 Q127,46 131.5,39" stroke="#f08a1c" stroke-width="1.2" fill="none" stroke-dasharray="2 0.6"/>
<path d="M119,38.5 l3,-2.5 v5 z M133,38.5 l-3,-2.5 v5 z" fill="#3060c0"/><path d="M121,38.5 h3 M128,38.5 h3" stroke="#3060c0" stroke-width="1.5"/>
<rect x="141.5" y="35.5" width="15" height="14" fill="url(#gb)" stroke="#3f5373" stroke-width="1"/>
<path d="M144,47.5 Q150,46 154.5,39" stroke="#f08a1c" stroke-width="1.2" fill="none" stroke-dasharray="2 0.6"/>
<path d="M145.5,35 l-3,3.5 h6 z M145.5,50 l-3,-3.5 h6 z" fill="#3060c0"/><path d="M145.5,38 v9" stroke="#3060c0" stroke-width="1.5"/>
<rect x="164.5" y="35.5" width="15" height="14" fill="url(#gb)" stroke="#3f5373" stroke-width="1"/>
<path d="M167,47.5 Q173,46 177.5,39" stroke="#f08a1c" stroke-width="1.2" fill="none" stroke-dasharray="2 0.6"/>
<path d="M166,37 l5,5" stroke="#3060c0" stroke-width="1"/><path d="M173,43 l-5,-1 l4,-4 z" fill="#3060c0"/>
<rect x="187.5" y="35.5" width="15" height="14" fill="url(#gb)" stroke="#3f5373" stroke-width="1"/>
<path d="M190,47.5 Q196,46 200.5,39" stroke="#f08a1c" stroke-width="1.2" fill="none" stroke-dasharray="2 0.6"/>
<text x="188" y="46" font-family="Liberation Serif" font-style="italic" font-weight="bold" font-size="11" fill="#111">fx</text>
<text x="211.5" y="48.7" font-family="Liberation Serif" font-weight="bold" font-size="17.5" fill="#000" stroke="#000" stroke-width="0.7">T</text>
<line x1="232.5" y1="34" x2="232.5" y2="52" stroke="#a6a6a6" stroke-width="1"/><line x1="233.5" y1="34" x2="233.5" y2="52" stroke="#ffffff" stroke-width="1"/>
<rect x="238.5" y="40.5" width="11" height="9" fill="#eef3fb" stroke="#48638a"/><rect x="238.5" y="40.5" width="11" height="2" fill="#5a8ad0"/>
<path d="M241,45 h7 M241,47.5 h7" stroke="#6a86b0" stroke-width="1"/>
<path d="M242,41 l4,-5 h6 l1,4 h-5 l-3,3 z" fill="#e8c040" stroke="#a08020" stroke-width="0.8"/><rect x="253" y="36" width="1.5" height="5" fill="#30a040"/>
<line x1="260.5" y1="34" x2="260.5" y2="52" stroke="#a6a6a6" stroke-width="1"/><line x1="261.5" y1="34" x2="261.5" y2="52" stroke="#ffffff" stroke-width="1"/>
<polygon points="271,37 278,42.5 271,48" fill="#1e8a2a"/>
<rect x="293.5" y="38.5" width="8" height="8" fill="#e0e0e0" stroke="#bdbdbd"/>
<rect x="317" y="38.5" width="2.5" height="8" fill="#e6e6e6" stroke="#bdbdbd" stroke-width="0.8"/><rect x="321.5" y="38.5" width="2.5" height="8" fill="#e6e6e6" stroke="#bdbdbd" stroke-width="0.8"/>
<line x1="334.5" y1="34" x2="334.5" y2="52" stroke="#a6a6a6" stroke-width="1"/><line x1="335.5" y1="34" x2="335.5" y2="52" stroke="#ffffff" stroke-width="1"/>
<rect x="340.5" y="35.5" width="15" height="14" fill="#f4f1e8" stroke="#9a9a9a"/><path d="M348,36 v13 M341,42.5 h14" stroke="#c8c8c0"/>
<polyline points="342,48 345,46 348,42 351,40 354,37" stroke="#d04040" fill="none" stroke-width="1.2"/>
<rect x="343" y="44.5" width="3" height="3" fill="#d04040"/><rect x="346.5" y="40.5" width="3" height="3" fill="#d04040"/><rect x="351" y="37" width="3" height="3" fill="#d04040"/>
<rect x="363.5" y="35.5" width="15" height="14" fill="#f4f1e8" stroke="#9a9a9a"/><path d="M371,36 v13 M364,42.5 h14" stroke="#c8c8c0"/>
<polyline points="365,48 368,46 371,42 374,40 377,37" stroke="#d04040" fill="none" stroke-width="1.2"/>
<rect x="366" y="44.5" width="3" height="3" fill="#fff" stroke="#d04040"/><rect x="373" y="38" width="3" height="3" fill="#fff" stroke="#d04040"/>
<line x1="385.5" y1="34" x2="385.5" y2="52" stroke="#a6a6a6" stroke-width="1"/><line x1="386.5" y1="34" x2="386.5" y2="52" stroke="#ffffff" stroke-width="1"/>
<rect x="391.5" y="36.5" width="14" height="13" fill="url(#gb)" stroke="#8aa2c4" stroke-width="1"/><path d="M405.5,37 V49.5 H392" stroke="#26405f" stroke-width="1.6" fill="none"/>
<rect x="394" y="39" width="9" height="7" fill="none" stroke="#f08a1c" stroke-width="1.5" stroke-dasharray="1 0.8"/>
<rect x="414.5" y="36.5" width="14" height="13" fill="url(#gb)" stroke="#8aa2c4" stroke-width="1"/><path d="M428.5,37 V49.5 H415" stroke="#26405f" stroke-width="1.6" fill="none"/>
<path d="M419,40 h2 M420,39 v2 M424,40 h2 M425,39 v2 M419,45 h2 M420,44 v2 M424,45 h2 M425,44 v2" stroke="#f08a1c" stroke-width="0.9"/>
<line x1="436.5" y1="34" x2="436.5" y2="52" stroke="#a6a6a6" stroke-width="1"/><line x1="437.5" y1="34" x2="437.5" y2="52" stroke="#ffffff" stroke-width="1"/>
<rect x="439" y="32" width="22" height="21" fill="#f7f7f7"/><path d="M439.5,53 V32.5 H461" stroke="#a0a0a0" stroke-width="1" fill="none"/><path d="M460.5,33 V52.5 H440" stroke="#ffffff" stroke-width="1" fill="none"/>
<rect x="462" y="32" width="22" height="21" fill="#f7f7f7"/><path d="M462.5,53 V32.5 H484" stroke="#a0a0a0" stroke-width="1" fill="none"/><path d="M483.5,33 V52.5 H463" stroke="#ffffff" stroke-width="1" fill="none"/>
<rect x="485" y="32" width="22" height="21" fill="#f7f7f7"/><path d="M485.5,53 V32.5 H507" stroke="#a0a0a0" stroke-width="1" fill="none"/><path d="M506.5,33 V52.5 H486" stroke="#ffffff" stroke-width="1" fill="none"/>
<rect x="443.5" y="37.5" width="14" height="13" fill="url(#gb)" stroke="#8aa2c4" stroke-width="1"/><path d="M457.5,38 V50.5 H444" stroke="#26405f" stroke-width="1.6" fill="none"/>
<path d="M449.5,40 v8 M451.5,40 v8 M453.5,40 v8 M455.5,40 v8" stroke="#f08a1c" stroke-width="1"/>
<rect x="466.5" y="37.5" width="14" height="13" fill="url(#gb)" stroke="#8aa2c4" stroke-width="1"/><path d="M480.5,38 V50.5 H467" stroke="#26405f" stroke-width="1.6" fill="none"/>
<path d="M470,40.5 h9 M470,42.5 h9 M470,44.5 h9 M470,46.5 h9" stroke="#f08a1c" stroke-width="1"/>
<rect x="489.5" y="37.5" width="14" height="13" fill="url(#gb)" stroke="#8aa2c4" stroke-width="1"/><path d="M503.5,38 V50.5 H490" stroke="#26405f" stroke-width="1.6" fill="none"/>
<path d="M496.5,40 v8 M499,40 v8 M501.5,40 v8" stroke="#f08a1c" stroke-width="1"/>
<rect x="511.5" y="36.5" width="14" height="13" fill="url(#gb)" stroke="#8aa2c4" stroke-width="1"/><path d="M525.5,37 V49.5 H512" stroke="#26405f" stroke-width="1.6" fill="none"/>
<path d="M518.5,39 v7 M522.5,39 v7" stroke="#f08a1c" stroke-width="1.1"/>
<line x1="533.5" y1="34" x2="533.5" y2="52" stroke="#a6a6a6" stroke-width="1"/><line x1="534.5" y1="34" x2="534.5" y2="52" stroke="#ffffff" stroke-width="1"/>
<rect x="539.5" y="36.5" width="14" height="13" fill="url(#gb)" stroke="#8aa2c4" stroke-width="1"/><path d="M553.5,37 V49.5 H540" stroke="#26405f" stroke-width="1.6" fill="none"/>
<path d="M541,42.5 h11" stroke="#000" stroke-width="1.3"/>
<rect x="562.5" y="36.5" width="14" height="13" fill="url(#gb)" stroke="#8aa2c4" stroke-width="1"/><path d="M576.5,37 V49.5 H563" stroke="#26405f" stroke-width="1.6" fill="none"/>
<path d="M569.5,38 v10 M564,42.5 h11" stroke="#000" stroke-width="1" stroke-dasharray="1 1"/>
<rect x="582" y="32" width="21" height="21" fill="#f7f7f7"/><path d="M582.5,53 V32.5 H603" stroke="#a0a0a0" stroke-width="1" fill="none"/><path d="M602.5,33 V52.5 H583" stroke="#ffffff" stroke-width="1" fill="none"/>
<rect x="605" y="32" width="22" height="21" fill="#f7f7f7"/><path d="M605.5,53 V32.5 H627" stroke="#a0a0a0" stroke-width="1" fill="none"/><path d="M626.5,33 V52.5 H606" stroke="#ffffff" stroke-width="1" fill="none"/>
<rect x="586.5" y="37.5" width="14" height="13" fill="url(#gb)" stroke="#8aa2c4" stroke-width="1"/><path d="M600.5,38 V50.5 H587" stroke="#26405f" stroke-width="1.6" fill="none"/>
<path d="M588,39 Q596,39.5 599,48" stroke="#f08a1c" stroke-width="1.2" fill="none"/><path d="M588,47 h10" stroke="#2040ff" stroke-width="1" stroke-dasharray="1.5 1"/>
<rect x="609.5" y="37.5" width="14" height="13" fill="url(#gb)" stroke="#8aa2c4" stroke-width="1"/><path d="M623.5,38 V50.5 H610" stroke="#26405f" stroke-width="1.6" fill="none"/>
<path d="M611,39 Q619,39.5 622,48" stroke="#f08a1c" stroke-width="1.2" fill="none"/><path d="M614,40 v5" stroke="#e00000" stroke-width="1.5"/><path d="M611,44 h6 l-3,4 z" fill="#e00000"/>
<line x1="630.5" y1="34" x2="630.5" y2="52" stroke="#a6a6a6" stroke-width="1"/><line x1="631.5" y1="34" x2="631.5" y2="52" stroke="#ffffff" stroke-width="1"/>
<circle cx="644" cy="42.4" r="7.3" fill="url(#cb)" stroke="#4a5a70" stroke-width="1"/>
<text x="640.5" y="45.9" font-family="Liberation Serif" font-weight="bold" font-size="11" fill="#111">x</text>
<path d="M648,50.4 l2,-3 l2,3 z" fill="#f0a020"/>
<circle cx="667" cy="42.4" r="7.3" fill="url(#cb)" stroke="#4a5a70" stroke-width="1"/>
<text x="663.5" y="45.4" font-family="Liberation Serif" font-weight="bold" font-size="11" fill="#111">y</text>
<path d="M671,50.4 l2,-3 l2,3 z" fill="#f0a020"/>
<circle cx="690" cy="42.4" r="7.3" fill="url(#cb)" stroke="#4a5a70" stroke-width="1"/>
<text x="685" y="45.9" font-family="Liberation Serif" font-style="italic" font-size="10" fill="#111">fx</text>
<path d="M694,50.4 l2,-3 l2,3 z" fill="#f0a020"/>
<circle cx="712" cy="42.4" r="7.3" fill="url(#cb)" stroke="#4a5a70" stroke-width="1"/>
<rect x="707.5" y="38.6" width="9" height="1.5" fill="#d8103a"/><rect x="707.5" y="41.6" width="9" height="1.5" fill="#d8103a"/><rect x="707.5" y="44.6" width="9" height="1.5" fill="#d8103a"/>
<path d="M716,50.4 l2,-3 l2,3 z" fill="#f0a020"/>
<line x1="727.5" y1="34" x2="727.5" y2="52" stroke="#a6a6a6" stroke-width="1"/><line x1="728.5" y1="34" x2="728.5" y2="52" stroke="#ffffff" stroke-width="1"/>
<rect x="733.5" y="40.5" width="12" height="9" fill="#f4f7fc" stroke="#5a7ab0"/><rect x="733.5" y="40.5" width="12" height="2" fill="#6a90d0"/><path d="M737.5,41 v8 M741.5,41 v8 M734,45 h12" stroke="#6a90d0"/>
<path d="M741,44 l6,-7 l2,2 l-6,7 z" fill="#f0f0f0" stroke="#707070" stroke-width="0.9"/>
<line x1="755.5" y1="34" x2="755.5" y2="52" stroke="#a6a6a6" stroke-width="1"/><line x1="756.5" y1="34" x2="756.5" y2="52" stroke="#ffffff" stroke-width="1"/>
<rect x="758" y="32" width="22" height="21" fill="#f7f7f7"/><path d="M758.5,53 V32.5 H780" stroke="#a0a0a0" stroke-width="1" fill="none"/><path d="M779.5,33 V52.5 H759" stroke="#ffffff" stroke-width="1" fill="none"/>
<rect x="763" y="37" width="15" height="12" fill="#fff"/><path d="M762.75,36 v14.5 M762,36.75 h16 M762,49.25 h16" stroke="#707070" stroke-width="1.5" fill="none"/><path d="M770.5,37.5 v11" stroke="#000" stroke-width="1.2" stroke-dasharray="1.5 1"/><path d="M764,43 h13" stroke="#118011" stroke-width="1.4"/><rect x="763" y="41.5" width="3" height="3" fill="#118011"/><rect x="775" y="41.5" width="3" height="3" fill="#118011"/><rect x="769" y="41.5" width="3" height="3" fill="#118011"/>
<rect x="785" y="37" width="15" height="12" fill="#fff"/><path d="M784.75,36 v14.5 M784,36.75 h16 M784,49.25 h16" stroke="#707070" stroke-width="1.5" fill="none"/><path d="M792.5,37.5 v11" stroke="#000" stroke-width="1.2" stroke-dasharray="1.5 1"/><path d="M786,42.5 h13" stroke="#118011" stroke-width="1.4"/><rect x="785" y="41" width="3" height="3" fill="#118011"/><rect x="797" y="41" width="3" height="3" fill="#118011"/>
<rect x="808" y="37" width="15" height="12" fill="#fff"/><path d="M807.75,36 v14.5 M807,36.75 h16 M807,49.25 h16" stroke="#707070" stroke-width="1.5" fill="none"/><path d="M809,49 Q815,30 821,49" stroke="#1a8a1a" stroke-width="1.2" fill="none"/><path d="M814.5,39 v10" stroke="#000" stroke-dasharray="1.5 1"/>
<rect x="831" y="37" width="15" height="12" fill="#fff"/><path d="M830.75,36 v14.5 M830,36.75 h16 M830,49.25 h16" stroke="#707070" stroke-width="1.5" fill="none"/><path d="M832,37 Q838,56 844,37" stroke="#1a8a1a" stroke-width="1.2" fill="none"/><path d="M837.5,37 v10" stroke="#000" stroke-dasharray="1.5 1"/>
<rect x="853" y="37" width="15" height="12" fill="#fff"/><path d="M852.75,36 v14.5 M852,36.75 h16 M852,49.25 h16" stroke="#707070" stroke-width="1.5" fill="none"/><path d="M853,48 Q856,42 858,46 T863,44 T867,42" stroke="#1a8a1a" stroke-width="1.2" fill="none"/><path d="M861.5,37 v12" stroke="#000" stroke-dasharray="1.5 1"/>
<rect x="876" y="37" width="15" height="12" fill="#fff"/><path d="M875.75,36 v14.5 M875,36.75 h16 M875,49.25 h16" stroke="#707070" stroke-width="1.5" fill="none"/><path d="M876,40 Q879,35 881,41 T886,43 T890,44" stroke="#1a8a1a" stroke-width="1.2" fill="none"/><path d="M885.5,37 v12" stroke="#000" stroke-dasharray="1.5 1"/>
<rect x="899" y="37" width="15" height="12" fill="#fff"/><path d="M898.75,36 v14.5 M898,36.75 h16 M898,49.25 h16" stroke="#707070" stroke-width="1.5" fill="none"/><path d="M899,49 L913,37" stroke="#1a8a1a" stroke-width="1.2" fill="none"/><path d="M905.5,37 v12" stroke="#000" stroke-dasharray="1.5 1"/>
<rect x="923" y="37" width="15" height="12" fill="#fff"/><path d="M922.75,36 v14.5 M922,36.75 h16 M922,49.25 h16" stroke="#707070" stroke-width="1.5" fill="none"/><path d="M923,48 Q930,32 937,44" stroke="#1a8a1a" stroke-width="1.1" fill="none"/><path d="M923,39 Q930,44 934,49" stroke="#1a8a1a" stroke-width="1.1" fill="none"/><path d="M926.5,37 v12" stroke="#000" stroke-dasharray="1.5 1"/>
<rect x="946" y="37" width="15" height="12" fill="#fff"/><path d="M945.75,36 v14.5 M945,36.75 h16 M945,49.25 h16" stroke="#707070" stroke-width="1.5" fill="none"/><path d="M946,39 Q953,52 960,41" stroke="#1a8a1a" stroke-width="1.1" fill="none"/><path d="M946,48 Q953,39 957,37" stroke="#1a8a1a" stroke-width="1.1" fill="none"/><path d="M949.5,37 v12" stroke="#000" stroke-dasharray="1.5 1"/>
<rect x="969" y="37" width="15" height="12" fill="#fff"/><path d="M968.75,36 v14.5 M968,36.75 h16 M968,49.25 h16" stroke="#707070" stroke-width="1.5" fill="none"/><path d="M969,38 Q976,43 983,38 M969,42 Q976,47 983,42 M969,46 Q976,51 983,46" stroke="#1a8a1a" stroke-width="1.1" fill="none"/><path d="M975.5,37 v10" stroke="#000" stroke-dasharray="1.5 1"/><path d="M973,47 h5 l-2.5,2.5 z" fill="#000"/>
<rect x="992" y="37" width="15" height="12" fill="#fff"/><path d="M991.75,36 v14.5 M991,36.75 h16 M991,49.25 h16" stroke="#707070" stroke-width="1.5" fill="none"/><path d="M992,42 Q999,37 1006,42 M992,46 Q999,41 1006,46 M992,49 Q999,45 1006,49" stroke="#1a8a1a" stroke-width="1.1" fill="none"/><path d="M998.5,39 v10" stroke="#000" stroke-dasharray="1.5 1"/><path d="M996,39 h5 l-2.5,-2.5 z" fill="#000"/>
<line x1="1013.5" y1="34" x2="1013.5" y2="52" stroke="#a6a6a6" stroke-width="1"/><line x1="1014.5" y1="34" x2="1014.5" y2="52" stroke="#ffffff" stroke-width="1"/>
<rect x="1019.5" y="36.5" width="11" height="12" rx="1" fill="#e8c060" stroke="#a08030"/><rect x="1022" y="35" width="6" height="3" fill="#c0a050"/>
<rect x="1024.5" y="42.5" width="10" height="8" fill="#fff" stroke="#4a6aa0"/><path d="M1026,47 l1.5,-1.5 l1.5,1.5 l1.5,-1.5 l1.5,1.5" stroke="#e04020" fill="none" stroke-width="0.9"/><rect x="1025" y="43" width="9" height="1.5" fill="#6a8ad0"/>
<polygon points="1042.5,40.5 1050.0,40.5 1046.25,45.0" fill="#000"/>
<line x1="1056.5" y1="34" x2="1056.5" y2="52" stroke="#a6a6a6" stroke-width="1"/><line x1="1057.5" y1="34" x2="1057.5" y2="52" stroke="#ffffff" stroke-width="1"/>
<rect x="1064.5" y="36.5" width="12" height="12" fill="#f4f7fc" stroke="#5a7ab0"/><rect x="1065" y="37" width="11" height="2" fill="#6a90e0"/><path d="M1067,41.5 h7 M1067,43.5 h7 M1067,45.5 h7" stroke="#6a7a90"/>
<line x1="1084.5" y1="34" x2="1084.5" y2="52" stroke="#a6a6a6" stroke-width="1"/><line x1="1085.5" y1="34" x2="1085.5" y2="52" stroke="#ffffff" stroke-width="1"/>
<rect x="1090.5" y="35.5" width="11" height="12" rx="1" fill="#e8c060" stroke="#a08030"/><rect x="1093" y="34.5" width="6" height="3" fill="#c0a050"/>
<rect x="1094.5" y="41.5" width="12" height="9" fill="#fff" stroke="#3a5a90"/><text x="1095.5" y="49.5" font-family="Liberation Sans" font-size="7" fill="#222" letter-spacing="-0.5">123</text>
<line x1="1112.5" y1="34" x2="1112.5" y2="52" stroke="#a6a6a6" stroke-width="1"/><line x1="1113.5" y1="34" x2="1113.5" y2="52" stroke="#ffffff" stroke-width="1"/>
<rect x="1115" y="32" width="22" height="21" fill="#f7f7f7"/><path d="M1115.5,53 V32.5 H1137" stroke="#a0a0a0" stroke-width="1" fill="none"/><path d="M1136.5,33 V52.5 H1116" stroke="#ffffff" stroke-width="1" fill="none"/>
<rect x="1138" y="32" width="22" height="21" fill="#f7f7f7"/><path d="M1138.5,53 V32.5 H1160" stroke="#a0a0a0" stroke-width="1" fill="none"/><path d="M1159.5,33 V52.5 H1139" stroke="#ffffff" stroke-width="1" fill="none"/>
<path d="M1120,37.5 h14 M1120,49.5 h14" stroke="#000" stroke-width="1.2"/><path d="M1119,37.5 l2,-1.5 v3 z M1135,37.5 l-2,-1.5 v3 z M1119,49.5 l2,-1.5 v3 z M1135,49.5 l-2,-1.5 v3 z" fill="#000"/>
<rect x="1122.5" y="39.5" width="9" height="8" fill="#dce6f4" stroke="#4a6a9a"/><path d="M1124,46 l2,-2 l2,1 l2,-3" stroke="#e03030" fill="none" stroke-width="0.9"/>
<path d="M1120,43.5 h2 M1132,43.5 h2" stroke="#000"/>
<path d="M1143.5,36 v14 M1156.5,36 v14" stroke="#000" stroke-width="1.2"/><path d="M1143.5,35 l-1.5,2 h3 z M1156.5,35 l-1.5,2 h3 z M1143.5,51 l-1.5,-2 h3 z M1156.5,51 l-1.5,-2 h3 z" fill="#000"/>
<rect x="1145.5" y="39.5" width="9" height="8" fill="#dce6f4" stroke="#4a6a9a"/><path d="M1147,46 l2,-2 l2,1 l2,-3" stroke="#e03030" fill="none" stroke-width="0.9"/>
<path d="M1150,36 v2 M1150,49 v2" stroke="#000"/>
<line x1="1163.5" y1="34" x2="1163.5" y2="52" stroke="#a6a6a6" stroke-width="1"/><line x1="1164.5" y1="34" x2="1164.5" y2="52" stroke="#ffffff" stroke-width="1"/>
<line x1="1178" y1="44" x2="1183" y2="49" stroke="#d8a030" stroke-width="3"/>
<circle cx="1175" cy="41" r="5.3" fill="url(#cb)" stroke="#6a7a90" stroke-width="1"/>
<path d="M1172,41 h6 M1175,38 v6" stroke="#2a4a90" stroke-width="1.8"/>
<line x1="1201" y1="44" x2="1206" y2="49" stroke="#d8a030" stroke-width="3"/>
<circle cx="1198" cy="41" r="5.3" fill="url(#cb)" stroke="#6a7a90" stroke-width="1"/>
<path d="M1195,41 h6" stroke="#2a4a90" stroke-width="1.8"/>
<line x1="1224" y1="44" x2="1229" y2="49" stroke="#d8a030" stroke-width="3"/>
<circle cx="1221" cy="41" r="5.3" fill="url(#cb)" stroke="#6a7a90" stroke-width="1"/>
<rect x="1219.5" y="34.5" width="11" height="7" fill="#fff" stroke="#5a6a80"/><text x="1220" y="40.5" font-family="Liberation Sans" font-weight="bold" font-size="6" fill="#222">100</text>
<line x1="1237.5" y1="34" x2="1237.5" y2="52" stroke="#a6a6a6" stroke-width="1"/><line x1="1238.5" y1="34" x2="1238.5" y2="52" stroke="#ffffff" stroke-width="1"/>
<rect x="11" y="63" width="16" height="13" fill="#fff"/>
<rect x="12" y="64" width="4" height="5" fill="#ffa500"/>
<rect x="17" y="64" width="4" height="5" fill="#20b020"/>
<rect x="22" y="64" width="4" height="5" fill="#3030e0"/>
<rect x="12" y="70" width="4" height="5" fill="#f03040"/>
<rect x="17" y="70" width="4" height="5" fill="#a020c0"/>
<rect x="22" y="70" width="4" height="5" fill="#40c8f0"/>
<polygon points="35,68 42.5,68 38.75,72.5" fill="#000"/>
<text x="51" y="75.5" font-family="Liberation Serif" font-weight="bold" font-size="15" fill="#2a4a90">A</text>
<line x1="71.5" y1="61" x2="71.5" y2="79" stroke="#a6a6a6" stroke-width="1"/><line x1="72.5" y1="61" x2="72.5" y2="79" stroke="#ffffff" stroke-width="1"/>
<rect x="77.5" y="63.5" width="7" height="7" fill="#c8ccd4" stroke="#4a5a70"/><rect x="84.5" y="70.5" width="7" height="6" fill="#a8acb4" stroke="#4a5a70"/><rect x="79.5" y="65.5" width="9" height="8" fill="#f0c860" stroke="#6a5a30"/>
<rect x="80.5" y="63.5" width="0" height="0"/>
<rect x="103.5" y="66.5" width="8" height="8" fill="#f0c860" stroke="#8a7a40"/><rect x="100.5" y="63.5" width="6" height="6" fill="#c8ccd4" stroke="#4a5a70"/><rect x="107.5" y="70.5" width="7" height="6" fill="#b8bcc4" stroke="#4a5a70"/>
<!-- tab nav buttons -->
<rect x="6" y="543" width="89" height="16" fill="#6e6e6e"/>
<rect x="7" y="544" width="5" height="14" fill="#f4f4f4"/>
<g fill="#ececec" stroke="#fff" stroke-width="0">
<rect x="13" y="544" width="15" height="14"/><rect x="29" y="544" width="15" height="14"/><rect x="45" y="544" width="15" height="14"/><rect x="61" y="544" width="15" height="14"/><rect x="77" y="544" width="17" height="14"/>
</g>
<g fill="none" stroke="#a8a8a8" stroke-width="1"><path d="M27.5,544 V557.5 H13 M43.5,544 V557.5 H29 M59.5,544 V557.5 H45 M75.5,544 V557.5 H61 M93.5,544 V557.5 H77"/></g>
<g fill="none" stroke="#ffffff" stroke-width="1"><path d="M13.5,557 V544.5 H27 M29.5,557 V544.5 H43 M45.5,557 V544.5 H59 M61.5,557 V544.5 H75 M77.5,557 V544.5 H93"/></g>
<path d="M19,551 h5 l-2.5,3 z" fill="#000"/>
<path d="M34.5,547 v8 M41,547 l-5,4 l5,4 z" fill="#000" stroke="#000" stroke-width="1.2"/>
<path d="M56,547 l-5,4 l5,4 z" fill="#000"/>
<path d="M67,547 l5,4 l-5,4 z" fill="#000"/>
<path d="M84,547 l5,4 l-5,4 z M90.5,547 v8" fill="#000" stroke="#000" stroke-width="1.2"/>
<path d="M95,543.5 L102.5,558.5 H133 L140.5,543.5" fill="#fff" stroke="#000" stroke-width="1"/>
<text x="102" y="555" font-family="Liberation Sans" font-weight="bold" font-size="12" fill="#000">Open</text>
</svg>
<div class="yl" style="top:99.3px">40.000</div><div class="yl" style="top:115.5px">30.000</div><div class="yl" style="top:131.7px">20.000</div><div class="yl" style="top:147.9px">10.000</div><div class="yl" style="top:164.1px">0.000</div><div class="yl" style="top:180.3px">-10.000</div><div class="yl" style="top:196.6px">-20.000</div><div class="yl" style="top:212.8px">-30.000</div><div class="yl" style="top:229.0px">-40.000</div><div class="yl" style="top:245.2px">-50.000</div><div class="yl" style="top:261.4px">-60.000</div><div class="yl" style="top:277.6px">-70.000</div><div class="yl" style="top:293.8px">-80.000</div><div class="yl" style="top:310.0px">-90.000</div><div class="yl" style="top:326.2px">-100.000</div><div class="yl" style="top:342.4px">-110.000</div><div class="yl" style="top:358.6px">-120.000</div><div class="yl" style="top:374.8px">-130.000</div><div class="yl" style="top:391.1px">-140.000</div><div class="yl" style="top:407.3px">-150.000</div><div class="yl" style="top:423.5px">-160.000</div><div class="yl" style="top:439.7px">-170.000</div><div class="yl" style="top:455.9px">-180.000</div><div class="yl" style="top:472.1px">-190.000</div><div class="yl" style="top:488.3px">-200.000</div>
<div class="xl" style="left:58px;top:495px">10</div><div class="xl xc" style="left:195.9px;top:495px">100</div><div class="xl xc" style="left:362.7px;top:495px">1K</div><div class="xl xc" style="left:529.6px;top:495px">10K</div><div class="xl xc" style="left:696.4px;top:495px">100K</div><div class="xl xc" style="left:863.3px;top:495px">1M</div><div class="xl xc" style="left:1030.1px;top:495px">10M</div><div class="xl xc" style="left:1197.0px;top:495px">100M</div>
<div class="xl" style="left:546px;top:92px">R1983-11_KP904_Borisov.CIR CL=0...2u</div>
<div class="xl" style="left:58px;top:507px;text-decoration:underline">dB(LoopGain)</div>
<div class="xl" style="left:235px;top:507px;color:#ff0000">ph(LoopGain) (Degrees)</div>
<div class="xl" style="left:577px;top:520px">F (Hz)</div>
<div class="ann" style="left:701px;top:200px;width:355px;height:26px;color:#008000">Gain Margin=12.359 FG=13.668MEG</div>
<div class="ann" style="left:595px;top:415px;width:357px;height:26px;color:#ff0000">Phase Margin=51.237 FP=2.903MEG</div>
</body></html>
